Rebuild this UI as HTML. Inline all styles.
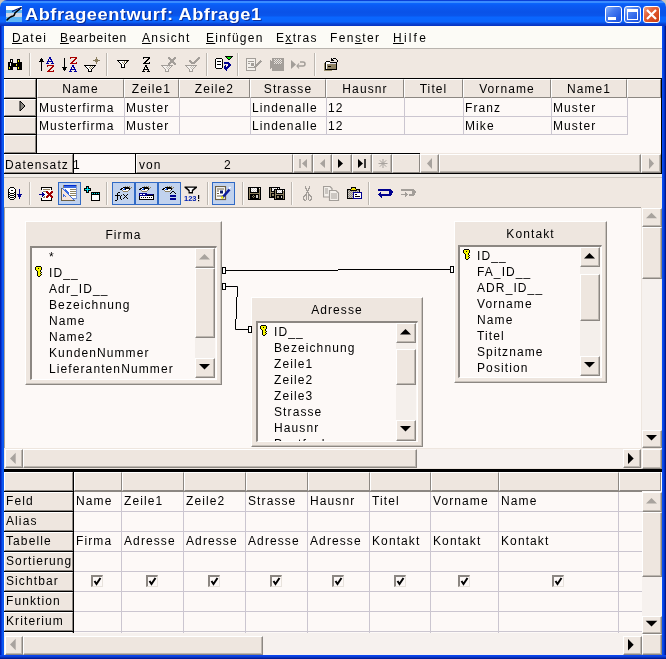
<!DOCTYPE html>
<html><head><meta charset="utf-8">
<style>
*{box-sizing:border-box}
html,body{margin:0;padding:0;width:666px;height:659px;overflow:hidden;background:#c8c4bc;font-family:"Liberation Sans",sans-serif;font-size:12px;color:#000}
.a{position:absolute}
.t{position:absolute;white-space:nowrap;line-height:14px;font-size:12px;letter-spacing:1.1px;margin-top:1px;will-change:transform}
.btn{position:absolute;background:#eee6df;border-top:1px solid #fff;border-left:1px solid #fff;border-right:1px solid #8c8782;border-bottom:1px solid #8c8782;box-shadow:inset -1px -1px 0 #bdb7b0}
.hd{position:absolute;background:#eee6df;border-top:1px solid #fff;border-left:1px solid #fff;border-right:1px solid #8c8782;border-bottom:1px solid #8c8782}
.sep{position:absolute;width:2px;border-left:1px solid #c5bfb8;border-right:1px solid #fff}
.tri-up{position:absolute;width:0;height:0;border-left:5px solid transparent;border-right:5px solid transparent;border-bottom:5px solid #000}
.tri-dn{position:absolute;width:0;height:0;border-left:5px solid transparent;border-right:5px solid transparent;border-top:5px solid #000}
.tri-r{position:absolute;width:0;height:0;border-top:5px solid transparent;border-bottom:5px solid transparent;border-left:5px solid #000}
.tri-l{position:absolute;width:0;height:0;border-top:5px solid transparent;border-bottom:5px solid transparent;border-right:5px solid #000}
.dis{border-bottom-color:#aaa5a0!important;border-top-color:#aaa5a0!important;border-left-color:#aaa5a0!important;border-right-color:#aaa5a0!important}
.hl{position:absolute;background:#c1d2ee;border:1px solid #316ac5}
</style></head><body>
<!-- window frame -->
<div class="a" style="left:0;top:0;width:666px;height:26px;background:linear-gradient(#0a40d8 0px,#0a40d8 1px,#3a8cff 1px,#3a8cff 3px,#0a68ff 3px,#0a5cf5 5px,#0a52e8 12px,#0a56ec 16px,#0a66ff 17px,#0a64fc 22px,#0a4ee0 23px,#0838c8 25px,#0834c0 26px);border-radius:7px 7px 0 0"></div>
<div class="a" style="left:0;top:26px;width:4px;height:633px;background:linear-gradient(to right,#0020b0 0,#0020b0 1px,#0838d8 1px,#0838d8 2px,#0a58f0 2px)"></div>
<div class="a" style="left:662px;top:26px;width:4px;height:633px;background:linear-gradient(to right,#0a4cf0 0,#0a4cf0 1px,#0840e0 1px,#0840e0 2px,#0030c0 2px,#0030c0 3px,#001890 3px)"></div>
<div class="a" style="left:0;top:655px;width:666px;height:4px;background:linear-gradient(#0a44f0 0,#0a44f0 1px,#0a40d8 1px,#0a40d8 2px,#0830b8 2px,#0830b8 3px,#001c98 3px)"></div>
<!-- app icon -->
<div class="a" style="left:6px;top:6px;width:16px;height:16px;background:linear-gradient(#fff 0,#fff 4px,#5fb6f4 4px,#5fb6f4 7px,#cfd8e6 7px,#cfd8e6 11px,#5fb6f4 11px,#5fb6f4 16px)"></div>
<svg class="a" style="left:6px;top:6px" width="16" height="16"><path d="M0.5 14.5 Q4 10.5 7 10 Q8.5 9.5 9 7 L15.5 1.5" stroke="#000" stroke-width="1.5" fill="none"/><path d="M6 5.5 Q10 3.5 15.5 1.5" stroke="#001a80" stroke-width="1.3" fill="none"/></svg>
<div class="t" style="left:25px;top:5px;font-weight:bold;font-size:16px;line-height:18px;color:#fff;letter-spacing:0.45px;transform:scaleX(1.14);transform-origin:0 0;text-shadow:1px 1px 0 #0a2e9a">Abfrageentwurf: Abfrage1</div>
<!-- title buttons -->
<div class="a" style="left:605px;top:6px;width:17px;height:17px;border:1px solid #fff;border-radius:3px;background:linear-gradient(135deg,#8cb4fa 0%,#4a7ef0 35%,#2a62e8 70%,#1c50d8 100%)"><div class="a" style="left:2px;top:10px;width:8px;height:3px;background:#fff"></div></div>
<div class="a" style="left:624px;top:6px;width:17px;height:17px;border:1px solid #fff;border-radius:3px;background:linear-gradient(135deg,#8cb4fa 0%,#4a7ef0 35%,#2a62e8 70%,#1c50d8 100%)"><div class="a" style="left:2px;top:2px;width:11px;height:11px;border:1px solid #fff;border-top-width:3px"></div></div>
<div class="a" style="left:643px;top:6px;width:17px;height:17px;border:1px solid #fff;border-radius:3px;background:linear-gradient(135deg,#f0a080 0%,#e4643c 35%,#d84c20 70%,#c83c14 100%)"><svg class="a" style="left:0;top:0" width="15" height="15"><path d="M3 3 L12 12 M12 3 L3 12" stroke="#fff" stroke-width="2.2"/></svg></div>
<!-- menu bar -->
<div class="a" style="left:4px;top:26px;width:658px;height:23px;background:#fcfbf6;border-bottom:1px solid #b9b4ae"></div>
<div class="t" style="left:12px;top:30px;letter-spacing:1.5px"><u>D</u>atei</div>
<div class="t" style="left:60px;top:30px;letter-spacing:0.9px"><u>B</u>earbeiten</div>
<div class="t" style="left:142px;top:30px;letter-spacing:1.35px"><u>A</u>nsicht</div>
<div class="t" style="left:206px;top:30px;letter-spacing:1.3px"><u>E</u>infügen</div>
<div class="t" style="left:276px;top:30px;letter-spacing:1.3px">E<u>x</u>tras</div>
<div class="t" style="left:330px;top:30px;letter-spacing:1.4px">Fen<u>s</u>ter</div>
<div class="t" style="left:393px;top:30px;letter-spacing:2.2px"><u>H</u>ilfe</div>
<!-- toolbar 1 -->
<div class="a" style="left:4px;top:49px;width:658px;height:29px;background:#f0e8e1"></div>

<!-- top grid -->
<div class="a" style="left:4px;top:78px;width:658px;height:96px;background:#000"></div>
<div class="a" style="left:37px;top:98px;width:624px;height:55px;background:#fdf9f7"></div>
<!-- header row -->
<div class="hd" style="left:4px;top:79px;width:32px;height:19px"></div>
<div class="hd" style="left:37px;top:79px;width:87px;height:19px"></div>
<div class="hd" style="left:124px;top:79px;width:55px;height:19px"></div>
<div class="hd" style="left:179px;top:79px;width:71px;height:19px"></div>
<div class="hd" style="left:250px;top:79px;width:76px;height:19px"></div>
<div class="hd" style="left:326px;top:79px;width:78px;height:19px"></div>
<div class="hd" style="left:404px;top:79px;width:59px;height:19px"></div>
<div class="hd" style="left:463px;top:79px;width:88px;height:19px"></div>
<div class="hd" style="left:551px;top:79px;width:76px;height:19px"></div>
<div class="hd" style="left:627px;top:79px;width:34px;height:19px"></div>
<div class="t" style="left:37px;width:87px;top:81px;text-align:center">Name</div>
<div class="t" style="left:124px;width:55px;top:81px;text-align:center">Zeile1</div>
<div class="t" style="left:179px;width:71px;top:81px;text-align:center">Zeile2</div>
<div class="t" style="left:250px;width:76px;top:81px;text-align:center">Strasse</div>
<div class="t" style="left:326px;width:78px;top:81px;text-align:center">Hausnr</div>
<div class="t" style="left:404px;width:59px;top:81px;text-align:center">Titel</div>
<div class="t" style="left:463px;width:88px;top:81px;text-align:center">Vorname</div>
<div class="t" style="left:551px;width:76px;top:81px;text-align:center">Name1</div>
<!-- row headers -->
<div class="hd" style="left:4px;top:99px;width:32px;height:17px"></div>
<div class="hd" style="left:4px;top:117px;width:32px;height:17px"></div>
<div class="hd" style="left:4px;top:135px;width:32px;height:18px"></div>
<svg class="a" style="left:19px;top:99px" width="8" height="14"><path d="M1 2 L6 7 L1 12 Z" fill="#8c8882" stroke="#000" stroke-width="1"/></svg>
<!-- data grid lines -->
<div class="a" style="left:37px;top:116px;width:590px;height:1px;background:#cbc6d0"></div>
<div class="a" style="left:37px;top:134px;width:590px;height:1px;background:#cbc6d0"></div>
<div class="a" style="left:124px;top:98px;width:1px;height:37px;background:#cbc6d0"></div>
<div class="a" style="left:179px;top:98px;width:1px;height:37px;background:#cbc6d0"></div>
<div class="a" style="left:250px;top:98px;width:1px;height:37px;background:#cbc6d0"></div>
<div class="a" style="left:326px;top:98px;width:1px;height:37px;background:#cbc6d0"></div>
<div class="a" style="left:404px;top:98px;width:1px;height:37px;background:#cbc6d0"></div>
<div class="a" style="left:463px;top:98px;width:1px;height:37px;background:#cbc6d0"></div>
<div class="a" style="left:551px;top:98px;width:1px;height:37px;background:#cbc6d0"></div>
<div class="a" style="left:627px;top:98px;width:1px;height:37px;background:#cbc6d0"></div>
<div class="t" style="left:39px;top:100px">Musterfirma</div>
<div class="t" style="left:126px;top:100px">Muster</div>
<div class="t" style="left:252px;top:100px">Lindenalle</div>
<div class="t" style="left:328px;top:100px">12</div>
<div class="t" style="left:465px;top:100px">Franz</div>
<div class="t" style="left:553px;top:100px">Muster</div>
<div class="t" style="left:39px;top:118px">Musterfirma</div>
<div class="t" style="left:126px;top:118px">Muster</div>
<div class="t" style="left:252px;top:118px">Lindenalle</div>
<div class="t" style="left:328px;top:118px">12</div>
<div class="t" style="left:465px;top:118px">Mike</div>
<div class="t" style="left:553px;top:118px">Muster</div>
<!-- record bar -->
<div class="hd" style="left:4px;top:154px;width:69px;height:19px"></div>
<div class="a" style="left:74px;top:154px;width:61px;height:19px;background:#fdf9f7"></div>
<div class="hd" style="left:136px;top:154px;width:157px;height:19px"></div>
<div class="t" style="left:5px;top:157px">Datensatz</div>
<div class="t" style="left:73px;top:157px">1</div>
<div class="t" style="left:139px;top:157px">von</div>
<div class="t" style="left:224px;top:157px">2</div>
<div class="btn" style="left:293px;top:154px;width:20px;height:19px"></div>
<div class="btn" style="left:313px;top:154px;width:19px;height:19px"></div>
<div class="btn" style="left:332px;top:154px;width:20px;height:19px"></div>
<div class="btn" style="left:352px;top:154px;width:20px;height:19px"></div>
<div class="btn" style="left:372px;top:154px;width:20px;height:19px"></div>
<div class="hd" style="left:392px;top:154px;width:28px;height:19px"></div>
<svg class="a" style="left:293px;top:154px" width="100" height="19">
 <path d="M7 5 V14" stroke="#a8a39e" stroke-width="1.5"/><path d="M14 5 L9 9.5 L14 14Z" fill="#a8a39e"/>
 <path d="M32 5 L27 9.5 L32 14Z" fill="#a8a39e"/>
 <path d="M45 5 L50 9.5 L45 14Z" fill="#000"/>
 <path d="M65 5 L70 9.5 L65 14Z" fill="#000"/><path d="M72 5 V14" stroke="#000" stroke-width="1.5"/>
 <path d="M90 5 V14 M85.5 9.5 H94.5 M86.8 6.3 L93.2 12.7 M93.2 6.3 L86.8 12.7" stroke="#a8a39e" stroke-width="1"/>
</svg>
<!-- h scrollbar -->
<div class="a" style="left:420px;top:153px;width:241px;height:20px;background:#eee6df"></div>
<div class="btn" style="left:420px;top:154px;width:19px;height:19px"></div>
<div class="btn" style="left:439px;top:154px;width:202px;height:19px"></div>
<div class="btn" style="left:641px;top:154px;width:20px;height:19px"></div>
<svg class="a" style="left:420px;top:154px" width="241" height="19"><path d="M12 4 L7 9.5 L12 15Z" fill="#a8a39e"/><path d="M229 4 L234 9.5 L229 15Z" fill="#a8a39e"/></svg>
<div class="a" style="left:4px;top:174px;width:658px;height:4px;background:#f1ede8;border-bottom:1px solid #c9c3bc"></div>



<div class="a" style="left:4px;top:178px;width:658px;height:30px;background:#f0e8e1"></div>
<div class="a" style="left:4px;top:207px;width:658px;height:262px;background:#fdf9f7"></div>
<div class="a" style="left:4px;top:207px;width:637px;height:1px;background:#a8a39d"></div>
<div class="a" style="left:4px;top:207px;width:1px;height:241px;background:#a8a39d"></div>
<div class="a" style="left:641px;top:207px;width:21px;height:262px;background:#eee6df"></div>
<div class="a" style="left:642px;top:227px;width:19px;height:221px;background:#f6f1ee"></div>
<div class="btn" style="left:642px;top:208px;width:20px;height:19px"></div>
<div class="btn" style="left:642px;top:227px;width:20px;height:52px"></div>
<div class="btn" style="left:642px;top:430px;width:20px;height:18px"></div>
<svg class="a" style="left:642px;top:208px" width="19" height="240"><path d="M4 10.2 L9.5 4.7 L15.0 10.2Z" fill="#a8a39e"/><path d="M4 227 L9.5 232.5 L15.0 227Z" fill="#000"/></svg>
<div class="a" style="left:4px;top:448px;width:638px;height:21px;background:#eee6df"></div>
<div class="a" style="left:23px;top:449px;width:600px;height:19px;background:#f6f1ee"></div>
<div class="btn" style="left:5px;top:449px;width:18px;height:19px"></div>
<div class="btn" style="left:23px;top:449px;width:394px;height:19px"></div>
<div class="btn" style="left:623px;top:449px;width:18px;height:19px"></div>
<div class="btn" style="left:642px;top:449px;width:20px;height:20px"></div>
<svg class="a" style="left:5px;top:449px" width="636" height="19"><path d="M10.7 3.7 L5 9.4 L10.7 15.100000000000001Z" fill="#a8a39e"/><path d="M623 3.7 L628.7 9.4 L623 15.100000000000001Z" fill="#000"/></svg>
<div class="a" style="left:25px;top:221px;width:197px;height:164px;background:#eee6df;border-top:1px solid #fff;border-left:1px solid #fff;border-right:1px solid #8c8782;border-bottom:1px solid #8c8782;box-shadow:inset -1px -1px 0 #c8c2bb"></div>
<div class="t" style="left:25px;width:197px;top:227px;text-align:center">Firma</div>
<div class="a" style="left:30px;top:246px;width:187px;height:134px;background:#fdf9f7;border-top:2px solid #8c8782;border-left:2px solid #8c8782;border-right:1px solid #fff;border-bottom:1px solid #fff;overflow:hidden"></div>
<div class="a" style="left:32px;top:248px;width:184px;height:131px;overflow:hidden">
<div class="t" style="left:17px;top:1px">*</div>
<div class="t" style="left:17px;top:17px">ID__</div>
<div class="t" style="left:17px;top:33px">Adr_ID__</div>
<div class="t" style="left:17px;top:49px">Bezeichnung</div>
<div class="t" style="left:17px;top:65px">Name</div>
<div class="t" style="left:17px;top:81px">Name2</div>
<div class="t" style="left:17px;top:97px">KundenNummer</div>
<div class="t" style="left:17px;top:113px">LieferantenNummer</div>
<svg class="a" style="left:3px;top:18px" width="8" height="11" shape-rendering="crispEdges"><rect x="1" y="0" width="1" height="1" fill="#000"/><rect x="2" y="0" width="1" height="1" fill="#000"/><rect x="3" y="0" width="1" height="1" fill="#000"/><rect x="4" y="0" width="1" height="1" fill="#000"/><rect x="5" y="0" width="1" height="1" fill="#000"/><rect x="0" y="1" width="1" height="1" fill="#000"/><rect x="1" y="1" width="1" height="1" fill="#f8f800"/><rect x="2" y="1" width="1" height="1" fill="#f8f800"/><rect x="3" y="1" width="1" height="1" fill="#f8f800"/><rect x="4" y="1" width="1" height="1" fill="#f8f800"/><rect x="5" y="1" width="1" height="1" fill="#f8f800"/><rect x="6" y="1" width="1" height="1" fill="#000"/><rect x="0" y="2" width="1" height="1" fill="#000"/><rect x="1" y="2" width="1" height="1" fill="#f8f800"/><rect x="2" y="2" width="1" height="1" fill="#f8f800"/><rect x="3" y="2" width="1" height="1" fill="#000"/><rect x="4" y="2" width="1" height="1" fill="#f8f800"/><rect x="5" y="2" width="1" height="1" fill="#f8f800"/><rect x="6" y="2" width="1" height="1" fill="#000"/><rect x="0" y="3" width="1" height="1" fill="#000"/><rect x="1" y="3" width="1" height="1" fill="#f8f800"/><rect x="2" y="3" width="1" height="1" fill="#f8f800"/><rect x="3" y="3" width="1" height="1" fill="#f8f800"/><rect x="4" y="3" width="1" height="1" fill="#f8f800"/><rect x="5" y="3" width="1" height="1" fill="#f8f800"/><rect x="6" y="3" width="1" height="1" fill="#000"/><rect x="1" y="4" width="1" height="1" fill="#000"/><rect x="2" y="4" width="1" height="1" fill="#f8f800"/><rect x="3" y="4" width="1" height="1" fill="#f8f800"/><rect x="4" y="4" width="1" height="1" fill="#f8f800"/><rect x="5" y="4" width="1" height="1" fill="#000"/><rect x="2" y="5" width="1" height="1" fill="#000"/><rect x="3" y="5" width="1" height="1" fill="#f8f800"/><rect x="4" y="5" width="1" height="1" fill="#f8f800"/><rect x="5" y="5" width="1" height="1" fill="#000"/><rect x="2" y="6" width="1" height="1" fill="#000"/><rect x="3" y="6" width="1" height="1" fill="#f8f800"/><rect x="4" y="6" width="1" height="1" fill="#f8f800"/><rect x="5" y="6" width="1" height="1" fill="#f8f800"/><rect x="6" y="6" width="1" height="1" fill="#000"/><rect x="2" y="7" width="1" height="1" fill="#000"/><rect x="3" y="7" width="1" height="1" fill="#f8f800"/><rect x="4" y="7" width="1" height="1" fill="#f8f800"/><rect x="5" y="7" width="1" height="1" fill="#000"/><rect x="2" y="8" width="1" height="1" fill="#000"/><rect x="3" y="8" width="1" height="1" fill="#f8f800"/><rect x="4" y="8" width="1" height="1" fill="#f8f800"/><rect x="5" y="8" width="1" height="1" fill="#f8f800"/><rect x="6" y="8" width="1" height="1" fill="#000"/><rect x="2" y="9" width="1" height="1" fill="#000"/><rect x="3" y="9" width="1" height="1" fill="#f8f800"/><rect x="4" y="9" width="1" height="1" fill="#f8f800"/><rect x="5" y="9" width="1" height="1" fill="#000"/><rect x="3" y="10" width="1" height="1" fill="#000"/><rect x="4" y="10" width="1" height="1" fill="#000"/></svg>
</div>
<div class="a" style="left:195px;top:248px;width:20px;height:130px;background:#f4efeb"></div>
<div class="btn" style="left:195px;top:248px;width:20px;height:20px"></div>
<div class="btn" style="left:195px;top:268px;width:20px;height:70px"></div>
<div class="btn" style="left:195px;top:358px;width:20px;height:20px"></div>
<svg class="a" style="left:195px;top:248px" width="19" height="130"><path d="M4 11.5 L9.5 6 L15.0 11.5Z" fill="#a8a39e"/><path d="M4 116 L9.5 121.5 L15.0 116Z" fill="#000"/></svg>
<div class="a" style="left:251px;top:297px;width:172px;height:150px;background:#eee6df;border-top:1px solid #fff;border-left:1px solid #fff;border-right:1px solid #8c8782;border-bottom:1px solid #8c8782;box-shadow:inset -1px -1px 0 #c8c2bb"></div>
<div class="t" style="left:251px;width:172px;top:302px;text-align:center">Adresse</div>
<div class="a" style="left:256px;top:321px;width:162px;height:121px;background:#fdf9f7;border-top:2px solid #8c8782;border-left:2px solid #8c8782;border-right:1px solid #fff;border-bottom:1px solid #fff;overflow:hidden"></div>
<div class="a" style="left:258px;top:323px;width:159px;height:118px;overflow:hidden">
<div class="t" style="left:16px;top:1px">ID__</div>
<div class="t" style="left:16px;top:17px">Bezeichnung</div>
<div class="t" style="left:16px;top:33px">Zeile1</div>
<div class="t" style="left:16px;top:49px">Zeile2</div>
<div class="t" style="left:16px;top:65px">Zeile3</div>
<div class="t" style="left:16px;top:81px">Strasse</div>
<div class="t" style="left:16px;top:97px">Hausnr</div>
<div class="t" style="left:16px;top:113px">Postfach</div>
<svg class="a" style="left:2px;top:2px" width="8" height="11" shape-rendering="crispEdges"><rect x="1" y="0" width="1" height="1" fill="#000"/><rect x="2" y="0" width="1" height="1" fill="#000"/><rect x="3" y="0" width="1" height="1" fill="#000"/><rect x="4" y="0" width="1" height="1" fill="#000"/><rect x="5" y="0" width="1" height="1" fill="#000"/><rect x="0" y="1" width="1" height="1" fill="#000"/><rect x="1" y="1" width="1" height="1" fill="#f8f800"/><rect x="2" y="1" width="1" height="1" fill="#f8f800"/><rect x="3" y="1" width="1" height="1" fill="#f8f800"/><rect x="4" y="1" width="1" height="1" fill="#f8f800"/><rect x="5" y="1" width="1" height="1" fill="#f8f800"/><rect x="6" y="1" width="1" height="1" fill="#000"/><rect x="0" y="2" width="1" height="1" fill="#000"/><rect x="1" y="2" width="1" height="1" fill="#f8f800"/><rect x="2" y="2" width="1" height="1" fill="#f8f800"/><rect x="3" y="2" width="1" height="1" fill="#000"/><rect x="4" y="2" width="1" height="1" fill="#f8f800"/><rect x="5" y="2" width="1" height="1" fill="#f8f800"/><rect x="6" y="2" width="1" height="1" fill="#000"/><rect x="0" y="3" width="1" height="1" fill="#000"/><rect x="1" y="3" width="1" height="1" fill="#f8f800"/><rect x="2" y="3" width="1" height="1" fill="#f8f800"/><rect x="3" y="3" width="1" height="1" fill="#f8f800"/><rect x="4" y="3" width="1" height="1" fill="#f8f800"/><rect x="5" y="3" width="1" height="1" fill="#f8f800"/><rect x="6" y="3" width="1" height="1" fill="#000"/><rect x="1" y="4" width="1" height="1" fill="#000"/><rect x="2" y="4" width="1" height="1" fill="#f8f800"/><rect x="3" y="4" width="1" height="1" fill="#f8f800"/><rect x="4" y="4" width="1" height="1" fill="#f8f800"/><rect x="5" y="4" width="1" height="1" fill="#000"/><rect x="2" y="5" width="1" height="1" fill="#000"/><rect x="3" y="5" width="1" height="1" fill="#f8f800"/><rect x="4" y="5" width="1" height="1" fill="#f8f800"/><rect x="5" y="5" width="1" height="1" fill="#000"/><rect x="2" y="6" width="1" height="1" fill="#000"/><rect x="3" y="6" width="1" height="1" fill="#f8f800"/><rect x="4" y="6" width="1" height="1" fill="#f8f800"/><rect x="5" y="6" width="1" height="1" fill="#f8f800"/><rect x="6" y="6" width="1" height="1" fill="#000"/><rect x="2" y="7" width="1" height="1" fill="#000"/><rect x="3" y="7" width="1" height="1" fill="#f8f800"/><rect x="4" y="7" width="1" height="1" fill="#f8f800"/><rect x="5" y="7" width="1" height="1" fill="#000"/><rect x="2" y="8" width="1" height="1" fill="#000"/><rect x="3" y="8" width="1" height="1" fill="#f8f800"/><rect x="4" y="8" width="1" height="1" fill="#f8f800"/><rect x="5" y="8" width="1" height="1" fill="#f8f800"/><rect x="6" y="8" width="1" height="1" fill="#000"/><rect x="2" y="9" width="1" height="1" fill="#000"/><rect x="3" y="9" width="1" height="1" fill="#f8f800"/><rect x="4" y="9" width="1" height="1" fill="#f8f800"/><rect x="5" y="9" width="1" height="1" fill="#000"/><rect x="3" y="10" width="1" height="1" fill="#000"/><rect x="4" y="10" width="1" height="1" fill="#000"/></svg>
</div>
<div class="a" style="left:396px;top:323px;width:20px;height:118px;background:#f4efeb"></div>
<div class="btn" style="left:396px;top:323px;width:20px;height:20px"></div>
<div class="btn" style="left:396px;top:349px;width:20px;height:36px"></div>
<div class="btn" style="left:396px;top:420px;width:20px;height:21px"></div>
<svg class="a" style="left:396px;top:323px" width="19" height="118"><path d="M4 11.5 L9.5 6 L15.0 11.5Z" fill="#000"/><path d="M4 103 L9.5 108.5 L15.0 103Z" fill="#000"/></svg>
<div class="a" style="left:454px;top:221px;width:153px;height:162px;background:#eee6df;border-top:1px solid #fff;border-left:1px solid #fff;border-right:1px solid #8c8782;border-bottom:1px solid #8c8782;box-shadow:inset -1px -1px 0 #c8c2bb"></div>
<div class="t" style="left:454px;width:153px;top:226px;text-align:center">Kontakt</div>
<div class="a" style="left:458px;top:245px;width:144px;height:133px;background:#fdf9f7;border-top:2px solid #8c8782;border-left:2px solid #8c8782;border-right:1px solid #fff;border-bottom:1px solid #fff;overflow:hidden"></div>
<div class="a" style="left:460px;top:247px;width:141px;height:130px;overflow:hidden">
<div class="t" style="left:17px;top:1px">ID__</div>
<div class="t" style="left:17px;top:17px">FA_ID__</div>
<div class="t" style="left:17px;top:33px">ADR_ID__</div>
<div class="t" style="left:17px;top:49px">Vorname</div>
<div class="t" style="left:17px;top:65px">Name</div>
<div class="t" style="left:17px;top:81px">Titel</div>
<div class="t" style="left:17px;top:97px">Spitzname</div>
<div class="t" style="left:17px;top:113px">Position</div>
<svg class="a" style="left:3px;top:2px" width="8" height="11" shape-rendering="crispEdges"><rect x="1" y="0" width="1" height="1" fill="#000"/><rect x="2" y="0" width="1" height="1" fill="#000"/><rect x="3" y="0" width="1" height="1" fill="#000"/><rect x="4" y="0" width="1" height="1" fill="#000"/><rect x="5" y="0" width="1" height="1" fill="#000"/><rect x="0" y="1" width="1" height="1" fill="#000"/><rect x="1" y="1" width="1" height="1" fill="#f8f800"/><rect x="2" y="1" width="1" height="1" fill="#f8f800"/><rect x="3" y="1" width="1" height="1" fill="#f8f800"/><rect x="4" y="1" width="1" height="1" fill="#f8f800"/><rect x="5" y="1" width="1" height="1" fill="#f8f800"/><rect x="6" y="1" width="1" height="1" fill="#000"/><rect x="0" y="2" width="1" height="1" fill="#000"/><rect x="1" y="2" width="1" height="1" fill="#f8f800"/><rect x="2" y="2" width="1" height="1" fill="#f8f800"/><rect x="3" y="2" width="1" height="1" fill="#000"/><rect x="4" y="2" width="1" height="1" fill="#f8f800"/><rect x="5" y="2" width="1" height="1" fill="#f8f800"/><rect x="6" y="2" width="1" height="1" fill="#000"/><rect x="0" y="3" width="1" height="1" fill="#000"/><rect x="1" y="3" width="1" height="1" fill="#f8f800"/><rect x="2" y="3" width="1" height="1" fill="#f8f800"/><rect x="3" y="3" width="1" height="1" fill="#f8f800"/><rect x="4" y="3" width="1" height="1" fill="#f8f800"/><rect x="5" y="3" width="1" height="1" fill="#f8f800"/><rect x="6" y="3" width="1" height="1" fill="#000"/><rect x="1" y="4" width="1" height="1" fill="#000"/><rect x="2" y="4" width="1" height="1" fill="#f8f800"/><rect x="3" y="4" width="1" height="1" fill="#f8f800"/><rect x="4" y="4" width="1" height="1" fill="#f8f800"/><rect x="5" y="4" width="1" height="1" fill="#000"/><rect x="2" y="5" width="1" height="1" fill="#000"/><rect x="3" y="5" width="1" height="1" fill="#f8f800"/><rect x="4" y="5" width="1" height="1" fill="#f8f800"/><rect x="5" y="5" width="1" height="1" fill="#000"/><rect x="2" y="6" width="1" height="1" fill="#000"/><rect x="3" y="6" width="1" height="1" fill="#f8f800"/><rect x="4" y="6" width="1" height="1" fill="#f8f800"/><rect x="5" y="6" width="1" height="1" fill="#f8f800"/><rect x="6" y="6" width="1" height="1" fill="#000"/><rect x="2" y="7" width="1" height="1" fill="#000"/><rect x="3" y="7" width="1" height="1" fill="#f8f800"/><rect x="4" y="7" width="1" height="1" fill="#f8f800"/><rect x="5" y="7" width="1" height="1" fill="#000"/><rect x="2" y="8" width="1" height="1" fill="#000"/><rect x="3" y="8" width="1" height="1" fill="#f8f800"/><rect x="4" y="8" width="1" height="1" fill="#f8f800"/><rect x="5" y="8" width="1" height="1" fill="#f8f800"/><rect x="6" y="8" width="1" height="1" fill="#000"/><rect x="2" y="9" width="1" height="1" fill="#000"/><rect x="3" y="9" width="1" height="1" fill="#f8f800"/><rect x="4" y="9" width="1" height="1" fill="#f8f800"/><rect x="5" y="9" width="1" height="1" fill="#000"/><rect x="3" y="10" width="1" height="1" fill="#000"/><rect x="4" y="10" width="1" height="1" fill="#000"/></svg>
</div>
<div class="a" style="left:580px;top:247px;width:20px;height:129px;background:#f4efeb"></div>
<div class="btn" style="left:580px;top:247px;width:20px;height:20px"></div>
<div class="btn" style="left:580px;top:274px;width:20px;height:47px"></div>
<div class="btn" style="left:580px;top:356px;width:20px;height:20px"></div>
<svg class="a" style="left:580px;top:247px" width="19" height="129"><path d="M4 11.5 L9.5 6 L15.0 11.5Z" fill="#000"/><path d="M4 115 L9.5 120.5 L15.0 115Z" fill="#000"/></svg>
<svg class="a" style="left:0;top:0" width="666" height="470"><path d="M226 270.5 H338 M338 269.5 H450" stroke="#000" stroke-width="1"/><rect x="222.5" y="267.5" width="3" height="6" fill="#fff" stroke="#000"/><rect x="450.5" y="266.5" width="3" height="6" fill="#fff" stroke="#000"/><path d="M226 286.5 H237.5 V297 M236.5 297 V319 M235.5 319 V329.5 H248" stroke="#000" stroke-width="1" fill="none"/><rect x="222.5" y="283.5" width="3" height="6" fill="#fff" stroke="#000"/><rect x="248.5" y="326.5" width="3" height="6" fill="#fff" stroke="#000"/></svg>
<div class="a" style="left:4px;top:469px;width:658px;height:3px;background:#000"></div>

<div class="a" style="left:4px;top:472px;width:658px;height:183px;background:#fdf9f7"></div>
<div class="a" style="left:4px;top:472px;width:70px;height:163px;background:#000"></div>
<div class="hd" style="left:4px;top:472px;width:69px;height:19px"></div>
<div class="hd" style="left:74px;top:472px;width:48px;height:19px"></div>
<div class="hd" style="left:122px;top:472px;width:62px;height:19px"></div>
<div class="hd" style="left:184px;top:472px;width:62px;height:19px"></div>
<div class="hd" style="left:246px;top:472px;width:62px;height:19px"></div>
<div class="hd" style="left:308px;top:472px;width:62px;height:19px"></div>
<div class="hd" style="left:370px;top:472px;width:61px;height:19px"></div>
<div class="hd" style="left:431px;top:472px;width:68px;height:19px"></div>
<div class="hd" style="left:499px;top:472px;width:120px;height:19px"></div>
<div class="hd" style="left:619px;top:472px;width:42px;height:19px"></div>
<div class="a" style="left:74px;top:491px;width:568px;height:1px;background:#8c8782"></div>
<div class="hd" style="left:4px;top:492px;width:69px;height:19px"></div>
<div class="t" style="left:6px;top:493px;">Feld</div>
<div class="a" style="left:74px;top:511px;width:568px;height:1px;background:#cbc6d0"></div>
<div class="hd" style="left:4px;top:512px;width:69px;height:19px"></div>
<div class="t" style="left:6px;top:513px;">Alias</div>
<div class="a" style="left:74px;top:531px;width:568px;height:1px;background:#cbc6d0"></div>
<div class="hd" style="left:4px;top:532px;width:69px;height:19px"></div>
<div class="t" style="left:6px;top:533px;">Tabelle</div>
<div class="a" style="left:74px;top:551px;width:568px;height:1px;background:#cbc6d0"></div>
<div class="hd" style="left:4px;top:552px;width:69px;height:19px"></div>
<div class="t" style="left:6px;top:553px;">Sortierung</div>
<div class="a" style="left:74px;top:571px;width:568px;height:1px;background:#cbc6d0"></div>
<div class="hd" style="left:4px;top:572px;width:69px;height:19px"></div>
<div class="t" style="left:6px;top:573px;">Sichtbar</div>
<div class="a" style="left:74px;top:591px;width:568px;height:1px;background:#cbc6d0"></div>
<div class="hd" style="left:4px;top:592px;width:69px;height:19px"></div>
<div class="t" style="left:6px;top:593px;">Funktion</div>
<div class="a" style="left:74px;top:611px;width:568px;height:1px;background:#cbc6d0"></div>
<div class="hd" style="left:4px;top:612px;width:69px;height:19px"></div>
<div class="t" style="left:6px;top:613px;">Kriterium</div>
<div class="a" style="left:74px;top:631px;width:568px;height:1px;background:#cbc6d0"></div>
<div class="hd" style="left:4px;top:632px;width:69px;height:3px"></div>
<div class="a" style="left:121px;top:492px;width:1px;height:143px;background:#cbc6d0"></div>
<div class="a" style="left:183px;top:492px;width:1px;height:143px;background:#cbc6d0"></div>
<div class="a" style="left:245px;top:492px;width:1px;height:143px;background:#cbc6d0"></div>
<div class="a" style="left:307px;top:492px;width:1px;height:143px;background:#cbc6d0"></div>
<div class="a" style="left:369px;top:492px;width:1px;height:143px;background:#cbc6d0"></div>
<div class="a" style="left:430px;top:492px;width:1px;height:143px;background:#cbc6d0"></div>
<div class="a" style="left:498px;top:492px;width:1px;height:143px;background:#cbc6d0"></div>
<div class="a" style="left:618px;top:492px;width:1px;height:143px;background:#cbc6d0"></div>
<div class="t" style="left:76px;top:493px;">Name</div>
<div class="t" style="left:76px;top:533px;">Firma</div>
<div class="a" style="left:91px;top:575px;width:12px;height:12px;background:#fdf9f7;border-top:2px solid #8c8782;border-left:2px solid #8c8782;border-right:1px solid #e8e3dd;border-bottom:1px solid #e8e3dd"></div>
<svg class="a" style="left:91px;top:575px" width="12" height="12"><path d="M3.5 6 L5.5 9 L9.5 3" stroke="#000" stroke-width="2" fill="none"/></svg>
<div class="t" style="left:124px;top:493px;">Zeile1</div>
<div class="t" style="left:124px;top:533px;">Adresse</div>
<div class="a" style="left:146px;top:575px;width:12px;height:12px;background:#fdf9f7;border-top:2px solid #8c8782;border-left:2px solid #8c8782;border-right:1px solid #e8e3dd;border-bottom:1px solid #e8e3dd"></div>
<svg class="a" style="left:146px;top:575px" width="12" height="12"><path d="M3.5 6 L5.5 9 L9.5 3" stroke="#000" stroke-width="2" fill="none"/></svg>
<div class="t" style="left:186px;top:493px;">Zeile2</div>
<div class="t" style="left:186px;top:533px;">Adresse</div>
<div class="a" style="left:208px;top:575px;width:12px;height:12px;background:#fdf9f7;border-top:2px solid #8c8782;border-left:2px solid #8c8782;border-right:1px solid #e8e3dd;border-bottom:1px solid #e8e3dd"></div>
<svg class="a" style="left:208px;top:575px" width="12" height="12"><path d="M3.5 6 L5.5 9 L9.5 3" stroke="#000" stroke-width="2" fill="none"/></svg>
<div class="t" style="left:248px;top:493px;">Strasse</div>
<div class="t" style="left:248px;top:533px;">Adresse</div>
<div class="a" style="left:270px;top:575px;width:12px;height:12px;background:#fdf9f7;border-top:2px solid #8c8782;border-left:2px solid #8c8782;border-right:1px solid #e8e3dd;border-bottom:1px solid #e8e3dd"></div>
<svg class="a" style="left:270px;top:575px" width="12" height="12"><path d="M3.5 6 L5.5 9 L9.5 3" stroke="#000" stroke-width="2" fill="none"/></svg>
<div class="t" style="left:310px;top:493px;">Hausnr</div>
<div class="t" style="left:310px;top:533px;">Adresse</div>
<div class="a" style="left:332px;top:575px;width:12px;height:12px;background:#fdf9f7;border-top:2px solid #8c8782;border-left:2px solid #8c8782;border-right:1px solid #e8e3dd;border-bottom:1px solid #e8e3dd"></div>
<svg class="a" style="left:332px;top:575px" width="12" height="12"><path d="M3.5 6 L5.5 9 L9.5 3" stroke="#000" stroke-width="2" fill="none"/></svg>
<div class="t" style="left:372px;top:493px;">Titel</div>
<div class="t" style="left:372px;top:533px;">Kontakt</div>
<div class="a" style="left:394px;top:575px;width:12px;height:12px;background:#fdf9f7;border-top:2px solid #8c8782;border-left:2px solid #8c8782;border-right:1px solid #e8e3dd;border-bottom:1px solid #e8e3dd"></div>
<svg class="a" style="left:394px;top:575px" width="12" height="12"><path d="M3.5 6 L5.5 9 L9.5 3" stroke="#000" stroke-width="2" fill="none"/></svg>
<div class="t" style="left:433px;top:493px;">Vorname</div>
<div class="t" style="left:433px;top:533px;">Kontakt</div>
<div class="a" style="left:458px;top:575px;width:12px;height:12px;background:#fdf9f7;border-top:2px solid #8c8782;border-left:2px solid #8c8782;border-right:1px solid #e8e3dd;border-bottom:1px solid #e8e3dd"></div>
<svg class="a" style="left:458px;top:575px" width="12" height="12"><path d="M3.5 6 L5.5 9 L9.5 3" stroke="#000" stroke-width="2" fill="none"/></svg>
<div class="t" style="left:501px;top:493px;">Name</div>
<div class="t" style="left:501px;top:533px;">Kontakt</div>
<div class="a" style="left:552px;top:575px;width:12px;height:12px;background:#fdf9f7;border-top:2px solid #8c8782;border-left:2px solid #8c8782;border-right:1px solid #e8e3dd;border-bottom:1px solid #e8e3dd"></div>
<svg class="a" style="left:552px;top:575px" width="12" height="12"><path d="M3.5 6 L5.5 9 L9.5 3" stroke="#000" stroke-width="2" fill="none"/></svg>
<div class="a" style="left:642px;top:492px;width:20px;height:143px;background:#f6f1ee"></div>
<div class="btn" style="left:642px;top:492px;width:20px;height:20px"></div>
<div class="btn" style="left:642px;top:512px;width:20px;height:65px"></div>
<div class="btn" style="left:642px;top:616px;width:20px;height:18px"></div>
<svg class="a" style="left:642px;top:492px" width="19" height="142"><path d="M4 11.5 L9.5 6 L15.0 11.5Z" fill="#a8a39e"/><path d="M3.7 128.8 L9.5 134.60000000000002 L15.3 128.8Z" fill="#000"/></svg>
<div class="a" style="left:4px;top:633px;width:638px;height:22px;background:#f6f1ee"></div>
<div class="btn" style="left:5px;top:636px;width:18px;height:19px"></div>
<div class="btn" style="left:23px;top:636px;width:240px;height:19px"></div>
<div class="btn" style="left:623px;top:636px;width:19px;height:19px"></div>
<div class="btn" style="left:642px;top:634px;width:20px;height:21px"></div>
<svg class="a" style="left:5px;top:636px" width="637" height="19"><path d="M10.7 2.8 L5 8.5 L10.7 14.2Z" fill="#a8a39e"/><path d="M623 3 L628.7 8.7 L623 14.4Z" fill="#000"/></svg>
<svg class="a" style="left:8px;top:59px" width="14" height="11" shape-rendering="crispEdges"><rect x="2" y="0" width="1" height="1" fill="#000"/><rect x="3" y="0" width="1" height="1" fill="#000"/><rect x="4" y="0" width="1" height="1" fill="#000"/><rect x="9" y="0" width="1" height="1" fill="#000"/><rect x="10" y="0" width="1" height="1" fill="#000"/><rect x="11" y="0" width="1" height="1" fill="#000"/><rect x="2" y="1" width="1" height="1" fill="#000"/><rect x="3" y="1" width="1" height="1" fill="#fff"/><rect x="4" y="1" width="1" height="1" fill="#000"/><rect x="9" y="1" width="1" height="1" fill="#000"/><rect x="10" y="1" width="1" height="1" fill="#e8e800"/><rect x="11" y="1" width="1" height="1" fill="#000"/><rect x="2" y="2" width="1" height="1" fill="#000"/><rect x="3" y="2" width="1" height="1" fill="#fff"/><rect x="4" y="2" width="1" height="1" fill="#000"/><rect x="9" y="2" width="1" height="1" fill="#000"/><rect x="10" y="2" width="1" height="1" fill="#e8e800"/><rect x="11" y="2" width="1" height="1" fill="#000"/><rect x="0" y="3" width="1" height="1" fill="#000"/><rect x="1" y="3" width="1" height="1" fill="#000"/><rect x="2" y="3" width="1" height="1" fill="#000"/><rect x="3" y="3" width="1" height="1" fill="#000"/><rect x="4" y="3" width="1" height="1" fill="#000"/><rect x="9" y="3" width="1" height="1" fill="#000"/><rect x="10" y="3" width="1" height="1" fill="#000"/><rect x="11" y="3" width="1" height="1" fill="#000"/><rect x="12" y="3" width="1" height="1" fill="#000"/><rect x="13" y="3" width="1" height="1" fill="#000"/><rect x="0" y="4" width="1" height="1" fill="#000"/><rect x="1" y="4" width="1" height="1" fill="#000"/><rect x="2" y="4" width="1" height="1" fill="#fff"/><rect x="3" y="4" width="1" height="1" fill="#000"/><rect x="4" y="4" width="1" height="1" fill="#000"/><rect x="5" y="4" width="1" height="1" fill="#000"/><rect x="6" y="4" width="1" height="1" fill="#000"/><rect x="7" y="4" width="1" height="1" fill="#000"/><rect x="8" y="4" width="1" height="1" fill="#000"/><rect x="9" y="4" width="1" height="1" fill="#000"/><rect x="10" y="4" width="1" height="1" fill="#000"/><rect x="11" y="4" width="1" height="1" fill="#000"/><rect x="12" y="4" width="1" height="1" fill="#000"/><rect x="13" y="4" width="1" height="1" fill="#000"/><rect x="0" y="5" width="1" height="1" fill="#000"/><rect x="1" y="5" width="1" height="1" fill="#000"/><rect x="2" y="5" width="1" height="1" fill="#fff"/><rect x="3" y="5" width="1" height="1" fill="#000"/><rect x="4" y="5" width="1" height="1" fill="#000"/><rect x="5" y="5" width="1" height="1" fill="#000"/><rect x="6" y="5" width="1" height="1" fill="#000"/><rect x="7" y="5" width="1" height="1" fill="#000"/><rect x="8" y="5" width="1" height="1" fill="#e8e800"/><rect x="9" y="5" width="1" height="1" fill="#000"/><rect x="10" y="5" width="1" height="1" fill="#000"/><rect x="11" y="5" width="1" height="1" fill="#000"/><rect x="12" y="5" width="1" height="1" fill="#000"/><rect x="13" y="5" width="1" height="1" fill="#000"/><rect x="0" y="6" width="1" height="1" fill="#000"/><rect x="1" y="6" width="1" height="1" fill="#000"/><rect x="2" y="6" width="1" height="1" fill="#fff"/><rect x="3" y="6" width="1" height="1" fill="#000"/><rect x="4" y="6" width="1" height="1" fill="#000"/><rect x="5" y="6" width="1" height="1" fill="#000"/><rect x="6" y="6" width="1" height="1" fill="#000"/><rect x="7" y="6" width="1" height="1" fill="#000"/><rect x="8" y="6" width="1" height="1" fill="#e8e800"/><rect x="9" y="6" width="1" height="1" fill="#000"/><rect x="10" y="6" width="1" height="1" fill="#000"/><rect x="11" y="6" width="1" height="1" fill="#000"/><rect x="12" y="6" width="1" height="1" fill="#000"/><rect x="13" y="6" width="1" height="1" fill="#000"/><rect x="0" y="7" width="1" height="1" fill="#000"/><rect x="1" y="7" width="1" height="1" fill="#000"/><rect x="2" y="7" width="1" height="1" fill="#000"/><rect x="3" y="7" width="1" height="1" fill="#000"/><rect x="4" y="7" width="1" height="1" fill="#000"/><rect x="5" y="7" width="1" height="1" fill="#000"/><rect x="6" y="7" width="1" height="1" fill="#000"/><rect x="7" y="7" width="1" height="1" fill="#000"/><rect x="8" y="7" width="1" height="1" fill="#000"/><rect x="9" y="7" width="1" height="1" fill="#000"/><rect x="10" y="7" width="1" height="1" fill="#000"/><rect x="11" y="7" width="1" height="1" fill="#000"/><rect x="12" y="7" width="1" height="1" fill="#000"/><rect x="13" y="7" width="1" height="1" fill="#000"/><rect x="0" y="8" width="1" height="1" fill="#000"/><rect x="1" y="8" width="1" height="1" fill="#e8e800"/><rect x="2" y="8" width="1" height="1" fill="#000"/><rect x="3" y="8" width="1" height="1" fill="#000"/><rect x="4" y="8" width="1" height="1" fill="#000"/><rect x="9" y="8" width="1" height="1" fill="#000"/><rect x="10" y="8" width="1" height="1" fill="#e8e800"/><rect x="11" y="8" width="1" height="1" fill="#000"/><rect x="12" y="8" width="1" height="1" fill="#000"/><rect x="13" y="8" width="1" height="1" fill="#000"/><rect x="0" y="9" width="1" height="1" fill="#000"/><rect x="1" y="9" width="1" height="1" fill="#e8e800"/><rect x="2" y="9" width="1" height="1" fill="#000"/><rect x="3" y="9" width="1" height="1" fill="#000"/><rect x="4" y="9" width="1" height="1" fill="#000"/><rect x="9" y="9" width="1" height="1" fill="#000"/><rect x="10" y="9" width="1" height="1" fill="#e8e800"/><rect x="11" y="9" width="1" height="1" fill="#000"/><rect x="12" y="9" width="1" height="1" fill="#000"/><rect x="13" y="9" width="1" height="1" fill="#000"/><rect x="0" y="10" width="1" height="1" fill="#000"/><rect x="1" y="10" width="1" height="1" fill="#000"/><rect x="2" y="10" width="1" height="1" fill="#000"/><rect x="3" y="10" width="1" height="1" fill="#000"/><rect x="4" y="10" width="1" height="1" fill="#000"/><rect x="9" y="10" width="1" height="1" fill="#000"/><rect x="10" y="10" width="1" height="1" fill="#000"/><rect x="11" y="10" width="1" height="1" fill="#000"/><rect x="12" y="10" width="1" height="1" fill="#000"/><rect x="13" y="10" width="1" height="1" fill="#000"/></svg>
<div class="a" style="left:29px;top:53px;width:1px;height:23px;background:#bdb7b0"></div>
<div class="a" style="left:30px;top:53px;width:1px;height:23px;background:#fbf9f6"></div>
<svg class="a" style="left:39px;top:58px" width="5" height="13" shape-rendering="crispEdges"><rect x="2" y="0" width="1" height="1" fill="#000"/><rect x="1" y="1" width="1" height="1" fill="#000"/><rect x="2" y="1" width="1" height="1" fill="#000"/><rect x="3" y="1" width="1" height="1" fill="#000"/><rect x="1" y="2" width="1" height="1" fill="#000"/><rect x="2" y="2" width="1" height="1" fill="#000"/><rect x="3" y="2" width="1" height="1" fill="#000"/><rect x="0" y="3" width="1" height="1" fill="#000"/><rect x="1" y="3" width="1" height="1" fill="#000"/><rect x="2" y="3" width="1" height="1" fill="#000"/><rect x="3" y="3" width="1" height="1" fill="#000"/><rect x="4" y="3" width="1" height="1" fill="#000"/><rect x="2" y="4" width="1" height="1" fill="#000"/><rect x="2" y="5" width="1" height="1" fill="#000"/><rect x="2" y="6" width="1" height="1" fill="#000"/><rect x="2" y="7" width="1" height="1" fill="#000"/><rect x="2" y="8" width="1" height="1" fill="#000"/><rect x="2" y="9" width="1" height="1" fill="#000"/><rect x="2" y="10" width="1" height="1" fill="#000"/><rect x="2" y="11" width="1" height="1" fill="#000"/><rect x="2" y="12" width="1" height="1" fill="#000"/></svg>
<svg class="a" style="left:46px;top:57px" width="8" height="7" shape-rendering="crispEdges"><rect x="3" y="0" width="1" height="1" fill="#0000a0"/><rect x="4" y="0" width="1" height="1" fill="#0000a0"/><rect x="3" y="1" width="1" height="1" fill="#0000a0"/><rect x="4" y="1" width="1" height="1" fill="#0000a0"/><rect x="2" y="2" width="1" height="1" fill="#0000a0"/><rect x="4" y="2" width="1" height="1" fill="#0000a0"/><rect x="5" y="2" width="1" height="1" fill="#0000a0"/><rect x="2" y="3" width="1" height="1" fill="#0000a0"/><rect x="5" y="3" width="1" height="1" fill="#0000a0"/><rect x="1" y="4" width="1" height="1" fill="#0000a0"/><rect x="2" y="4" width="1" height="1" fill="#0000a0"/><rect x="3" y="4" width="1" height="1" fill="#0000a0"/><rect x="4" y="4" width="1" height="1" fill="#0000a0"/><rect x="5" y="4" width="1" height="1" fill="#0000a0"/><rect x="6" y="4" width="1" height="1" fill="#0000a0"/><rect x="1" y="5" width="1" height="1" fill="#0000a0"/><rect x="6" y="5" width="1" height="1" fill="#0000a0"/><rect x="0" y="6" width="1" height="1" fill="#0000a0"/><rect x="1" y="6" width="1" height="1" fill="#0000a0"/><rect x="2" y="6" width="1" height="1" fill="#0000a0"/><rect x="5" y="6" width="1" height="1" fill="#0000a0"/><rect x="6" y="6" width="1" height="1" fill="#0000a0"/><rect x="7" y="6" width="1" height="1" fill="#0000a0"/></svg>
<svg class="a" style="left:47px;top:65px" width="7" height="7" shape-rendering="crispEdges"><rect x="0" y="0" width="1" height="1" fill="#a80000"/><rect x="1" y="0" width="1" height="1" fill="#a80000"/><rect x="2" y="0" width="1" height="1" fill="#a80000"/><rect x="3" y="0" width="1" height="1" fill="#a80000"/><rect x="4" y="0" width="1" height="1" fill="#a80000"/><rect x="5" y="0" width="1" height="1" fill="#a80000"/><rect x="6" y="0" width="1" height="1" fill="#a80000"/><rect x="0" y="1" width="1" height="1" fill="#a80000"/><rect x="5" y="1" width="1" height="1" fill="#a80000"/><rect x="6" y="1" width="1" height="1" fill="#a80000"/><rect x="4" y="2" width="1" height="1" fill="#a80000"/><rect x="5" y="2" width="1" height="1" fill="#a80000"/><rect x="3" y="3" width="1" height="1" fill="#a80000"/><rect x="4" y="3" width="1" height="1" fill="#a80000"/><rect x="2" y="4" width="1" height="1" fill="#a80000"/><rect x="3" y="4" width="1" height="1" fill="#a80000"/><rect x="1" y="5" width="1" height="1" fill="#a80000"/><rect x="2" y="5" width="1" height="1" fill="#a80000"/><rect x="6" y="5" width="1" height="1" fill="#a80000"/><rect x="0" y="6" width="1" height="1" fill="#a80000"/><rect x="1" y="6" width="1" height="1" fill="#a80000"/><rect x="2" y="6" width="1" height="1" fill="#a80000"/><rect x="3" y="6" width="1" height="1" fill="#a80000"/><rect x="4" y="6" width="1" height="1" fill="#a80000"/><rect x="5" y="6" width="1" height="1" fill="#a80000"/><rect x="6" y="6" width="1" height="1" fill="#a80000"/></svg>
<svg class="a" style="left:62px;top:58px" width="5" height="13" shape-rendering="crispEdges"><rect x="2" y="0" width="1" height="1" fill="#000"/><rect x="2" y="1" width="1" height="1" fill="#000"/><rect x="2" y="2" width="1" height="1" fill="#000"/><rect x="2" y="3" width="1" height="1" fill="#000"/><rect x="2" y="4" width="1" height="1" fill="#000"/><rect x="2" y="5" width="1" height="1" fill="#000"/><rect x="2" y="6" width="1" height="1" fill="#000"/><rect x="2" y="7" width="1" height="1" fill="#000"/><rect x="2" y="8" width="1" height="1" fill="#000"/><rect x="0" y="9" width="1" height="1" fill="#000"/><rect x="1" y="9" width="1" height="1" fill="#000"/><rect x="2" y="9" width="1" height="1" fill="#000"/><rect x="3" y="9" width="1" height="1" fill="#000"/><rect x="4" y="9" width="1" height="1" fill="#000"/><rect x="1" y="10" width="1" height="1" fill="#000"/><rect x="2" y="10" width="1" height="1" fill="#000"/><rect x="3" y="10" width="1" height="1" fill="#000"/><rect x="1" y="11" width="1" height="1" fill="#000"/><rect x="2" y="11" width="1" height="1" fill="#000"/><rect x="3" y="11" width="1" height="1" fill="#000"/><rect x="2" y="12" width="1" height="1" fill="#000"/></svg>
<svg class="a" style="left:70px;top:57px" width="7" height="7" shape-rendering="crispEdges"><rect x="0" y="0" width="1" height="1" fill="#a80000"/><rect x="1" y="0" width="1" height="1" fill="#a80000"/><rect x="2" y="0" width="1" height="1" fill="#a80000"/><rect x="3" y="0" width="1" height="1" fill="#a80000"/><rect x="4" y="0" width="1" height="1" fill="#a80000"/><rect x="5" y="0" width="1" height="1" fill="#a80000"/><rect x="6" y="0" width="1" height="1" fill="#a80000"/><rect x="0" y="1" width="1" height="1" fill="#a80000"/><rect x="5" y="1" width="1" height="1" fill="#a80000"/><rect x="6" y="1" width="1" height="1" fill="#a80000"/><rect x="4" y="2" width="1" height="1" fill="#a80000"/><rect x="5" y="2" width="1" height="1" fill="#a80000"/><rect x="3" y="3" width="1" height="1" fill="#a80000"/><rect x="4" y="3" width="1" height="1" fill="#a80000"/><rect x="2" y="4" width="1" height="1" fill="#a80000"/><rect x="3" y="4" width="1" height="1" fill="#a80000"/><rect x="1" y="5" width="1" height="1" fill="#a80000"/><rect x="2" y="5" width="1" height="1" fill="#a80000"/><rect x="6" y="5" width="1" height="1" fill="#a80000"/><rect x="0" y="6" width="1" height="1" fill="#a80000"/><rect x="1" y="6" width="1" height="1" fill="#a80000"/><rect x="2" y="6" width="1" height="1" fill="#a80000"/><rect x="3" y="6" width="1" height="1" fill="#a80000"/><rect x="4" y="6" width="1" height="1" fill="#a80000"/><rect x="5" y="6" width="1" height="1" fill="#a80000"/><rect x="6" y="6" width="1" height="1" fill="#a80000"/></svg>
<svg class="a" style="left:69px;top:65px" width="8" height="7" shape-rendering="crispEdges"><rect x="3" y="0" width="1" height="1" fill="#0000a0"/><rect x="4" y="0" width="1" height="1" fill="#0000a0"/><rect x="3" y="1" width="1" height="1" fill="#0000a0"/><rect x="4" y="1" width="1" height="1" fill="#0000a0"/><rect x="2" y="2" width="1" height="1" fill="#0000a0"/><rect x="4" y="2" width="1" height="1" fill="#0000a0"/><rect x="5" y="2" width="1" height="1" fill="#0000a0"/><rect x="2" y="3" width="1" height="1" fill="#0000a0"/><rect x="5" y="3" width="1" height="1" fill="#0000a0"/><rect x="1" y="4" width="1" height="1" fill="#0000a0"/><rect x="2" y="4" width="1" height="1" fill="#0000a0"/><rect x="3" y="4" width="1" height="1" fill="#0000a0"/><rect x="4" y="4" width="1" height="1" fill="#0000a0"/><rect x="5" y="4" width="1" height="1" fill="#0000a0"/><rect x="6" y="4" width="1" height="1" fill="#0000a0"/><rect x="1" y="5" width="1" height="1" fill="#0000a0"/><rect x="6" y="5" width="1" height="1" fill="#0000a0"/><rect x="0" y="6" width="1" height="1" fill="#0000a0"/><rect x="1" y="6" width="1" height="1" fill="#0000a0"/><rect x="2" y="6" width="1" height="1" fill="#0000a0"/><rect x="5" y="6" width="1" height="1" fill="#0000a0"/><rect x="6" y="6" width="1" height="1" fill="#0000a0"/><rect x="7" y="6" width="1" height="1" fill="#0000a0"/></svg>
<svg class="a" style="left:84px;top:65px" width="12" height="7" shape-rendering="crispEdges"><rect x="0" y="0" width="1" height="1" fill="#000"/><rect x="1" y="0" width="1" height="1" fill="#000"/><rect x="2" y="0" width="1" height="1" fill="#000"/><rect x="3" y="0" width="1" height="1" fill="#000"/><rect x="4" y="0" width="1" height="1" fill="#000"/><rect x="5" y="0" width="1" height="1" fill="#000"/><rect x="6" y="0" width="1" height="1" fill="#000"/><rect x="7" y="0" width="1" height="1" fill="#000"/><rect x="8" y="0" width="1" height="1" fill="#000"/><rect x="9" y="0" width="1" height="1" fill="#000"/><rect x="10" y="0" width="1" height="1" fill="#000"/><rect x="11" y="0" width="1" height="1" fill="#000"/><rect x="1" y="1" width="1" height="1" fill="#000"/><rect x="2" y="1" width="1" height="1" fill="#fff"/><rect x="3" y="1" width="1" height="1" fill="#fff"/><rect x="4" y="1" width="1" height="1" fill="#fff"/><rect x="5" y="1" width="1" height="1" fill="#fff"/><rect x="6" y="1" width="1" height="1" fill="#9a8c68"/><rect x="7" y="1" width="1" height="1" fill="#fff"/><rect x="8" y="1" width="1" height="1" fill="#9a8c68"/><rect x="9" y="1" width="1" height="1" fill="#fff"/><rect x="10" y="1" width="1" height="1" fill="#000"/><rect x="2" y="2" width="1" height="1" fill="#000"/><rect x="3" y="2" width="1" height="1" fill="#fff"/><rect x="4" y="2" width="1" height="1" fill="#fff"/><rect x="5" y="2" width="1" height="1" fill="#9a8c68"/><rect x="6" y="2" width="1" height="1" fill="#fff"/><rect x="7" y="2" width="1" height="1" fill="#9a8c68"/><rect x="8" y="2" width="1" height="1" fill="#fff"/><rect x="9" y="2" width="1" height="1" fill="#000"/><rect x="3" y="3" width="1" height="1" fill="#000"/><rect x="4" y="3" width="1" height="1" fill="#fff"/><rect x="5" y="3" width="1" height="1" fill="#fff"/><rect x="6" y="3" width="1" height="1" fill="#9a8c68"/><rect x="7" y="3" width="1" height="1" fill="#fff"/><rect x="8" y="3" width="1" height="1" fill="#000"/><rect x="4" y="4" width="1" height="1" fill="#000"/><rect x="5" y="4" width="1" height="1" fill="#fff"/><rect x="6" y="4" width="1" height="1" fill="#fff"/><rect x="7" y="4" width="1" height="1" fill="#000"/><rect x="4" y="5" width="1" height="1" fill="#000"/><rect x="5" y="5" width="1" height="1" fill="#fff"/><rect x="6" y="5" width="1" height="1" fill="#fff"/><rect x="7" y="5" width="1" height="1" fill="#000"/><rect x="4" y="6" width="1" height="1" fill="#000"/><rect x="5" y="6" width="1" height="1" fill="#000"/><rect x="6" y="6" width="1" height="1" fill="#000"/><rect x="7" y="6" width="1" height="1" fill="#000"/></svg>
<svg class="a" style="left:93px;top:57px" width="7" height="7" shape-rendering="crispEdges"><rect x="3" y="0" width="1" height="1" fill="#8a7e60"/><rect x="3" y="1" width="1" height="1" fill="#8a7e60"/><rect x="2" y="2" width="1" height="1" fill="#8a7e60"/><rect x="3" y="2" width="1" height="1" fill="#8a7e60"/><rect x="4" y="2" width="1" height="1" fill="#8a7e60"/><rect x="0" y="3" width="1" height="1" fill="#8a7e60"/><rect x="1" y="3" width="1" height="1" fill="#8a7e60"/><rect x="2" y="3" width="1" height="1" fill="#8a7e60"/><rect x="3" y="3" width="1" height="1" fill="#8a7e60"/><rect x="4" y="3" width="1" height="1" fill="#8a7e60"/><rect x="5" y="3" width="1" height="1" fill="#8a7e60"/><rect x="6" y="3" width="1" height="1" fill="#8a7e60"/><rect x="2" y="4" width="1" height="1" fill="#8a7e60"/><rect x="3" y="4" width="1" height="1" fill="#8a7e60"/><rect x="4" y="4" width="1" height="1" fill="#8a7e60"/><rect x="3" y="5" width="1" height="1" fill="#8a7e60"/><rect x="3" y="6" width="1" height="1" fill="#8a7e60"/></svg>
<div class="a" style="left:106px;top:53px;width:1px;height:23px;background:#bdb7b0"></div>
<div class="a" style="left:107px;top:53px;width:1px;height:23px;background:#fbf9f6"></div>
<svg class="a" style="left:117px;top:60px" width="12" height="8" shape-rendering="crispEdges"><rect x="0" y="0" width="1" height="1" fill="#000"/><rect x="1" y="0" width="1" height="1" fill="#000"/><rect x="2" y="0" width="1" height="1" fill="#000"/><rect x="3" y="0" width="1" height="1" fill="#000"/><rect x="4" y="0" width="1" height="1" fill="#000"/><rect x="5" y="0" width="1" height="1" fill="#000"/><rect x="6" y="0" width="1" height="1" fill="#000"/><rect x="7" y="0" width="1" height="1" fill="#000"/><rect x="8" y="0" width="1" height="1" fill="#000"/><rect x="9" y="0" width="1" height="1" fill="#000"/><rect x="10" y="0" width="1" height="1" fill="#000"/><rect x="11" y="0" width="1" height="1" fill="#000"/><rect x="1" y="1" width="1" height="1" fill="#000"/><rect x="2" y="1" width="1" height="1" fill="#fff"/><rect x="3" y="1" width="1" height="1" fill="#fff"/><rect x="4" y="1" width="1" height="1" fill="#fff"/><rect x="5" y="1" width="1" height="1" fill="#fff"/><rect x="6" y="1" width="1" height="1" fill="#fff"/><rect x="7" y="1" width="1" height="1" fill="#9a8c68"/><rect x="8" y="1" width="1" height="1" fill="#fff"/><rect x="9" y="1" width="1" height="1" fill="#9a8c68"/><rect x="10" y="1" width="1" height="1" fill="#000"/><rect x="2" y="2" width="1" height="1" fill="#000"/><rect x="3" y="2" width="1" height="1" fill="#fff"/><rect x="4" y="2" width="1" height="1" fill="#fff"/><rect x="5" y="2" width="1" height="1" fill="#9a8c68"/><rect x="6" y="2" width="1" height="1" fill="#fff"/><rect x="7" y="2" width="1" height="1" fill="#9a8c68"/><rect x="8" y="2" width="1" height="1" fill="#fff"/><rect x="9" y="2" width="1" height="1" fill="#000"/><rect x="3" y="3" width="1" height="1" fill="#000"/><rect x="4" y="3" width="1" height="1" fill="#fff"/><rect x="5" y="3" width="1" height="1" fill="#fff"/><rect x="6" y="3" width="1" height="1" fill="#9a8c68"/><rect x="7" y="3" width="1" height="1" fill="#fff"/><rect x="8" y="3" width="1" height="1" fill="#000"/><rect x="4" y="4" width="1" height="1" fill="#000"/><rect x="5" y="4" width="1" height="1" fill="#fff"/><rect x="6" y="4" width="1" height="1" fill="#fff"/><rect x="7" y="4" width="1" height="1" fill="#000"/><rect x="4" y="5" width="1" height="1" fill="#000"/><rect x="5" y="5" width="1" height="1" fill="#fff"/><rect x="6" y="5" width="1" height="1" fill="#fff"/><rect x="7" y="5" width="1" height="1" fill="#000"/><rect x="4" y="6" width="1" height="1" fill="#000"/><rect x="5" y="6" width="1" height="1" fill="#fff"/><rect x="6" y="6" width="1" height="1" fill="#fff"/><rect x="7" y="6" width="1" height="1" fill="#000"/><rect x="4" y="7" width="1" height="1" fill="#000"/><rect x="5" y="7" width="1" height="1" fill="#000"/><rect x="6" y="7" width="1" height="1" fill="#000"/><rect x="7" y="7" width="1" height="1" fill="#000"/></svg>
<svg class="a" style="left:143px;top:57px" width="7" height="7" shape-rendering="crispEdges"><rect x="0" y="0" width="1" height="1" fill="#000"/><rect x="1" y="0" width="1" height="1" fill="#000"/><rect x="2" y="0" width="1" height="1" fill="#000"/><rect x="3" y="0" width="1" height="1" fill="#000"/><rect x="4" y="0" width="1" height="1" fill="#000"/><rect x="5" y="0" width="1" height="1" fill="#000"/><rect x="6" y="0" width="1" height="1" fill="#000"/><rect x="0" y="1" width="1" height="1" fill="#000"/><rect x="5" y="1" width="1" height="1" fill="#000"/><rect x="6" y="1" width="1" height="1" fill="#000"/><rect x="4" y="2" width="1" height="1" fill="#000"/><rect x="5" y="2" width="1" height="1" fill="#000"/><rect x="3" y="3" width="1" height="1" fill="#000"/><rect x="4" y="3" width="1" height="1" fill="#000"/><rect x="2" y="4" width="1" height="1" fill="#000"/><rect x="3" y="4" width="1" height="1" fill="#000"/><rect x="1" y="5" width="1" height="1" fill="#000"/><rect x="2" y="5" width="1" height="1" fill="#000"/><rect x="6" y="5" width="1" height="1" fill="#000"/><rect x="0" y="6" width="1" height="1" fill="#000"/><rect x="1" y="6" width="1" height="1" fill="#000"/><rect x="2" y="6" width="1" height="1" fill="#000"/><rect x="3" y="6" width="1" height="1" fill="#000"/><rect x="4" y="6" width="1" height="1" fill="#000"/><rect x="5" y="6" width="1" height="1" fill="#000"/><rect x="6" y="6" width="1" height="1" fill="#000"/></svg>
<svg class="a" style="left:142px;top:65px" width="8" height="7" shape-rendering="crispEdges"><rect x="3" y="0" width="1" height="1" fill="#000"/><rect x="4" y="0" width="1" height="1" fill="#000"/><rect x="3" y="1" width="1" height="1" fill="#000"/><rect x="4" y="1" width="1" height="1" fill="#000"/><rect x="2" y="2" width="1" height="1" fill="#000"/><rect x="4" y="2" width="1" height="1" fill="#000"/><rect x="5" y="2" width="1" height="1" fill="#000"/><rect x="2" y="3" width="1" height="1" fill="#000"/><rect x="5" y="3" width="1" height="1" fill="#000"/><rect x="1" y="4" width="1" height="1" fill="#000"/><rect x="2" y="4" width="1" height="1" fill="#000"/><rect x="3" y="4" width="1" height="1" fill="#000"/><rect x="4" y="4" width="1" height="1" fill="#000"/><rect x="5" y="4" width="1" height="1" fill="#000"/><rect x="6" y="4" width="1" height="1" fill="#000"/><rect x="1" y="5" width="1" height="1" fill="#000"/><rect x="6" y="5" width="1" height="1" fill="#000"/><rect x="0" y="6" width="1" height="1" fill="#000"/><rect x="1" y="6" width="1" height="1" fill="#000"/><rect x="2" y="6" width="1" height="1" fill="#000"/><rect x="5" y="6" width="1" height="1" fill="#000"/><rect x="6" y="6" width="1" height="1" fill="#000"/><rect x="7" y="6" width="1" height="1" fill="#000"/></svg>
<svg class="a" style="left:161px;top:65px" width="12" height="7" shape-rendering="crispEdges"><rect x="0" y="0" width="1" height="1" fill="#a39e99"/><rect x="1" y="0" width="1" height="1" fill="#a39e99"/><rect x="2" y="0" width="1" height="1" fill="#a39e99"/><rect x="3" y="0" width="1" height="1" fill="#a39e99"/><rect x="4" y="0" width="1" height="1" fill="#a39e99"/><rect x="5" y="0" width="1" height="1" fill="#a39e99"/><rect x="6" y="0" width="1" height="1" fill="#a39e99"/><rect x="7" y="0" width="1" height="1" fill="#a39e99"/><rect x="8" y="0" width="1" height="1" fill="#a39e99"/><rect x="9" y="0" width="1" height="1" fill="#a39e99"/><rect x="10" y="0" width="1" height="1" fill="#a39e99"/><rect x="11" y="0" width="1" height="1" fill="#a39e99"/><rect x="1" y="1" width="1" height="1" fill="#a39e99"/><rect x="2" y="1" width="1" height="1" fill="#f6f2ee"/><rect x="3" y="1" width="1" height="1" fill="#f6f2ee"/><rect x="4" y="1" width="1" height="1" fill="#f6f2ee"/><rect x="5" y="1" width="1" height="1" fill="#f6f2ee"/><rect x="6" y="1" width="1" height="1" fill="#c8c2bc"/><rect x="7" y="1" width="1" height="1" fill="#f6f2ee"/><rect x="8" y="1" width="1" height="1" fill="#c8c2bc"/><rect x="9" y="1" width="1" height="1" fill="#f6f2ee"/><rect x="10" y="1" width="1" height="1" fill="#a39e99"/><rect x="2" y="2" width="1" height="1" fill="#a39e99"/><rect x="3" y="2" width="1" height="1" fill="#f6f2ee"/><rect x="4" y="2" width="1" height="1" fill="#f6f2ee"/><rect x="5" y="2" width="1" height="1" fill="#c8c2bc"/><rect x="6" y="2" width="1" height="1" fill="#f6f2ee"/><rect x="7" y="2" width="1" height="1" fill="#c8c2bc"/><rect x="8" y="2" width="1" height="1" fill="#f6f2ee"/><rect x="9" y="2" width="1" height="1" fill="#a39e99"/><rect x="3" y="3" width="1" height="1" fill="#a39e99"/><rect x="4" y="3" width="1" height="1" fill="#f6f2ee"/><rect x="5" y="3" width="1" height="1" fill="#f6f2ee"/><rect x="6" y="3" width="1" height="1" fill="#c8c2bc"/><rect x="7" y="3" width="1" height="1" fill="#f6f2ee"/><rect x="8" y="3" width="1" height="1" fill="#a39e99"/><rect x="4" y="4" width="1" height="1" fill="#a39e99"/><rect x="5" y="4" width="1" height="1" fill="#f6f2ee"/><rect x="6" y="4" width="1" height="1" fill="#f6f2ee"/><rect x="7" y="4" width="1" height="1" fill="#a39e99"/><rect x="4" y="5" width="1" height="1" fill="#a39e99"/><rect x="5" y="5" width="1" height="1" fill="#f6f2ee"/><rect x="6" y="5" width="1" height="1" fill="#f6f2ee"/><rect x="7" y="5" width="1" height="1" fill="#a39e99"/><rect x="4" y="6" width="1" height="1" fill="#a39e99"/><rect x="5" y="6" width="1" height="1" fill="#a39e99"/><rect x="6" y="6" width="1" height="1" fill="#a39e99"/><rect x="7" y="6" width="1" height="1" fill="#a39e99"/></svg>
<svg class="a" style="left:168px;top:57px" width="8" height="8" shape-rendering="crispEdges"><rect x="0" y="0" width="1" height="1" fill="#a39e99"/><rect x="1" y="0" width="1" height="1" fill="#a39e99"/><rect x="6" y="0" width="1" height="1" fill="#a39e99"/><rect x="7" y="0" width="1" height="1" fill="#a39e99"/><rect x="0" y="1" width="1" height="1" fill="#a39e99"/><rect x="1" y="1" width="1" height="1" fill="#a39e99"/><rect x="2" y="1" width="1" height="1" fill="#a39e99"/><rect x="5" y="1" width="1" height="1" fill="#a39e99"/><rect x="6" y="1" width="1" height="1" fill="#a39e99"/><rect x="7" y="1" width="1" height="1" fill="#a39e99"/><rect x="1" y="2" width="1" height="1" fill="#a39e99"/><rect x="2" y="2" width="1" height="1" fill="#a39e99"/><rect x="3" y="2" width="1" height="1" fill="#a39e99"/><rect x="4" y="2" width="1" height="1" fill="#a39e99"/><rect x="5" y="2" width="1" height="1" fill="#a39e99"/><rect x="6" y="2" width="1" height="1" fill="#a39e99"/><rect x="2" y="3" width="1" height="1" fill="#a39e99"/><rect x="3" y="3" width="1" height="1" fill="#a39e99"/><rect x="4" y="3" width="1" height="1" fill="#a39e99"/><rect x="5" y="3" width="1" height="1" fill="#a39e99"/><rect x="2" y="4" width="1" height="1" fill="#a39e99"/><rect x="3" y="4" width="1" height="1" fill="#a39e99"/><rect x="4" y="4" width="1" height="1" fill="#a39e99"/><rect x="5" y="4" width="1" height="1" fill="#a39e99"/><rect x="1" y="5" width="1" height="1" fill="#a39e99"/><rect x="2" y="5" width="1" height="1" fill="#a39e99"/><rect x="3" y="5" width="1" height="1" fill="#a39e99"/><rect x="4" y="5" width="1" height="1" fill="#a39e99"/><rect x="5" y="5" width="1" height="1" fill="#a39e99"/><rect x="6" y="5" width="1" height="1" fill="#a39e99"/><rect x="0" y="6" width="1" height="1" fill="#a39e99"/><rect x="1" y="6" width="1" height="1" fill="#a39e99"/><rect x="2" y="6" width="1" height="1" fill="#a39e99"/><rect x="5" y="6" width="1" height="1" fill="#a39e99"/><rect x="6" y="6" width="1" height="1" fill="#a39e99"/><rect x="7" y="6" width="1" height="1" fill="#a39e99"/><rect x="0" y="7" width="1" height="1" fill="#a39e99"/><rect x="1" y="7" width="1" height="1" fill="#a39e99"/><rect x="6" y="7" width="1" height="1" fill="#a39e99"/><rect x="7" y="7" width="1" height="1" fill="#a39e99"/></svg>
<svg class="a" style="left:185px;top:65px" width="12" height="7" shape-rendering="crispEdges"><rect x="0" y="0" width="1" height="1" fill="#a39e99"/><rect x="1" y="0" width="1" height="1" fill="#a39e99"/><rect x="2" y="0" width="1" height="1" fill="#a39e99"/><rect x="3" y="0" width="1" height="1" fill="#a39e99"/><rect x="4" y="0" width="1" height="1" fill="#a39e99"/><rect x="5" y="0" width="1" height="1" fill="#a39e99"/><rect x="6" y="0" width="1" height="1" fill="#a39e99"/><rect x="7" y="0" width="1" height="1" fill="#a39e99"/><rect x="8" y="0" width="1" height="1" fill="#a39e99"/><rect x="9" y="0" width="1" height="1" fill="#a39e99"/><rect x="10" y="0" width="1" height="1" fill="#a39e99"/><rect x="11" y="0" width="1" height="1" fill="#a39e99"/><rect x="1" y="1" width="1" height="1" fill="#a39e99"/><rect x="2" y="1" width="1" height="1" fill="#f6f2ee"/><rect x="3" y="1" width="1" height="1" fill="#f6f2ee"/><rect x="4" y="1" width="1" height="1" fill="#f6f2ee"/><rect x="5" y="1" width="1" height="1" fill="#f6f2ee"/><rect x="6" y="1" width="1" height="1" fill="#c8c2bc"/><rect x="7" y="1" width="1" height="1" fill="#f6f2ee"/><rect x="8" y="1" width="1" height="1" fill="#c8c2bc"/><rect x="9" y="1" width="1" height="1" fill="#f6f2ee"/><rect x="10" y="1" width="1" height="1" fill="#a39e99"/><rect x="2" y="2" width="1" height="1" fill="#a39e99"/><rect x="3" y="2" width="1" height="1" fill="#f6f2ee"/><rect x="4" y="2" width="1" height="1" fill="#f6f2ee"/><rect x="5" y="2" width="1" height="1" fill="#c8c2bc"/><rect x="6" y="2" width="1" height="1" fill="#f6f2ee"/><rect x="7" y="2" width="1" height="1" fill="#c8c2bc"/><rect x="8" y="2" width="1" height="1" fill="#f6f2ee"/><rect x="9" y="2" width="1" height="1" fill="#a39e99"/><rect x="3" y="3" width="1" height="1" fill="#a39e99"/><rect x="4" y="3" width="1" height="1" fill="#f6f2ee"/><rect x="5" y="3" width="1" height="1" fill="#f6f2ee"/><rect x="6" y="3" width="1" height="1" fill="#c8c2bc"/><rect x="7" y="3" width="1" height="1" fill="#f6f2ee"/><rect x="8" y="3" width="1" height="1" fill="#a39e99"/><rect x="4" y="4" width="1" height="1" fill="#a39e99"/><rect x="5" y="4" width="1" height="1" fill="#f6f2ee"/><rect x="6" y="4" width="1" height="1" fill="#f6f2ee"/><rect x="7" y="4" width="1" height="1" fill="#a39e99"/><rect x="4" y="5" width="1" height="1" fill="#a39e99"/><rect x="5" y="5" width="1" height="1" fill="#f6f2ee"/><rect x="6" y="5" width="1" height="1" fill="#f6f2ee"/><rect x="7" y="5" width="1" height="1" fill="#a39e99"/><rect x="4" y="6" width="1" height="1" fill="#a39e99"/><rect x="5" y="6" width="1" height="1" fill="#a39e99"/><rect x="6" y="6" width="1" height="1" fill="#a39e99"/><rect x="7" y="6" width="1" height="1" fill="#a39e99"/></svg>
<svg class="a" style="left:189px;top:57px" width="11" height="7" shape-rendering="crispEdges"><rect x="9" y="0" width="1" height="1" fill="#a39e99"/><rect x="10" y="0" width="1" height="1" fill="#a39e99"/><rect x="8" y="1" width="1" height="1" fill="#a39e99"/><rect x="9" y="1" width="1" height="1" fill="#a39e99"/><rect x="10" y="1" width="1" height="1" fill="#a39e99"/><rect x="7" y="2" width="1" height="1" fill="#a39e99"/><rect x="8" y="2" width="1" height="1" fill="#a39e99"/><rect x="9" y="2" width="1" height="1" fill="#a39e99"/><rect x="0" y="3" width="1" height="1" fill="#a39e99"/><rect x="1" y="3" width="1" height="1" fill="#a39e99"/><rect x="6" y="3" width="1" height="1" fill="#a39e99"/><rect x="7" y="3" width="1" height="1" fill="#a39e99"/><rect x="8" y="3" width="1" height="1" fill="#a39e99"/><rect x="0" y="4" width="1" height="1" fill="#a39e99"/><rect x="1" y="4" width="1" height="1" fill="#a39e99"/><rect x="2" y="4" width="1" height="1" fill="#a39e99"/><rect x="5" y="4" width="1" height="1" fill="#a39e99"/><rect x="6" y="4" width="1" height="1" fill="#a39e99"/><rect x="7" y="4" width="1" height="1" fill="#a39e99"/><rect x="1" y="5" width="1" height="1" fill="#a39e99"/><rect x="2" y="5" width="1" height="1" fill="#a39e99"/><rect x="3" y="5" width="1" height="1" fill="#a39e99"/><rect x="4" y="5" width="1" height="1" fill="#a39e99"/><rect x="5" y="5" width="1" height="1" fill="#a39e99"/><rect x="6" y="5" width="1" height="1" fill="#a39e99"/><rect x="2" y="6" width="1" height="1" fill="#a39e99"/><rect x="3" y="6" width="1" height="1" fill="#a39e99"/><rect x="4" y="6" width="1" height="1" fill="#a39e99"/><rect x="5" y="6" width="1" height="1" fill="#a39e99"/></svg>
<div class="a" style="left:206px;top:53px;width:1px;height:23px;background:#bdb7b0"></div>
<div class="a" style="left:207px;top:53px;width:1px;height:23px;background:#fbf9f6"></div>
<svg class="a" style="left:215px;top:58px" width="8" height="11" shape-rendering="crispEdges"><rect x="1" y="0" width="1" height="1" fill="#000"/><rect x="2" y="0" width="1" height="1" fill="#000"/><rect x="3" y="0" width="1" height="1" fill="#000"/><rect x="4" y="0" width="1" height="1" fill="#000"/><rect x="5" y="0" width="1" height="1" fill="#000"/><rect x="6" y="0" width="1" height="1" fill="#000"/><rect x="0" y="1" width="1" height="1" fill="#000"/><rect x="1" y="1" width="1" height="1" fill="#fff"/><rect x="2" y="1" width="1" height="1" fill="#fff"/><rect x="3" y="1" width="1" height="1" fill="#fff"/><rect x="4" y="1" width="1" height="1" fill="#fff"/><rect x="5" y="1" width="1" height="1" fill="#fff"/><rect x="6" y="1" width="1" height="1" fill="#fff"/><rect x="7" y="1" width="1" height="1" fill="#000"/><rect x="0" y="2" width="1" height="1" fill="#000"/><rect x="1" y="2" width="1" height="1" fill="#fff"/><rect x="2" y="2" width="1" height="1" fill="#fff"/><rect x="3" y="2" width="1" height="1" fill="#fff"/><rect x="4" y="2" width="1" height="1" fill="#fff"/><rect x="5" y="2" width="1" height="1" fill="#fff"/><rect x="6" y="2" width="1" height="1" fill="#fff"/><rect x="7" y="2" width="1" height="1" fill="#000"/><rect x="0" y="3" width="1" height="1" fill="#000"/><rect x="1" y="3" width="1" height="1" fill="#fff"/><rect x="2" y="3" width="1" height="1" fill="#000"/><rect x="3" y="3" width="1" height="1" fill="#000"/><rect x="4" y="3" width="1" height="1" fill="#000"/><rect x="5" y="3" width="1" height="1" fill="#000"/><rect x="6" y="3" width="1" height="1" fill="#fff"/><rect x="7" y="3" width="1" height="1" fill="#000"/><rect x="0" y="4" width="1" height="1" fill="#000"/><rect x="1" y="4" width="1" height="1" fill="#fff"/><rect x="2" y="4" width="1" height="1" fill="#fff"/><rect x="3" y="4" width="1" height="1" fill="#fff"/><rect x="4" y="4" width="1" height="1" fill="#fff"/><rect x="5" y="4" width="1" height="1" fill="#fff"/><rect x="6" y="4" width="1" height="1" fill="#fff"/><rect x="7" y="4" width="1" height="1" fill="#000"/><rect x="0" y="5" width="1" height="1" fill="#000"/><rect x="1" y="5" width="1" height="1" fill="#fff"/><rect x="2" y="5" width="1" height="1" fill="#fff"/><rect x="3" y="5" width="1" height="1" fill="#fff"/><rect x="4" y="5" width="1" height="1" fill="#fff"/><rect x="5" y="5" width="1" height="1" fill="#fff"/><rect x="6" y="5" width="1" height="1" fill="#fff"/><rect x="7" y="5" width="1" height="1" fill="#000"/><rect x="0" y="6" width="1" height="1" fill="#000"/><rect x="1" y="6" width="1" height="1" fill="#fff"/><rect x="2" y="6" width="1" height="1" fill="#000"/><rect x="3" y="6" width="1" height="1" fill="#000"/><rect x="4" y="6" width="1" height="1" fill="#000"/><rect x="5" y="6" width="1" height="1" fill="#000"/><rect x="6" y="6" width="1" height="1" fill="#fff"/><rect x="7" y="6" width="1" height="1" fill="#000"/><rect x="0" y="7" width="1" height="1" fill="#000"/><rect x="1" y="7" width="1" height="1" fill="#fff"/><rect x="2" y="7" width="1" height="1" fill="#fff"/><rect x="3" y="7" width="1" height="1" fill="#fff"/><rect x="4" y="7" width="1" height="1" fill="#fff"/><rect x="5" y="7" width="1" height="1" fill="#fff"/><rect x="6" y="7" width="1" height="1" fill="#fff"/><rect x="7" y="7" width="1" height="1" fill="#000"/><rect x="0" y="8" width="1" height="1" fill="#000"/><rect x="1" y="8" width="1" height="1" fill="#fff"/><rect x="2" y="8" width="1" height="1" fill="#fff"/><rect x="3" y="8" width="1" height="1" fill="#fff"/><rect x="4" y="8" width="1" height="1" fill="#fff"/><rect x="5" y="8" width="1" height="1" fill="#fff"/><rect x="6" y="8" width="1" height="1" fill="#fff"/><rect x="7" y="8" width="1" height="1" fill="#000"/><rect x="0" y="9" width="1" height="1" fill="#000"/><rect x="1" y="9" width="1" height="1" fill="#fff"/><rect x="2" y="9" width="1" height="1" fill="#fff"/><rect x="3" y="9" width="1" height="1" fill="#fff"/><rect x="4" y="9" width="1" height="1" fill="#fff"/><rect x="5" y="9" width="1" height="1" fill="#fff"/><rect x="6" y="9" width="1" height="1" fill="#fff"/><rect x="7" y="9" width="1" height="1" fill="#000"/><rect x="1" y="10" width="1" height="1" fill="#000"/><rect x="2" y="10" width="1" height="1" fill="#000"/><rect x="3" y="10" width="1" height="1" fill="#000"/><rect x="4" y="10" width="1" height="1" fill="#000"/><rect x="5" y="10" width="1" height="1" fill="#000"/><rect x="6" y="10" width="1" height="1" fill="#000"/></svg>
<svg class="a" style="left:224px;top:62px" width="7" height="9" shape-rendering="crispEdges"><rect x="0" y="0" width="1" height="1" fill="#000090"/><rect x="1" y="0" width="1" height="1" fill="#000090"/><rect x="2" y="0" width="1" height="1" fill="#000090"/><rect x="3" y="0" width="1" height="1" fill="#000090"/><rect x="4" y="0" width="1" height="1" fill="#000090"/><rect x="0" y="1" width="1" height="1" fill="#000090"/><rect x="1" y="1" width="1" height="1" fill="#000090"/><rect x="2" y="1" width="1" height="1" fill="#000090"/><rect x="3" y="1" width="1" height="1" fill="#000090"/><rect x="4" y="1" width="1" height="1" fill="#000090"/><rect x="5" y="1" width="1" height="1" fill="#000090"/><rect x="4" y="2" width="1" height="1" fill="#000090"/><rect x="5" y="2" width="1" height="1" fill="#000090"/><rect x="6" y="2" width="1" height="1" fill="#000090"/><rect x="1" y="3" width="1" height="1" fill="#000090"/><rect x="4" y="3" width="1" height="1" fill="#000090"/><rect x="5" y="3" width="1" height="1" fill="#000090"/><rect x="6" y="3" width="1" height="1" fill="#000090"/><rect x="0" y="4" width="1" height="1" fill="#000090"/><rect x="1" y="4" width="1" height="1" fill="#000090"/><rect x="3" y="4" width="1" height="1" fill="#000090"/><rect x="4" y="4" width="1" height="1" fill="#000090"/><rect x="5" y="4" width="1" height="1" fill="#000090"/><rect x="0" y="5" width="1" height="1" fill="#000090"/><rect x="1" y="5" width="1" height="1" fill="#000090"/><rect x="2" y="5" width="1" height="1" fill="#000090"/><rect x="3" y="5" width="1" height="1" fill="#000090"/><rect x="4" y="5" width="1" height="1" fill="#000090"/><rect x="0" y="6" width="1" height="1" fill="#000090"/><rect x="1" y="6" width="1" height="1" fill="#000090"/><rect x="2" y="6" width="1" height="1" fill="#000090"/><rect x="3" y="6" width="1" height="1" fill="#000090"/><rect x="1" y="7" width="1" height="1" fill="#000090"/><rect x="2" y="7" width="1" height="1" fill="#000090"/><rect x="2" y="8" width="1" height="1" fill="#000090"/></svg>
<svg class="a" style="left:225px;top:56px" width="8" height="4" shape-rendering="crispEdges"><rect x="0" y="0" width="1" height="1" fill="#000"/><rect x="1" y="0" width="1" height="1" fill="#000"/><rect x="2" y="0" width="1" height="1" fill="#000"/><rect x="3" y="0" width="1" height="1" fill="#000"/><rect x="4" y="0" width="1" height="1" fill="#000"/><rect x="5" y="0" width="1" height="1" fill="#000"/><rect x="6" y="0" width="1" height="1" fill="#000"/><rect x="7" y="0" width="1" height="1" fill="#000"/><rect x="1" y="1" width="1" height="1" fill="#000"/><rect x="2" y="1" width="1" height="1" fill="#00e000"/><rect x="3" y="1" width="1" height="1" fill="#00e000"/><rect x="4" y="1" width="1" height="1" fill="#00e000"/><rect x="5" y="1" width="1" height="1" fill="#00e000"/><rect x="6" y="1" width="1" height="1" fill="#000"/><rect x="2" y="2" width="1" height="1" fill="#000"/><rect x="3" y="2" width="1" height="1" fill="#00e000"/><rect x="4" y="2" width="1" height="1" fill="#00e000"/><rect x="5" y="2" width="1" height="1" fill="#000"/><rect x="3" y="3" width="1" height="1" fill="#000"/><rect x="4" y="3" width="1" height="1" fill="#000"/></svg>
<div class="a" style="left:237px;top:53px;width:1px;height:23px;background:#bdb7b0"></div>
<div class="a" style="left:238px;top:53px;width:1px;height:23px;background:#fbf9f6"></div>
<svg class="a" style="left:246px;top:58px" width="17" height="13" shape-rendering="crispEdges"><rect x="0" y="0" width="10" height="13" fill="#a39e99"/><rect x="1" y="1" width="8" height="11" fill="#f4f0eb"/><rect x="2" y="3" width="6" height="1" fill="#a39e99"/><rect x="2" y="5" width="2" height="1" fill="#a39e99"/><rect x="5" y="5" width="3" height="3" fill="#a39e99"/><rect x="2" y="9" width="6" height="1" fill="#a39e99"/><path d="M8 10 L15 3" stroke="#a39e99" stroke-width="2.5"/></svg>
<svg class="a" style="left:269px;top:58px" width="16" height="13" shape-rendering="crispEdges"><path d="M2 0 H15 V13 H3 V10 L1 11 V2 L3 3 V0Z" fill="#a39e99"/><rect x="5" y="1" width="8" height="5" fill="url(#chk)"/><defs><pattern id="chk" width="2" height="2" patternUnits="userSpaceOnUse"><rect width="1" height="1" fill="#e8e3de"/><rect x="1" y="1" width="1" height="1" fill="#e8e3de"/></pattern></defs></svg>
<svg class="a" style="left:291px;top:60px" width="16" height="10"><path d="M0 0 L5 4.5 L0 9Z" fill="#a39e99"/><path d="M6 6 H12 Q14 6 14 4 Q14 2 12 2 H9" stroke="#a39e99" stroke-width="1.5" fill="none"/><path d="M8 3.5 L6 6 L8 8.5" stroke="#a39e99" stroke-width="1.2" fill="none"/></svg>
<div class="a" style="left:314px;top:53px;width:1px;height:23px;background:#bdb7b0"></div>
<div class="a" style="left:315px;top:53px;width:1px;height:23px;background:#fbf9f6"></div>
<svg class="a" style="left:324px;top:58px" width="15" height="13" shape-rendering="crispEdges"><rect x="7" y="0" width="1" height="1" fill="#000"/><rect x="9" y="0" width="1" height="1" fill="#000"/><rect x="10" y="0" width="1" height="1" fill="#000"/><rect x="11" y="0" width="1" height="1" fill="#000"/><rect x="7" y="1" width="1" height="1" fill="#000"/><rect x="8" y="1" width="1" height="1" fill="#000"/><rect x="12" y="1" width="1" height="1" fill="#000"/><rect x="7" y="2" width="1" height="1" fill="#000"/><rect x="8" y="2" width="1" height="1" fill="#000"/><rect x="9" y="2" width="1" height="1" fill="#000"/><rect x="13" y="2" width="1" height="1" fill="#000"/><rect x="2" y="3" width="1" height="1" fill="#000"/><rect x="3" y="3" width="1" height="1" fill="#000"/><rect x="4" y="3" width="1" height="1" fill="#000"/><rect x="5" y="3" width="1" height="1" fill="#000"/><rect x="13" y="3" width="1" height="1" fill="#000"/><rect x="1" y="4" width="1" height="1" fill="#000"/><rect x="2" y="4" width="1" height="1" fill="#fff"/><rect x="3" y="4" width="1" height="1" fill="#fff"/><rect x="4" y="4" width="1" height="1" fill="#fff"/><rect x="5" y="4" width="1" height="1" fill="#fff"/><rect x="6" y="4" width="1" height="1" fill="#000"/><rect x="7" y="4" width="1" height="1" fill="#000"/><rect x="8" y="4" width="1" height="1" fill="#000"/><rect x="9" y="4" width="1" height="1" fill="#000"/><rect x="10" y="4" width="1" height="1" fill="#000"/><rect x="11" y="4" width="1" height="1" fill="#000"/><rect x="12" y="4" width="1" height="1" fill="#000"/><rect x="0" y="5" width="1" height="1" fill="#9c916f"/><rect x="1" y="5" width="1" height="1" fill="#000"/><rect x="2" y="5" width="1" height="1" fill="#fff"/><rect x="3" y="5" width="1" height="1" fill="#fff"/><rect x="4" y="5" width="1" height="1" fill="#fff"/><rect x="5" y="5" width="1" height="1" fill="#fff"/><rect x="6" y="5" width="1" height="1" fill="#dcd8e4"/><rect x="7" y="5" width="1" height="1" fill="#dcd8e4"/><rect x="8" y="5" width="1" height="1" fill="#dcd8e4"/><rect x="9" y="5" width="1" height="1" fill="#dcd8e4"/><rect x="10" y="5" width="1" height="1" fill="#dcd8e4"/><rect x="11" y="5" width="1" height="1" fill="#dcd8e4"/><rect x="12" y="5" width="1" height="1" fill="#000"/><rect x="0" y="6" width="1" height="1" fill="#9c916f"/><rect x="1" y="6" width="1" height="1" fill="#000"/><rect x="2" y="6" width="1" height="1" fill="#fff"/><rect x="3" y="6" width="1" height="1" fill="#8f8262"/><rect x="4" y="6" width="1" height="1" fill="#8f8262"/><rect x="5" y="6" width="1" height="1" fill="#8f8262"/><rect x="6" y="6" width="1" height="1" fill="#8f8262"/><rect x="7" y="6" width="1" height="1" fill="#8f8262"/><rect x="8" y="6" width="1" height="1" fill="#8f8262"/><rect x="9" y="6" width="1" height="1" fill="#8f8262"/><rect x="10" y="6" width="1" height="1" fill="#8f8262"/><rect x="11" y="6" width="1" height="1" fill="#8f8262"/><rect x="12" y="6" width="1" height="1" fill="#000"/><rect x="0" y="7" width="1" height="1" fill="#9c916f"/><rect x="1" y="7" width="1" height="1" fill="#000"/><rect x="2" y="7" width="1" height="1" fill="#fff"/><rect x="3" y="7" width="1" height="1" fill="#8f8262"/><rect x="4" y="7" width="1" height="1" fill="#8f8262"/><rect x="5" y="7" width="1" height="1" fill="#8f8262"/><rect x="6" y="7" width="1" height="1" fill="#8f8262"/><rect x="7" y="7" width="1" height="1" fill="#8f8262"/><rect x="8" y="7" width="1" height="1" fill="#8f8262"/><rect x="9" y="7" width="1" height="1" fill="#8f8262"/><rect x="10" y="7" width="1" height="1" fill="#8f8262"/><rect x="11" y="7" width="1" height="1" fill="#8f8262"/><rect x="12" y="7" width="1" height="1" fill="#000"/><rect x="0" y="8" width="1" height="1" fill="#9c916f"/><rect x="1" y="8" width="1" height="1" fill="#000"/><rect x="2" y="8" width="1" height="1" fill="#fff"/><rect x="3" y="8" width="1" height="1" fill="#8f8262"/><rect x="4" y="8" width="1" height="1" fill="#000"/><rect x="5" y="8" width="1" height="1" fill="#000"/><rect x="6" y="8" width="1" height="1" fill="#000"/><rect x="7" y="8" width="1" height="1" fill="#8f8262"/><rect x="8" y="8" width="1" height="1" fill="#8f8262"/><rect x="9" y="8" width="1" height="1" fill="#8f8262"/><rect x="10" y="8" width="1" height="1" fill="#8f8262"/><rect x="11" y="8" width="1" height="1" fill="#8f8262"/><rect x="12" y="8" width="1" height="1" fill="#000"/><rect x="0" y="9" width="1" height="1" fill="#9c916f"/><rect x="1" y="9" width="1" height="1" fill="#000"/><rect x="2" y="9" width="1" height="1" fill="#fff"/><rect x="3" y="9" width="1" height="1" fill="#8f8262"/><rect x="4" y="9" width="1" height="1" fill="#8f8262"/><rect x="5" y="9" width="1" height="1" fill="#8f8262"/><rect x="6" y="9" width="1" height="1" fill="#8f8262"/><rect x="7" y="9" width="1" height="1" fill="#8f8262"/><rect x="8" y="9" width="1" height="1" fill="#8f8262"/><rect x="9" y="9" width="1" height="1" fill="#8f8262"/><rect x="10" y="9" width="1" height="1" fill="#8f8262"/><rect x="11" y="9" width="1" height="1" fill="#8f8262"/><rect x="12" y="9" width="1" height="1" fill="#000"/><rect x="0" y="10" width="1" height="1" fill="#9c916f"/><rect x="1" y="10" width="1" height="1" fill="#000"/><rect x="2" y="10" width="1" height="1" fill="#fff"/><rect x="3" y="10" width="1" height="1" fill="#8f8262"/><rect x="4" y="10" width="1" height="1" fill="#8f8262"/><rect x="5" y="10" width="1" height="1" fill="#8f8262"/><rect x="6" y="10" width="1" height="1" fill="#8f8262"/><rect x="7" y="10" width="1" height="1" fill="#8f8262"/><rect x="8" y="10" width="1" height="1" fill="#8f8262"/><rect x="9" y="10" width="1" height="1" fill="#8f8262"/><rect x="10" y="10" width="1" height="1" fill="#8f8262"/><rect x="11" y="10" width="1" height="1" fill="#8f8262"/><rect x="12" y="10" width="1" height="1" fill="#000"/><rect x="0" y="11" width="1" height="1" fill="#9c916f"/><rect x="1" y="11" width="1" height="1" fill="#000"/><rect x="2" y="11" width="1" height="1" fill="#000"/><rect x="3" y="11" width="1" height="1" fill="#000"/><rect x="4" y="11" width="1" height="1" fill="#000"/><rect x="5" y="11" width="1" height="1" fill="#000"/><rect x="6" y="11" width="1" height="1" fill="#000"/><rect x="7" y="11" width="1" height="1" fill="#000"/><rect x="8" y="11" width="1" height="1" fill="#000"/><rect x="9" y="11" width="1" height="1" fill="#000"/><rect x="10" y="11" width="1" height="1" fill="#000"/><rect x="11" y="11" width="1" height="1" fill="#000"/><rect x="12" y="11" width="1" height="1" fill="#000"/><rect x="0" y="12" width="1" height="1" fill="#9c916f"/><rect x="1" y="12" width="1" height="1" fill="#9c916f"/><rect x="2" y="12" width="1" height="1" fill="#9c916f"/><rect x="3" y="12" width="1" height="1" fill="#9c916f"/><rect x="4" y="12" width="1" height="1" fill="#9c916f"/><rect x="5" y="12" width="1" height="1" fill="#9c916f"/><rect x="6" y="12" width="1" height="1" fill="#9c916f"/><rect x="7" y="12" width="1" height="1" fill="#9c916f"/></svg>
<svg class="a" style="left:8px;top:187px" width="8" height="13" shape-rendering="crispEdges"><rect x="2" y="0" width="1" height="1" fill="#000"/><rect x="3" y="0" width="1" height="1" fill="#000"/><rect x="4" y="0" width="1" height="1" fill="#000"/><rect x="5" y="0" width="1" height="1" fill="#000"/><rect x="1" y="1" width="1" height="1" fill="#000"/><rect x="2" y="1" width="1" height="1" fill="#fff"/><rect x="3" y="1" width="1" height="1" fill="#fff"/><rect x="4" y="1" width="1" height="1" fill="#fff"/><rect x="5" y="1" width="1" height="1" fill="#fff"/><rect x="6" y="1" width="1" height="1" fill="#000"/><rect x="0" y="2" width="1" height="1" fill="#000"/><rect x="1" y="2" width="1" height="1" fill="#fff"/><rect x="2" y="2" width="1" height="1" fill="#fff"/><rect x="3" y="2" width="1" height="1" fill="#fff"/><rect x="4" y="2" width="1" height="1" fill="#fff"/><rect x="5" y="2" width="1" height="1" fill="#fff"/><rect x="6" y="2" width="1" height="1" fill="#fff"/><rect x="7" y="2" width="1" height="1" fill="#000"/><rect x="0" y="3" width="1" height="1" fill="#000"/><rect x="1" y="3" width="1" height="1" fill="#fff"/><rect x="2" y="3" width="1" height="1" fill="#fff"/><rect x="3" y="3" width="1" height="1" fill="#000"/><rect x="4" y="3" width="1" height="1" fill="#000"/><rect x="5" y="3" width="1" height="1" fill="#fff"/><rect x="6" y="3" width="1" height="1" fill="#fff"/><rect x="7" y="3" width="1" height="1" fill="#000"/><rect x="0" y="4" width="1" height="1" fill="#000"/><rect x="1" y="4" width="1" height="1" fill="#fff"/><rect x="2" y="4" width="1" height="1" fill="#fff"/><rect x="3" y="4" width="1" height="1" fill="#fff"/><rect x="4" y="4" width="1" height="1" fill="#fff"/><rect x="5" y="4" width="1" height="1" fill="#fff"/><rect x="6" y="4" width="1" height="1" fill="#fff"/><rect x="7" y="4" width="1" height="1" fill="#000"/><rect x="0" y="5" width="1" height="1" fill="#000"/><rect x="1" y="5" width="1" height="1" fill="#000"/><rect x="2" y="5" width="1" height="1" fill="#fff"/><rect x="3" y="5" width="1" height="1" fill="#fff"/><rect x="4" y="5" width="1" height="1" fill="#fff"/><rect x="5" y="5" width="1" height="1" fill="#fff"/><rect x="6" y="5" width="1" height="1" fill="#000"/><rect x="7" y="5" width="1" height="1" fill="#000"/><rect x="0" y="6" width="1" height="1" fill="#000"/><rect x="1" y="6" width="1" height="1" fill="#fff"/><rect x="2" y="6" width="1" height="1" fill="#000"/><rect x="3" y="6" width="1" height="1" fill="#000"/><rect x="4" y="6" width="1" height="1" fill="#000"/><rect x="5" y="6" width="1" height="1" fill="#000"/><rect x="6" y="6" width="1" height="1" fill="#fff"/><rect x="7" y="6" width="1" height="1" fill="#000"/><rect x="0" y="7" width="1" height="1" fill="#000"/><rect x="1" y="7" width="1" height="1" fill="#000"/><rect x="2" y="7" width="1" height="1" fill="#fff"/><rect x="3" y="7" width="1" height="1" fill="#fff"/><rect x="4" y="7" width="1" height="1" fill="#fff"/><rect x="5" y="7" width="1" height="1" fill="#fff"/><rect x="6" y="7" width="1" height="1" fill="#000"/><rect x="7" y="7" width="1" height="1" fill="#000"/><rect x="0" y="8" width="1" height="1" fill="#000"/><rect x="1" y="8" width="1" height="1" fill="#fff"/><rect x="2" y="8" width="1" height="1" fill="#000"/><rect x="3" y="8" width="1" height="1" fill="#000"/><rect x="4" y="8" width="1" height="1" fill="#000"/><rect x="5" y="8" width="1" height="1" fill="#000"/><rect x="6" y="8" width="1" height="1" fill="#fff"/><rect x="7" y="8" width="1" height="1" fill="#000"/><rect x="0" y="9" width="1" height="1" fill="#000"/><rect x="1" y="9" width="1" height="1" fill="#000"/><rect x="2" y="9" width="1" height="1" fill="#fff"/><rect x="3" y="9" width="1" height="1" fill="#fff"/><rect x="4" y="9" width="1" height="1" fill="#fff"/><rect x="5" y="9" width="1" height="1" fill="#fff"/><rect x="6" y="9" width="1" height="1" fill="#000"/><rect x="7" y="9" width="1" height="1" fill="#000"/><rect x="0" y="10" width="1" height="1" fill="#000"/><rect x="1" y="10" width="1" height="1" fill="#fff"/><rect x="2" y="10" width="1" height="1" fill="#000"/><rect x="3" y="10" width="1" height="1" fill="#000"/><rect x="4" y="10" width="1" height="1" fill="#000"/><rect x="5" y="10" width="1" height="1" fill="#000"/><rect x="6" y="10" width="1" height="1" fill="#fff"/><rect x="7" y="10" width="1" height="1" fill="#000"/><rect x="1" y="11" width="1" height="1" fill="#000"/><rect x="2" y="11" width="1" height="1" fill="#fff"/><rect x="3" y="11" width="1" height="1" fill="#fff"/><rect x="4" y="11" width="1" height="1" fill="#fff"/><rect x="5" y="11" width="1" height="1" fill="#fff"/><rect x="6" y="11" width="1" height="1" fill="#000"/><rect x="2" y="12" width="1" height="1" fill="#000"/><rect x="3" y="12" width="1" height="1" fill="#000"/><rect x="4" y="12" width="1" height="1" fill="#000"/><rect x="5" y="12" width="1" height="1" fill="#000"/></svg>
<svg class="a" style="left:17px;top:189px" width="5" height="10" shape-rendering="crispEdges"><rect x="2" y="0" width="1" height="1" fill="#000090"/><rect x="2" y="1" width="1" height="1" fill="#000090"/><rect x="2" y="2" width="1" height="1" fill="#000090"/><rect x="2" y="3" width="1" height="1" fill="#000090"/><rect x="2" y="4" width="1" height="1" fill="#000090"/><rect x="0" y="5" width="1" height="1" fill="#000090"/><rect x="1" y="5" width="1" height="1" fill="#000090"/><rect x="2" y="5" width="1" height="1" fill="#000090"/><rect x="3" y="5" width="1" height="1" fill="#000090"/><rect x="4" y="5" width="1" height="1" fill="#000090"/><rect x="1" y="6" width="1" height="1" fill="#000090"/><rect x="2" y="6" width="1" height="1" fill="#000090"/><rect x="3" y="6" width="1" height="1" fill="#000090"/><rect x="1" y="7" width="1" height="1" fill="#000090"/><rect x="2" y="7" width="1" height="1" fill="#000090"/><rect x="3" y="7" width="1" height="1" fill="#000090"/><rect x="2" y="8" width="1" height="1" fill="#000090"/><rect x="2" y="9" width="1" height="1" fill="#000090"/></svg>
<div class="a" style="left:29px;top:182px;width:1px;height:23px;background:#bdb7b0"></div>
<div class="a" style="left:30px;top:182px;width:1px;height:23px;background:#fbf9f6"></div>
<svg class="a" style="left:39px;top:187px" width="15" height="14" shape-rendering="crispEdges"><rect x="2" y="0" width="1" height="1" fill="#000"/><rect x="3" y="0" width="1" height="1" fill="#000"/><rect x="4" y="0" width="1" height="1" fill="#000"/><rect x="5" y="0" width="1" height="1" fill="#000"/><rect x="6" y="0" width="1" height="1" fill="#000"/><rect x="7" y="0" width="1" height="1" fill="#000"/><rect x="8" y="0" width="1" height="1" fill="#000"/><rect x="9" y="0" width="1" height="1" fill="#000"/><rect x="10" y="0" width="1" height="1" fill="#000"/><rect x="11" y="0" width="1" height="1" fill="#000"/><rect x="12" y="0" width="1" height="1" fill="#000"/><rect x="2" y="1" width="1" height="1" fill="#000"/><rect x="3" y="1" width="1" height="1" fill="#fff"/><rect x="4" y="1" width="1" height="1" fill="#fff"/><rect x="5" y="1" width="1" height="1" fill="#fff"/><rect x="6" y="1" width="1" height="1" fill="#fff"/><rect x="7" y="1" width="1" height="1" fill="#fff"/><rect x="8" y="1" width="1" height="1" fill="#fff"/><rect x="9" y="1" width="1" height="1" fill="#fff"/><rect x="10" y="1" width="1" height="1" fill="#fff"/><rect x="11" y="1" width="1" height="1" fill="#fff"/><rect x="12" y="1" width="1" height="1" fill="#000"/><rect x="2" y="2" width="1" height="1" fill="#000"/><rect x="3" y="2" width="1" height="1" fill="#fff"/><rect x="4" y="2" width="1" height="1" fill="#8f8262"/><rect x="5" y="2" width="1" height="1" fill="#8f8262"/><rect x="6" y="2" width="1" height="1" fill="#8f8262"/><rect x="7" y="2" width="1" height="1" fill="#8f8262"/><rect x="8" y="2" width="1" height="1" fill="#8f8262"/><rect x="9" y="2" width="1" height="1" fill="#8f8262"/><rect x="10" y="2" width="1" height="1" fill="#8f8262"/><rect x="11" y="2" width="1" height="1" fill="#fff"/><rect x="12" y="2" width="1" height="1" fill="#000"/><rect x="3" y="3" width="1" height="1" fill="#fff"/><rect x="4" y="3" width="1" height="1" fill="#fff"/><rect x="5" y="3" width="1" height="1" fill="#fff"/><rect x="6" y="3" width="1" height="1" fill="#fff"/><rect x="7" y="3" width="1" height="1" fill="#fff"/><rect x="8" y="3" width="1" height="1" fill="#fff"/><rect x="9" y="3" width="1" height="1" fill="#fff"/><rect x="10" y="3" width="1" height="1" fill="#fff"/><rect x="11" y="3" width="1" height="1" fill="#fff"/><rect x="3" y="4" width="1" height="1" fill="#fff"/><rect x="4" y="4" width="1" height="1" fill="#8f8262"/><rect x="5" y="4" width="1" height="1" fill="#8f8262"/><rect x="6" y="4" width="1" height="1" fill="#8f8262"/><rect x="7" y="4" width="1" height="1" fill="#fff"/><rect x="8" y="4" width="1" height="1" fill="#fff"/><rect x="9" y="4" width="1" height="1" fill="#fff"/><rect x="10" y="4" width="1" height="1" fill="#fff"/><rect x="11" y="4" width="1" height="1" fill="#fff"/><rect x="3" y="5" width="1" height="1" fill="#000090"/><rect x="4" y="5" width="1" height="1" fill="#fff"/><rect x="5" y="5" width="1" height="1" fill="#fff"/><rect x="6" y="5" width="1" height="1" fill="#fff"/><rect x="7" y="5" width="1" height="1" fill="#fff"/><rect x="8" y="5" width="1" height="1" fill="#fff"/><rect x="9" y="5" width="1" height="1" fill="#fff"/><rect x="10" y="5" width="1" height="1" fill="#fff"/><rect x="11" y="5" width="1" height="1" fill="#fff"/><rect x="3" y="6" width="1" height="1" fill="#000090"/><rect x="4" y="6" width="1" height="1" fill="#000090"/><rect x="5" y="6" width="1" height="1" fill="#fff"/><rect x="6" y="6" width="1" height="1" fill="#fff"/><rect x="7" y="6" width="1" height="1" fill="#fff"/><rect x="8" y="6" width="1" height="1" fill="#fff"/><rect x="9" y="6" width="1" height="1" fill="#fff"/><rect x="10" y="6" width="1" height="1" fill="#fff"/><rect x="0" y="7" width="1" height="1" fill="#000090"/><rect x="1" y="7" width="1" height="1" fill="#000090"/><rect x="2" y="7" width="1" height="1" fill="#000090"/><rect x="3" y="7" width="1" height="1" fill="#000090"/><rect x="4" y="7" width="1" height="1" fill="#000090"/><rect x="5" y="7" width="1" height="1" fill="#000090"/><rect x="6" y="7" width="1" height="1" fill="#fff"/><rect x="7" y="7" width="1" height="1" fill="#fff"/><rect x="8" y="7" width="1" height="1" fill="#fff"/><rect x="9" y="7" width="1" height="1" fill="#fff"/><rect x="10" y="7" width="1" height="1" fill="#fff"/><rect x="11" y="7" width="1" height="1" fill="#fff"/><rect x="3" y="8" width="1" height="1" fill="#000090"/><rect x="4" y="8" width="1" height="1" fill="#000090"/><rect x="5" y="8" width="1" height="1" fill="#fff"/><rect x="6" y="8" width="1" height="1" fill="#fff"/><rect x="7" y="8" width="1" height="1" fill="#fff"/><rect x="8" y="8" width="1" height="1" fill="#fff"/><rect x="9" y="8" width="1" height="1" fill="#fff"/><rect x="10" y="8" width="1" height="1" fill="#fff"/><rect x="3" y="9" width="1" height="1" fill="#000090"/><rect x="4" y="9" width="1" height="1" fill="#fff"/><rect x="5" y="9" width="1" height="1" fill="#8f8262"/><rect x="6" y="9" width="1" height="1" fill="#fff"/><rect x="7" y="9" width="1" height="1" fill="#fff"/><rect x="8" y="9" width="1" height="1" fill="#fff"/><rect x="9" y="9" width="1" height="1" fill="#fff"/><rect x="10" y="9" width="1" height="1" fill="#fff"/><rect x="11" y="9" width="1" height="1" fill="#fff"/><rect x="3" y="10" width="1" height="1" fill="#fff"/><rect x="4" y="10" width="1" height="1" fill="#8f8262"/><rect x="5" y="10" width="1" height="1" fill="#8f8262"/><rect x="6" y="10" width="1" height="1" fill="#fff"/><rect x="7" y="10" width="1" height="1" fill="#fff"/><rect x="8" y="10" width="1" height="1" fill="#fff"/><rect x="9" y="10" width="1" height="1" fill="#fff"/><rect x="10" y="10" width="1" height="1" fill="#fff"/><rect x="11" y="10" width="1" height="1" fill="#fff"/><rect x="2" y="11" width="1" height="1" fill="#000"/><rect x="3" y="11" width="1" height="1" fill="#fff"/><rect x="4" y="11" width="1" height="1" fill="#fff"/><rect x="5" y="11" width="1" height="1" fill="#fff"/><rect x="6" y="11" width="1" height="1" fill="#fff"/><rect x="7" y="11" width="1" height="1" fill="#fff"/><rect x="8" y="11" width="1" height="1" fill="#fff"/><rect x="9" y="11" width="1" height="1" fill="#fff"/><rect x="10" y="11" width="1" height="1" fill="#fff"/><rect x="11" y="11" width="1" height="1" fill="#fff"/><rect x="12" y="11" width="1" height="1" fill="#000"/><rect x="2" y="12" width="1" height="1" fill="#000"/><rect x="3" y="12" width="1" height="1" fill="#fff"/><rect x="4" y="12" width="1" height="1" fill="#fff"/><rect x="5" y="12" width="1" height="1" fill="#fff"/><rect x="6" y="12" width="1" height="1" fill="#fff"/><rect x="7" y="12" width="1" height="1" fill="#fff"/><rect x="8" y="12" width="1" height="1" fill="#fff"/><rect x="9" y="12" width="1" height="1" fill="#fff"/><rect x="10" y="12" width="1" height="1" fill="#fff"/><rect x="11" y="12" width="1" height="1" fill="#fff"/><rect x="12" y="12" width="1" height="1" fill="#000"/><rect x="2" y="13" width="1" height="1" fill="#000"/><rect x="3" y="13" width="1" height="1" fill="#000"/><rect x="4" y="13" width="1" height="1" fill="#000"/><rect x="5" y="13" width="1" height="1" fill="#000"/><rect x="6" y="13" width="1" height="1" fill="#000"/><rect x="7" y="13" width="1" height="1" fill="#000"/><rect x="8" y="13" width="1" height="1" fill="#000"/><rect x="9" y="13" width="1" height="1" fill="#000"/><rect x="10" y="13" width="1" height="1" fill="#000"/><rect x="11" y="13" width="1" height="1" fill="#000"/><rect x="12" y="13" width="1" height="1" fill="#000"/></svg>
<svg class="a" style="left:46px;top:191px" width="7" height="7" shape-rendering="crispEdges"><rect x="0" y="0" width="1" height="1" fill="#a00000"/><rect x="1" y="0" width="1" height="1" fill="#a00000"/><rect x="5" y="0" width="1" height="1" fill="#a00000"/><rect x="6" y="0" width="1" height="1" fill="#a00000"/><rect x="0" y="1" width="1" height="1" fill="#a00000"/><rect x="1" y="1" width="1" height="1" fill="#a00000"/><rect x="2" y="1" width="1" height="1" fill="#a00000"/><rect x="4" y="1" width="1" height="1" fill="#a00000"/><rect x="5" y="1" width="1" height="1" fill="#a00000"/><rect x="6" y="1" width="1" height="1" fill="#a00000"/><rect x="1" y="2" width="1" height="1" fill="#a00000"/><rect x="2" y="2" width="1" height="1" fill="#a00000"/><rect x="3" y="2" width="1" height="1" fill="#a00000"/><rect x="4" y="2" width="1" height="1" fill="#a00000"/><rect x="5" y="2" width="1" height="1" fill="#a00000"/><rect x="2" y="3" width="1" height="1" fill="#a00000"/><rect x="3" y="3" width="1" height="1" fill="#a00000"/><rect x="4" y="3" width="1" height="1" fill="#a00000"/><rect x="1" y="4" width="1" height="1" fill="#a00000"/><rect x="2" y="4" width="1" height="1" fill="#a00000"/><rect x="3" y="4" width="1" height="1" fill="#a00000"/><rect x="4" y="4" width="1" height="1" fill="#a00000"/><rect x="5" y="4" width="1" height="1" fill="#a00000"/><rect x="0" y="5" width="1" height="1" fill="#a00000"/><rect x="1" y="5" width="1" height="1" fill="#a00000"/><rect x="2" y="5" width="1" height="1" fill="#a00000"/><rect x="4" y="5" width="1" height="1" fill="#a00000"/><rect x="5" y="5" width="1" height="1" fill="#a00000"/><rect x="6" y="5" width="1" height="1" fill="#a00000"/><rect x="0" y="6" width="1" height="1" fill="#a00000"/><rect x="1" y="6" width="1" height="1" fill="#a00000"/><rect x="5" y="6" width="1" height="1" fill="#a00000"/><rect x="6" y="6" width="1" height="1" fill="#a00000"/></svg>
<div class="hl" style="left:58px;top:182px;width:23px;height:23px"></div>
<svg class="a" style="left:61px;top:185px" width="16" height="16" shape-rendering="crispEdges"><rect x="2" y="0" width="1" height="1" fill="#8f8262"/><rect x="3" y="0" width="1" height="1" fill="#0028d0"/><rect x="4" y="0" width="1" height="1" fill="#0028d0"/><rect x="5" y="0" width="1" height="1" fill="#0028d0"/><rect x="6" y="0" width="1" height="1" fill="#0028d0"/><rect x="7" y="0" width="1" height="1" fill="#0028d0"/><rect x="8" y="0" width="1" height="1" fill="#0028d0"/><rect x="9" y="0" width="1" height="1" fill="#0028d0"/><rect x="10" y="0" width="1" height="1" fill="#0028d0"/><rect x="11" y="0" width="1" height="1" fill="#0028d0"/><rect x="12" y="0" width="1" height="1" fill="#0028d0"/><rect x="13" y="0" width="1" height="1" fill="#0028d0"/><rect x="14" y="0" width="1" height="1" fill="#0028d0"/><rect x="15" y="0" width="1" height="1" fill="#8f8262"/><rect x="2" y="1" width="1" height="1" fill="#8f8262"/><rect x="3" y="1" width="1" height="1" fill="#3a6ae0"/><rect x="4" y="1" width="1" height="1" fill="#3a6ae0"/><rect x="5" y="1" width="1" height="1" fill="#3a6ae0"/><rect x="6" y="1" width="1" height="1" fill="#3a6ae0"/><rect x="7" y="1" width="1" height="1" fill="#3a6ae0"/><rect x="8" y="1" width="1" height="1" fill="#3a6ae0"/><rect x="9" y="1" width="1" height="1" fill="#3a6ae0"/><rect x="10" y="1" width="1" height="1" fill="#3a6ae0"/><rect x="11" y="1" width="1" height="1" fill="#3a6ae0"/><rect x="12" y="1" width="1" height="1" fill="#3a6ae0"/><rect x="13" y="1" width="1" height="1" fill="#3a6ae0"/><rect x="14" y="1" width="1" height="1" fill="#3a6ae0"/><rect x="15" y="1" width="1" height="1" fill="#7a94d8"/><rect x="2" y="2" width="1" height="1" fill="#8f8262"/><rect x="3" y="2" width="1" height="1" fill="#3a6ae0"/><rect x="4" y="2" width="1" height="1" fill="#3a6ae0"/><rect x="5" y="2" width="1" height="1" fill="#3a6ae0"/><rect x="6" y="2" width="1" height="1" fill="#3a6ae0"/><rect x="7" y="2" width="1" height="1" fill="#3a6ae0"/><rect x="8" y="2" width="1" height="1" fill="#3a6ae0"/><rect x="9" y="2" width="1" height="1" fill="#3a6ae0"/><rect x="10" y="2" width="1" height="1" fill="#3a6ae0"/><rect x="11" y="2" width="1" height="1" fill="#3a6ae0"/><rect x="12" y="2" width="1" height="1" fill="#3a6ae0"/><rect x="13" y="2" width="1" height="1" fill="#3a6ae0"/><rect x="14" y="2" width="1" height="1" fill="#3a6ae0"/><rect x="15" y="2" width="1" height="1" fill="#7a94d8"/><rect x="0" y="3" width="1" height="1" fill="#6b5f45"/><rect x="1" y="3" width="1" height="1" fill="#3a6ae0"/><rect x="3" y="3" width="1" height="1" fill="#fff"/><rect x="4" y="3" width="1" height="1" fill="#fff"/><rect x="5" y="3" width="1" height="1" fill="#fff"/><rect x="6" y="3" width="1" height="1" fill="#fff"/><rect x="7" y="3" width="1" height="1" fill="#fff"/><rect x="8" y="3" width="1" height="1" fill="#fff"/><rect x="9" y="3" width="1" height="1" fill="#fff"/><rect x="10" y="3" width="1" height="1" fill="#fff"/><rect x="11" y="3" width="1" height="1" fill="#fff"/><rect x="12" y="3" width="1" height="1" fill="#fff"/><rect x="13" y="3" width="1" height="1" fill="#fff"/><rect x="14" y="3" width="1" height="1" fill="#fff"/><rect x="15" y="3" width="1" height="1" fill="#7a94d8"/><rect x="0" y="4" width="1" height="1" fill="#6b5f45"/><rect x="1" y="4" width="1" height="1" fill="#f6e6de"/><rect x="2" y="4" width="1" height="1" fill="#3a6ae0"/><rect x="4" y="4" width="1" height="1" fill="#3a6ae0"/><rect x="5" y="4" width="1" height="1" fill="#fff"/><rect x="6" y="4" width="1" height="1" fill="#fff"/><rect x="7" y="4" width="1" height="1" fill="#fff"/><rect x="8" y="4" width="1" height="1" fill="#fff"/><rect x="9" y="4" width="1" height="1" fill="#8f8262"/><rect x="10" y="4" width="1" height="1" fill="#8f8262"/><rect x="11" y="4" width="1" height="1" fill="#8f8262"/><rect x="12" y="4" width="1" height="1" fill="#8f8262"/><rect x="13" y="4" width="1" height="1" fill="#8f8262"/><rect x="14" y="4" width="1" height="1" fill="#8f8262"/><rect x="15" y="4" width="1" height="1" fill="#7a94d8"/><rect x="0" y="5" width="1" height="1" fill="#6b5f45"/><rect x="1" y="5" width="1" height="1" fill="#f6e6de"/><rect x="2" y="5" width="1" height="1" fill="#f6e6de"/><rect x="3" y="5" width="1" height="1" fill="#3a6ae0"/><rect x="4" y="5" width="1" height="1" fill="#3a6ae0"/><rect x="5" y="5" width="1" height="1" fill="#3a6ae0"/><rect x="6" y="5" width="1" height="1" fill="#fff"/><rect x="7" y="5" width="1" height="1" fill="#fff"/><rect x="8" y="5" width="1" height="1" fill="#fff"/><rect x="9" y="5" width="1" height="1" fill="#fff"/><rect x="10" y="5" width="1" height="1" fill="#fff"/><rect x="11" y="5" width="1" height="1" fill="#fff"/><rect x="12" y="5" width="1" height="1" fill="#fff"/><rect x="13" y="5" width="1" height="1" fill="#fff"/><rect x="14" y="5" width="1" height="1" fill="#fff"/><rect x="15" y="5" width="1" height="1" fill="#7a94d8"/><rect x="0" y="6" width="1" height="1" fill="#6b5f45"/><rect x="1" y="6" width="1" height="1" fill="#f6e6de"/><rect x="2" y="6" width="1" height="1" fill="#f6e6de"/><rect x="3" y="6" width="1" height="1" fill="#f6e6de"/><rect x="4" y="6" width="1" height="1" fill="#3a6ae0"/><rect x="5" y="6" width="1" height="1" fill="#3a6ae0"/><rect x="6" y="6" width="1" height="1" fill="#3a6ae0"/><rect x="7" y="6" width="1" height="1" fill="#fff"/><rect x="8" y="6" width="1" height="1" fill="#fff"/><rect x="9" y="6" width="1" height="1" fill="#8f8262"/><rect x="10" y="6" width="1" height="1" fill="#8f8262"/><rect x="11" y="6" width="1" height="1" fill="#8f8262"/><rect x="12" y="6" width="1" height="1" fill="#8f8262"/><rect x="13" y="6" width="1" height="1" fill="#8f8262"/><rect x="14" y="6" width="1" height="1" fill="#8f8262"/><rect x="15" y="6" width="1" height="1" fill="#7a94d8"/><rect x="0" y="7" width="1" height="1" fill="#6b5f45"/><rect x="1" y="7" width="1" height="1" fill="#f6e6de"/><rect x="2" y="7" width="1" height="1" fill="#f6e6de"/><rect x="3" y="7" width="1" height="1" fill="#f6e6de"/><rect x="4" y="7" width="1" height="1" fill="#f6e6de"/><rect x="5" y="7" width="1" height="1" fill="#3a6ae0"/><rect x="6" y="7" width="1" height="1" fill="#3a6ae0"/><rect x="7" y="7" width="1" height="1" fill="#3a6ae0"/><rect x="8" y="7" width="1" height="1" fill="#fff"/><rect x="9" y="7" width="1" height="1" fill="#fff"/><rect x="10" y="7" width="1" height="1" fill="#fff"/><rect x="11" y="7" width="1" height="1" fill="#fff"/><rect x="12" y="7" width="1" height="1" fill="#fff"/><rect x="13" y="7" width="1" height="1" fill="#fff"/><rect x="14" y="7" width="1" height="1" fill="#fff"/><rect x="15" y="7" width="1" height="1" fill="#7a94d8"/><rect x="0" y="8" width="1" height="1" fill="#6b5f45"/><rect x="1" y="8" width="1" height="1" fill="#f6e6de"/><rect x="2" y="8" width="1" height="1" fill="#f6e6de"/><rect x="3" y="8" width="1" height="1" fill="#f6e6de"/><rect x="4" y="8" width="1" height="1" fill="#f6e6de"/><rect x="5" y="8" width="1" height="1" fill="#f6e6de"/><rect x="6" y="8" width="1" height="1" fill="#3a6ae0"/><rect x="7" y="8" width="1" height="1" fill="#3a6ae0"/><rect x="8" y="8" width="1" height="1" fill="#fff"/><rect x="9" y="8" width="1" height="1" fill="#8f8262"/><rect x="10" y="8" width="1" height="1" fill="#8f8262"/><rect x="11" y="8" width="1" height="1" fill="#8f8262"/><rect x="12" y="8" width="1" height="1" fill="#8f8262"/><rect x="13" y="8" width="1" height="1" fill="#8f8262"/><rect x="14" y="8" width="1" height="1" fill="#8f8262"/><rect x="15" y="8" width="1" height="1" fill="#7a94d8"/><rect x="0" y="9" width="1" height="1" fill="#6b5f45"/><rect x="1" y="9" width="1" height="1" fill="#f6e6de"/><rect x="2" y="9" width="1" height="1" fill="#3a6ae0"/><rect x="3" y="9" width="1" height="1" fill="#f6e6de"/><rect x="4" y="9" width="1" height="1" fill="#f6e6de"/><rect x="5" y="9" width="1" height="1" fill="#f6e6de"/><rect x="6" y="9" width="1" height="1" fill="#f6e6de"/><rect x="7" y="9" width="1" height="1" fill="#3a6ae0"/><rect x="8" y="9" width="1" height="1" fill="#fff"/><rect x="9" y="9" width="1" height="1" fill="#fff"/><rect x="10" y="9" width="1" height="1" fill="#fff"/><rect x="11" y="9" width="1" height="1" fill="#fff"/><rect x="12" y="9" width="1" height="1" fill="#fff"/><rect x="13" y="9" width="1" height="1" fill="#fff"/><rect x="14" y="9" width="1" height="1" fill="#fff"/><rect x="15" y="9" width="1" height="1" fill="#7a94d8"/><rect x="0" y="10" width="1" height="1" fill="#6b5f45"/><rect x="1" y="10" width="1" height="1" fill="#f6e6de"/><rect x="2" y="10" width="1" height="1" fill="#3a6ae0"/><rect x="3" y="10" width="1" height="1" fill="#3a6ae0"/><rect x="4" y="10" width="1" height="1" fill="#f6e6de"/><rect x="5" y="10" width="1" height="1" fill="#f6e6de"/><rect x="6" y="10" width="1" height="1" fill="#f6e6de"/><rect x="7" y="10" width="1" height="1" fill="#f6e6de"/><rect x="8" y="10" width="1" height="1" fill="#3a6ae0"/><rect x="9" y="10" width="1" height="1" fill="#8f8262"/><rect x="10" y="10" width="1" height="1" fill="#8f8262"/><rect x="11" y="10" width="1" height="1" fill="#8f8262"/><rect x="12" y="10" width="1" height="1" fill="#8f8262"/><rect x="13" y="10" width="1" height="1" fill="#8f8262"/><rect x="14" y="10" width="1" height="1" fill="#8f8262"/><rect x="15" y="10" width="1" height="1" fill="#7a94d8"/><rect x="0" y="11" width="1" height="1" fill="#6b5f45"/><rect x="1" y="11" width="1" height="1" fill="#f6e6de"/><rect x="2" y="11" width="1" height="1" fill="#3a6ae0"/><rect x="3" y="11" width="1" height="1" fill="#f6e6de"/><rect x="4" y="11" width="1" height="1" fill="#3a6ae0"/><rect x="5" y="11" width="1" height="1" fill="#f6e6de"/><rect x="6" y="11" width="1" height="1" fill="#f6e6de"/><rect x="7" y="11" width="1" height="1" fill="#f6e6de"/><rect x="8" y="11" width="1" height="1" fill="#f6e6de"/><rect x="9" y="11" width="1" height="1" fill="#3a6ae0"/><rect x="10" y="11" width="1" height="1" fill="#fff"/><rect x="11" y="11" width="1" height="1" fill="#fff"/><rect x="12" y="11" width="1" height="1" fill="#fff"/><rect x="13" y="11" width="1" height="1" fill="#fff"/><rect x="14" y="11" width="1" height="1" fill="#fff"/><rect x="15" y="11" width="1" height="1" fill="#7a94d8"/><rect x="0" y="12" width="1" height="1" fill="#6b5f45"/><rect x="1" y="12" width="1" height="1" fill="#f6e6de"/><rect x="2" y="12" width="1" height="1" fill="#f6e6de"/><rect x="3" y="12" width="1" height="1" fill="#f6e6de"/><rect x="4" y="12" width="1" height="1" fill="#f6e6de"/><rect x="5" y="12" width="1" height="1" fill="#f6e6de"/><rect x="6" y="12" width="1" height="1" fill="#f6e6de"/><rect x="7" y="12" width="1" height="1" fill="#f6e6de"/><rect x="8" y="12" width="1" height="1" fill="#f6e6de"/><rect x="9" y="12" width="1" height="1" fill="#f6e6de"/><rect x="10" y="12" width="1" height="1" fill="#3a6ae0"/><rect x="11" y="12" width="1" height="1" fill="#fff"/><rect x="12" y="12" width="1" height="1" fill="#fff"/><rect x="13" y="12" width="1" height="1" fill="#fff"/><rect x="14" y="12" width="1" height="1" fill="#fff"/><rect x="15" y="12" width="1" height="1" fill="#7a94d8"/><rect x="0" y="13" width="1" height="1" fill="#6b5f45"/><rect x="1" y="13" width="1" height="1" fill="#f6e6de"/><rect x="2" y="13" width="1" height="1" fill="#f6e6de"/><rect x="3" y="13" width="1" height="1" fill="#f6e6de"/><rect x="4" y="13" width="1" height="1" fill="#f6e6de"/><rect x="5" y="13" width="1" height="1" fill="#f6e6de"/><rect x="6" y="13" width="1" height="1" fill="#f6e6de"/><rect x="7" y="13" width="1" height="1" fill="#f6e6de"/><rect x="8" y="13" width="1" height="1" fill="#f6e6de"/><rect x="9" y="13" width="1" height="1" fill="#f6e6de"/><rect x="10" y="13" width="1" height="1" fill="#f6e6de"/><rect x="11" y="13" width="1" height="1" fill="#3a6ae0"/><rect x="12" y="13" width="1" height="1" fill="#7a94d8"/><rect x="13" y="13" width="1" height="1" fill="#7a94d8"/><rect x="14" y="13" width="1" height="1" fill="#7a94d8"/><rect x="15" y="13" width="1" height="1" fill="#7a94d8"/><rect x="0" y="14" width="1" height="1" fill="#6b5f45"/><rect x="1" y="14" width="1" height="1" fill="#f6e6de"/><rect x="2" y="14" width="1" height="1" fill="#f6e6de"/><rect x="3" y="14" width="1" height="1" fill="#f6e6de"/><rect x="4" y="14" width="1" height="1" fill="#f6e6de"/><rect x="5" y="14" width="1" height="1" fill="#f6e6de"/><rect x="6" y="14" width="1" height="1" fill="#f6e6de"/><rect x="7" y="14" width="1" height="1" fill="#f6e6de"/><rect x="8" y="14" width="1" height="1" fill="#f6e6de"/><rect x="9" y="14" width="1" height="1" fill="#f6e6de"/><rect x="10" y="14" width="1" height="1" fill="#f6e6de"/><rect x="11" y="14" width="1" height="1" fill="#f6e6de"/><rect x="12" y="14" width="1" height="1" fill="#3a6ae0"/><rect x="0" y="15" width="1" height="1" fill="#6b5f45"/><rect x="1" y="15" width="1" height="1" fill="#6b5f45"/><rect x="2" y="15" width="1" height="1" fill="#6b5f45"/><rect x="3" y="15" width="1" height="1" fill="#6b5f45"/><rect x="4" y="15" width="1" height="1" fill="#6b5f45"/><rect x="5" y="15" width="1" height="1" fill="#6b5f45"/><rect x="6" y="15" width="1" height="1" fill="#6b5f45"/><rect x="7" y="15" width="1" height="1" fill="#6b5f45"/><rect x="8" y="15" width="1" height="1" fill="#6b5f45"/><rect x="9" y="15" width="1" height="1" fill="#6b5f45"/><rect x="10" y="15" width="1" height="1" fill="#6b5f45"/><rect x="11" y="15" width="1" height="1" fill="#6b5f45"/><rect x="12" y="15" width="1" height="1" fill="#6b5f45"/><rect x="13" y="15" width="1" height="1" fill="#6b5f45"/></svg>
<svg class="a" style="left:84px;top:186px" width="7" height="7" shape-rendering="crispEdges"><rect x="2" y="0" width="1" height="1" fill="#000"/><rect x="3" y="0" width="1" height="1" fill="#000"/><rect x="4" y="0" width="1" height="1" fill="#000"/><rect x="2" y="1" width="1" height="1" fill="#000"/><rect x="3" y="1" width="1" height="1" fill="#00e8f0"/><rect x="4" y="1" width="1" height="1" fill="#000"/><rect x="0" y="2" width="1" height="1" fill="#000"/><rect x="1" y="2" width="1" height="1" fill="#000"/><rect x="2" y="2" width="1" height="1" fill="#000"/><rect x="3" y="2" width="1" height="1" fill="#00e8f0"/><rect x="4" y="2" width="1" height="1" fill="#000"/><rect x="5" y="2" width="1" height="1" fill="#000"/><rect x="6" y="2" width="1" height="1" fill="#000"/><rect x="0" y="3" width="1" height="1" fill="#000"/><rect x="1" y="3" width="1" height="1" fill="#00e8f0"/><rect x="2" y="3" width="1" height="1" fill="#00e8f0"/><rect x="3" y="3" width="1" height="1" fill="#00e8f0"/><rect x="4" y="3" width="1" height="1" fill="#00e8f0"/><rect x="5" y="3" width="1" height="1" fill="#00e8f0"/><rect x="6" y="3" width="1" height="1" fill="#000"/><rect x="0" y="4" width="1" height="1" fill="#000"/><rect x="1" y="4" width="1" height="1" fill="#000"/><rect x="2" y="4" width="1" height="1" fill="#000"/><rect x="3" y="4" width="1" height="1" fill="#00e8f0"/><rect x="4" y="4" width="1" height="1" fill="#000"/><rect x="5" y="4" width="1" height="1" fill="#000"/><rect x="6" y="4" width="1" height="1" fill="#000"/><rect x="2" y="5" width="1" height="1" fill="#000"/><rect x="3" y="5" width="1" height="1" fill="#00e8f0"/><rect x="4" y="5" width="1" height="1" fill="#000"/><rect x="2" y="6" width="1" height="1" fill="#000"/><rect x="3" y="6" width="1" height="1" fill="#000"/><rect x="4" y="6" width="1" height="1" fill="#000"/></svg>
<svg class="a" style="left:91px;top:192px" width="9" height="9" shape-rendering="crispEdges"><rect x="0" y="0" width="1" height="1" fill="#000"/><rect x="1" y="0" width="1" height="1" fill="#000"/><rect x="2" y="0" width="1" height="1" fill="#000"/><rect x="3" y="0" width="1" height="1" fill="#000"/><rect x="4" y="0" width="1" height="1" fill="#000"/><rect x="5" y="0" width="1" height="1" fill="#000"/><rect x="6" y="0" width="1" height="1" fill="#000"/><rect x="7" y="0" width="1" height="1" fill="#000"/><rect x="8" y="0" width="1" height="1" fill="#000"/><rect x="0" y="1" width="1" height="1" fill="#000"/><rect x="1" y="1" width="1" height="1" fill="#00e8f0"/><rect x="2" y="1" width="1" height="1" fill="#000"/><rect x="3" y="1" width="1" height="1" fill="#00e8f0"/><rect x="4" y="1" width="1" height="1" fill="#000"/><rect x="5" y="1" width="1" height="1" fill="#00e8f0"/><rect x="6" y="1" width="1" height="1" fill="#000"/><rect x="7" y="1" width="1" height="1" fill="#00e8f0"/><rect x="8" y="1" width="1" height="1" fill="#000"/><rect x="0" y="2" width="1" height="1" fill="#000"/><rect x="1" y="2" width="1" height="1" fill="#000"/><rect x="2" y="2" width="1" height="1" fill="#000"/><rect x="3" y="2" width="1" height="1" fill="#000"/><rect x="4" y="2" width="1" height="1" fill="#000"/><rect x="5" y="2" width="1" height="1" fill="#000"/><rect x="6" y="2" width="1" height="1" fill="#000"/><rect x="7" y="2" width="1" height="1" fill="#000"/><rect x="8" y="2" width="1" height="1" fill="#000"/><rect x="0" y="3" width="1" height="1" fill="#000"/><rect x="1" y="3" width="1" height="1" fill="#fff"/><rect x="2" y="3" width="1" height="1" fill="#fff"/><rect x="3" y="3" width="1" height="1" fill="#fff"/><rect x="4" y="3" width="1" height="1" fill="#fff"/><rect x="5" y="3" width="1" height="1" fill="#fff"/><rect x="6" y="3" width="1" height="1" fill="#fff"/><rect x="7" y="3" width="1" height="1" fill="#fff"/><rect x="8" y="3" width="1" height="1" fill="#000"/><rect x="0" y="4" width="1" height="1" fill="#000"/><rect x="1" y="4" width="1" height="1" fill="#fff"/><rect x="2" y="4" width="1" height="1" fill="#fff"/><rect x="3" y="4" width="1" height="1" fill="#fff"/><rect x="4" y="4" width="1" height="1" fill="#fff"/><rect x="5" y="4" width="1" height="1" fill="#fff"/><rect x="6" y="4" width="1" height="1" fill="#fff"/><rect x="7" y="4" width="1" height="1" fill="#fff"/><rect x="8" y="4" width="1" height="1" fill="#000"/><rect x="0" y="5" width="1" height="1" fill="#000"/><rect x="1" y="5" width="1" height="1" fill="#fff"/><rect x="2" y="5" width="1" height="1" fill="#fff"/><rect x="3" y="5" width="1" height="1" fill="#fff"/><rect x="4" y="5" width="1" height="1" fill="#fff"/><rect x="5" y="5" width="1" height="1" fill="#fff"/><rect x="6" y="5" width="1" height="1" fill="#fff"/><rect x="7" y="5" width="1" height="1" fill="#fff"/><rect x="8" y="5" width="1" height="1" fill="#000"/><rect x="0" y="6" width="1" height="1" fill="#000"/><rect x="1" y="6" width="1" height="1" fill="#fff"/><rect x="2" y="6" width="1" height="1" fill="#fff"/><rect x="3" y="6" width="1" height="1" fill="#fff"/><rect x="4" y="6" width="1" height="1" fill="#fff"/><rect x="5" y="6" width="1" height="1" fill="#fff"/><rect x="6" y="6" width="1" height="1" fill="#fff"/><rect x="7" y="6" width="1" height="1" fill="#fff"/><rect x="8" y="6" width="1" height="1" fill="#000"/><rect x="0" y="7" width="1" height="1" fill="#000"/><rect x="1" y="7" width="1" height="1" fill="#fff"/><rect x="2" y="7" width="1" height="1" fill="#fff"/><rect x="3" y="7" width="1" height="1" fill="#fff"/><rect x="4" y="7" width="1" height="1" fill="#fff"/><rect x="5" y="7" width="1" height="1" fill="#fff"/><rect x="6" y="7" width="1" height="1" fill="#fff"/><rect x="7" y="7" width="1" height="1" fill="#fff"/><rect x="8" y="7" width="1" height="1" fill="#000"/><rect x="0" y="8" width="1" height="1" fill="#000"/><rect x="1" y="8" width="1" height="1" fill="#000"/><rect x="2" y="8" width="1" height="1" fill="#000"/><rect x="3" y="8" width="1" height="1" fill="#000"/><rect x="4" y="8" width="1" height="1" fill="#000"/><rect x="5" y="8" width="1" height="1" fill="#000"/><rect x="6" y="8" width="1" height="1" fill="#000"/><rect x="7" y="8" width="1" height="1" fill="#000"/><rect x="8" y="8" width="1" height="1" fill="#000"/></svg>
<div class="a" style="left:106px;top:182px;width:1px;height:23px;background:#bdb7b0"></div>
<div class="a" style="left:107px;top:182px;width:1px;height:23px;background:#fbf9f6"></div>
<div class="hl" style="left:112px;top:182px;width:69px;height:23px"></div>
<div class="a" style="left:134px;top:183px;width:2px;height:21px;background:#316ac5"></div>
<div class="a" style="left:157px;top:183px;width:2px;height:21px;background:#316ac5"></div>
<svg class="a" style="left:120px;top:186px" width="12" height="6" shape-rendering="crispEdges"><rect x="5" y="0" width="1" height="1" fill="#8f8262"/><rect x="7" y="0" width="1" height="1" fill="#8f8262"/><rect x="9" y="0" width="1" height="1" fill="#8f8262"/><rect x="3" y="1" width="1" height="1" fill="#000"/><rect x="4" y="1" width="1" height="1" fill="#000"/><rect x="5" y="1" width="1" height="1" fill="#000"/><rect x="6" y="1" width="1" height="1" fill="#000"/><rect x="7" y="1" width="1" height="1" fill="#000"/><rect x="8" y="1" width="1" height="1" fill="#000"/><rect x="9" y="1" width="1" height="1" fill="#8f8262"/><rect x="11" y="1" width="1" height="1" fill="#8f8262"/><rect x="1" y="2" width="1" height="1" fill="#000"/><rect x="2" y="2" width="1" height="1" fill="#000"/><rect x="3" y="2" width="1" height="1" fill="#fff"/><rect x="4" y="2" width="1" height="1" fill="#1a5ae0"/><rect x="5" y="2" width="1" height="1" fill="#000"/><rect x="6" y="2" width="1" height="1" fill="#000"/><rect x="7" y="2" width="1" height="1" fill="#000"/><rect x="8" y="2" width="1" height="1" fill="#000"/><rect x="9" y="2" width="1" height="1" fill="#000"/><rect x="10" y="2" width="1" height="1" fill="#8f8262"/><rect x="0" y="3" width="1" height="1" fill="#000"/><rect x="1" y="3" width="1" height="1" fill="#000"/><rect x="2" y="3" width="1" height="1" fill="#fff"/><rect x="3" y="3" width="1" height="1" fill="#1a5ae0"/><rect x="4" y="3" width="1" height="1" fill="#1a5ae0"/><rect x="5" y="3" width="1" height="1" fill="#000"/><rect x="6" y="3" width="1" height="1" fill="#fff"/><rect x="7" y="3" width="1" height="1" fill="#fff"/><rect x="8" y="3" width="1" height="1" fill="#fff"/><rect x="9" y="3" width="1" height="1" fill="#000"/><rect x="2" y="4" width="1" height="1" fill="#8f8262"/><rect x="3" y="4" width="1" height="1" fill="#fff"/><rect x="4" y="4" width="1" height="1" fill="#fff"/><rect x="5" y="4" width="1" height="1" fill="#fff"/><rect x="6" y="4" width="1" height="1" fill="#fff"/><rect x="7" y="4" width="1" height="1" fill="#fff"/><rect x="8" y="4" width="1" height="1" fill="#8f8262"/><rect x="3" y="5" width="1" height="1" fill="#8f8262"/><rect x="4" y="5" width="1" height="1" fill="#8f8262"/><rect x="5" y="5" width="1" height="1" fill="#8f8262"/><rect x="6" y="5" width="1" height="1" fill="#8f8262"/><rect x="7" y="5" width="1" height="1" fill="#8f8262"/></svg>
<svg class="a" style="left:115px;top:192px" width="13" height="9" shape-rendering="crispEdges"><rect x="3" y="0" width="1" height="1" fill="#000"/><rect x="4" y="0" width="1" height="1" fill="#000"/><rect x="2" y="1" width="1" height="1" fill="#000"/><rect x="2" y="2" width="1" height="1" fill="#000"/><rect x="8" y="2" width="1" height="1" fill="#000"/><rect x="12" y="2" width="1" height="1" fill="#000"/><rect x="0" y="3" width="1" height="1" fill="#000"/><rect x="1" y="3" width="1" height="1" fill="#000"/><rect x="2" y="3" width="1" height="1" fill="#000"/><rect x="3" y="3" width="1" height="1" fill="#000"/><rect x="4" y="3" width="1" height="1" fill="#000"/><rect x="6" y="3" width="1" height="1" fill="#000"/><rect x="9" y="3" width="1" height="1" fill="#000"/><rect x="11" y="3" width="1" height="1" fill="#000"/><rect x="2" y="4" width="1" height="1" fill="#000"/><rect x="5" y="4" width="1" height="1" fill="#000"/><rect x="10" y="4" width="1" height="1" fill="#000"/><rect x="2" y="5" width="1" height="1" fill="#000"/><rect x="5" y="5" width="1" height="1" fill="#000"/><rect x="9" y="5" width="1" height="1" fill="#000"/><rect x="11" y="5" width="1" height="1" fill="#000"/><rect x="2" y="6" width="1" height="1" fill="#000"/><rect x="5" y="6" width="1" height="1" fill="#000"/><rect x="8" y="6" width="1" height="1" fill="#000"/><rect x="12" y="6" width="1" height="1" fill="#000"/><rect x="2" y="7" width="1" height="1" fill="#000"/><rect x="6" y="7" width="1" height="1" fill="#000"/><rect x="0" y="8" width="1" height="1" fill="#000"/><rect x="1" y="8" width="1" height="1" fill="#000"/></svg>
<svg class="a" style="left:139px;top:186px" width="12" height="6" shape-rendering="crispEdges"><rect x="5" y="0" width="1" height="1" fill="#8f8262"/><rect x="7" y="0" width="1" height="1" fill="#8f8262"/><rect x="9" y="0" width="1" height="1" fill="#8f8262"/><rect x="3" y="1" width="1" height="1" fill="#000"/><rect x="4" y="1" width="1" height="1" fill="#000"/><rect x="5" y="1" width="1" height="1" fill="#000"/><rect x="6" y="1" width="1" height="1" fill="#000"/><rect x="7" y="1" width="1" height="1" fill="#000"/><rect x="8" y="1" width="1" height="1" fill="#000"/><rect x="9" y="1" width="1" height="1" fill="#8f8262"/><rect x="11" y="1" width="1" height="1" fill="#8f8262"/><rect x="1" y="2" width="1" height="1" fill="#000"/><rect x="2" y="2" width="1" height="1" fill="#000"/><rect x="3" y="2" width="1" height="1" fill="#fff"/><rect x="4" y="2" width="1" height="1" fill="#1a5ae0"/><rect x="5" y="2" width="1" height="1" fill="#000"/><rect x="6" y="2" width="1" height="1" fill="#000"/><rect x="7" y="2" width="1" height="1" fill="#000"/><rect x="8" y="2" width="1" height="1" fill="#000"/><rect x="9" y="2" width="1" height="1" fill="#000"/><rect x="10" y="2" width="1" height="1" fill="#8f8262"/><rect x="0" y="3" width="1" height="1" fill="#000"/><rect x="1" y="3" width="1" height="1" fill="#000"/><rect x="2" y="3" width="1" height="1" fill="#fff"/><rect x="3" y="3" width="1" height="1" fill="#1a5ae0"/><rect x="4" y="3" width="1" height="1" fill="#1a5ae0"/><rect x="5" y="3" width="1" height="1" fill="#000"/><rect x="6" y="3" width="1" height="1" fill="#fff"/><rect x="7" y="3" width="1" height="1" fill="#fff"/><rect x="8" y="3" width="1" height="1" fill="#fff"/><rect x="9" y="3" width="1" height="1" fill="#000"/><rect x="2" y="4" width="1" height="1" fill="#8f8262"/><rect x="3" y="4" width="1" height="1" fill="#fff"/><rect x="4" y="4" width="1" height="1" fill="#fff"/><rect x="5" y="4" width="1" height="1" fill="#fff"/><rect x="6" y="4" width="1" height="1" fill="#fff"/><rect x="7" y="4" width="1" height="1" fill="#fff"/><rect x="8" y="4" width="1" height="1" fill="#8f8262"/><rect x="3" y="5" width="1" height="1" fill="#8f8262"/><rect x="4" y="5" width="1" height="1" fill="#8f8262"/><rect x="5" y="5" width="1" height="1" fill="#8f8262"/><rect x="6" y="5" width="1" height="1" fill="#8f8262"/><rect x="7" y="5" width="1" height="1" fill="#8f8262"/></svg>
<svg class="a" style="left:139px;top:193px" width="15" height="7" shape-rendering="crispEdges"><rect x="0" y="0" width="1" height="1" fill="#000090"/><rect x="1" y="0" width="1" height="1" fill="#000090"/><rect x="2" y="0" width="1" height="1" fill="#000090"/><rect x="3" y="0" width="1" height="1" fill="#000090"/><rect x="4" y="0" width="1" height="1" fill="#000090"/><rect x="5" y="0" width="1" height="1" fill="#000090"/><rect x="6" y="0" width="1" height="1" fill="#000090"/><rect x="7" y="0" width="1" height="1" fill="#000090"/><rect x="0" y="1" width="1" height="1" fill="#000090"/><rect x="1" y="1" width="1" height="1" fill="#fff"/><rect x="2" y="1" width="1" height="1" fill="#fff"/><rect x="3" y="1" width="1" height="1" fill="#000090"/><rect x="4" y="1" width="1" height="1" fill="#fff"/><rect x="5" y="1" width="1" height="1" fill="#fff"/><rect x="6" y="1" width="1" height="1" fill="#000090"/><rect x="7" y="1" width="1" height="1" fill="#000090"/><rect x="8" y="1" width="1" height="1" fill="#000090"/><rect x="9" y="1" width="1" height="1" fill="#000090"/><rect x="10" y="1" width="1" height="1" fill="#000090"/><rect x="11" y="1" width="1" height="1" fill="#000090"/><rect x="12" y="1" width="1" height="1" fill="#000090"/><rect x="13" y="1" width="1" height="1" fill="#000090"/><rect x="14" y="1" width="1" height="1" fill="#000"/><rect x="0" y="2" width="1" height="1" fill="#000090"/><rect x="1" y="2" width="1" height="1" fill="#000090"/><rect x="2" y="2" width="1" height="1" fill="#000090"/><rect x="3" y="2" width="1" height="1" fill="#000090"/><rect x="4" y="2" width="1" height="1" fill="#000090"/><rect x="5" y="2" width="1" height="1" fill="#000090"/><rect x="6" y="2" width="1" height="1" fill="#000090"/><rect x="7" y="2" width="1" height="1" fill="#000090"/><rect x="8" y="2" width="1" height="1" fill="#000"/><rect x="9" y="2" width="1" height="1" fill="#000"/><rect x="10" y="2" width="1" height="1" fill="#000"/><rect x="11" y="2" width="1" height="1" fill="#000"/><rect x="12" y="2" width="1" height="1" fill="#000"/><rect x="13" y="2" width="1" height="1" fill="#000"/><rect x="14" y="2" width="1" height="1" fill="#000"/><rect x="0" y="3" width="1" height="1" fill="#000"/><rect x="1" y="3" width="1" height="1" fill="#fff"/><rect x="2" y="3" width="1" height="1" fill="#fff"/><rect x="3" y="3" width="1" height="1" fill="#fff"/><rect x="4" y="3" width="1" height="1" fill="#fff"/><rect x="5" y="3" width="1" height="1" fill="#fff"/><rect x="6" y="3" width="1" height="1" fill="#fff"/><rect x="7" y="3" width="1" height="1" fill="#fff"/><rect x="8" y="3" width="1" height="1" fill="#fff"/><rect x="9" y="3" width="1" height="1" fill="#fff"/><rect x="10" y="3" width="1" height="1" fill="#fff"/><rect x="11" y="3" width="1" height="1" fill="#fff"/><rect x="12" y="3" width="1" height="1" fill="#fff"/><rect x="13" y="3" width="1" height="1" fill="#fff"/><rect x="14" y="3" width="1" height="1" fill="#000"/><rect x="0" y="4" width="1" height="1" fill="#000"/><rect x="1" y="4" width="1" height="1" fill="#fff"/><rect x="2" y="4" width="1" height="1" fill="#000"/><rect x="3" y="4" width="1" height="1" fill="#fff"/><rect x="4" y="4" width="1" height="1" fill="#000"/><rect x="5" y="4" width="1" height="1" fill="#fff"/><rect x="6" y="4" width="1" height="1" fill="#000"/><rect x="7" y="4" width="1" height="1" fill="#fff"/><rect x="8" y="4" width="1" height="1" fill="#000"/><rect x="9" y="4" width="1" height="1" fill="#fff"/><rect x="10" y="4" width="1" height="1" fill="#000"/><rect x="11" y="4" width="1" height="1" fill="#fff"/><rect x="12" y="4" width="1" height="1" fill="#000"/><rect x="13" y="4" width="1" height="1" fill="#fff"/><rect x="14" y="4" width="1" height="1" fill="#000"/><rect x="0" y="5" width="1" height="1" fill="#000"/><rect x="1" y="5" width="1" height="1" fill="#fff"/><rect x="2" y="5" width="1" height="1" fill="#fff"/><rect x="3" y="5" width="1" height="1" fill="#fff"/><rect x="4" y="5" width="1" height="1" fill="#fff"/><rect x="5" y="5" width="1" height="1" fill="#fff"/><rect x="6" y="5" width="1" height="1" fill="#fff"/><rect x="7" y="5" width="1" height="1" fill="#fff"/><rect x="8" y="5" width="1" height="1" fill="#fff"/><rect x="9" y="5" width="1" height="1" fill="#fff"/><rect x="10" y="5" width="1" height="1" fill="#fff"/><rect x="11" y="5" width="1" height="1" fill="#fff"/><rect x="12" y="5" width="1" height="1" fill="#fff"/><rect x="13" y="5" width="1" height="1" fill="#fff"/><rect x="14" y="5" width="1" height="1" fill="#000"/><rect x="0" y="6" width="1" height="1" fill="#000"/><rect x="1" y="6" width="1" height="1" fill="#000"/><rect x="2" y="6" width="1" height="1" fill="#000"/><rect x="3" y="6" width="1" height="1" fill="#000"/><rect x="4" y="6" width="1" height="1" fill="#000"/><rect x="5" y="6" width="1" height="1" fill="#000"/><rect x="6" y="6" width="1" height="1" fill="#000"/><rect x="7" y="6" width="1" height="1" fill="#000"/><rect x="8" y="6" width="1" height="1" fill="#000"/><rect x="9" y="6" width="1" height="1" fill="#000"/><rect x="10" y="6" width="1" height="1" fill="#000"/><rect x="11" y="6" width="1" height="1" fill="#000"/><rect x="12" y="6" width="1" height="1" fill="#000"/><rect x="13" y="6" width="1" height="1" fill="#000"/><rect x="14" y="6" width="1" height="1" fill="#000"/></svg>
<svg class="a" style="left:162px;top:186px" width="12" height="6" shape-rendering="crispEdges"><rect x="5" y="0" width="1" height="1" fill="#8f8262"/><rect x="7" y="0" width="1" height="1" fill="#8f8262"/><rect x="9" y="0" width="1" height="1" fill="#8f8262"/><rect x="3" y="1" width="1" height="1" fill="#000"/><rect x="4" y="1" width="1" height="1" fill="#000"/><rect x="5" y="1" width="1" height="1" fill="#000"/><rect x="6" y="1" width="1" height="1" fill="#000"/><rect x="7" y="1" width="1" height="1" fill="#000"/><rect x="8" y="1" width="1" height="1" fill="#000"/><rect x="9" y="1" width="1" height="1" fill="#8f8262"/><rect x="11" y="1" width="1" height="1" fill="#8f8262"/><rect x="1" y="2" width="1" height="1" fill="#000"/><rect x="2" y="2" width="1" height="1" fill="#000"/><rect x="3" y="2" width="1" height="1" fill="#fff"/><rect x="4" y="2" width="1" height="1" fill="#1a5ae0"/><rect x="5" y="2" width="1" height="1" fill="#000"/><rect x="6" y="2" width="1" height="1" fill="#000"/><rect x="7" y="2" width="1" height="1" fill="#000"/><rect x="8" y="2" width="1" height="1" fill="#000"/><rect x="9" y="2" width="1" height="1" fill="#000"/><rect x="10" y="2" width="1" height="1" fill="#8f8262"/><rect x="0" y="3" width="1" height="1" fill="#000"/><rect x="1" y="3" width="1" height="1" fill="#000"/><rect x="2" y="3" width="1" height="1" fill="#fff"/><rect x="3" y="3" width="1" height="1" fill="#1a5ae0"/><rect x="4" y="3" width="1" height="1" fill="#1a5ae0"/><rect x="5" y="3" width="1" height="1" fill="#000"/><rect x="6" y="3" width="1" height="1" fill="#fff"/><rect x="7" y="3" width="1" height="1" fill="#fff"/><rect x="8" y="3" width="1" height="1" fill="#fff"/><rect x="9" y="3" width="1" height="1" fill="#000"/><rect x="2" y="4" width="1" height="1" fill="#8f8262"/><rect x="3" y="4" width="1" height="1" fill="#fff"/><rect x="4" y="4" width="1" height="1" fill="#fff"/><rect x="5" y="4" width="1" height="1" fill="#fff"/><rect x="6" y="4" width="1" height="1" fill="#fff"/><rect x="7" y="4" width="1" height="1" fill="#fff"/><rect x="8" y="4" width="1" height="1" fill="#8f8262"/><rect x="3" y="5" width="1" height="1" fill="#8f8262"/><rect x="4" y="5" width="1" height="1" fill="#8f8262"/><rect x="5" y="5" width="1" height="1" fill="#8f8262"/><rect x="6" y="5" width="1" height="1" fill="#8f8262"/><rect x="7" y="5" width="1" height="1" fill="#8f8262"/></svg>
<svg class="a" style="left:170px;top:191px" width="6" height="10" shape-rendering="crispEdges"><rect x="2" y="0" width="1" height="1" fill="#000"/><rect x="3" y="0" width="1" height="1" fill="#000"/><rect x="1" y="1" width="1" height="1" fill="#000"/><rect x="4" y="1" width="1" height="1" fill="#000"/><rect x="0" y="2" width="1" height="1" fill="#000"/><rect x="5" y="2" width="1" height="1" fill="#000"/><rect x="0" y="4" width="1" height="1" fill="#000090"/><rect x="1" y="4" width="1" height="1" fill="#000090"/><rect x="2" y="4" width="1" height="1" fill="#000090"/><rect x="3" y="4" width="1" height="1" fill="#000090"/><rect x="4" y="4" width="1" height="1" fill="#000090"/><rect x="5" y="4" width="1" height="1" fill="#000090"/><rect x="0" y="5" width="1" height="1" fill="#000090"/><rect x="1" y="5" width="1" height="1" fill="#000090"/><rect x="2" y="5" width="1" height="1" fill="#000090"/><rect x="3" y="5" width="1" height="1" fill="#000090"/><rect x="4" y="5" width="1" height="1" fill="#000090"/><rect x="5" y="5" width="1" height="1" fill="#000090"/><rect x="0" y="7" width="1" height="1" fill="#000090"/><rect x="1" y="7" width="1" height="1" fill="#000090"/><rect x="2" y="7" width="1" height="1" fill="#000090"/><rect x="3" y="7" width="1" height="1" fill="#000090"/><rect x="4" y="7" width="1" height="1" fill="#000090"/><rect x="5" y="7" width="1" height="1" fill="#000090"/><rect x="0" y="8" width="1" height="1" fill="#000090"/><rect x="1" y="8" width="1" height="1" fill="#000090"/><rect x="2" y="8" width="1" height="1" fill="#000090"/><rect x="3" y="8" width="1" height="1" fill="#000090"/><rect x="4" y="8" width="1" height="1" fill="#000090"/><rect x="5" y="8" width="1" height="1" fill="#000090"/></svg>
<svg class="a" style="left:184px;top:186px" width="17" height="16"><path d="M0.5 0.5 H13 V1.8 L9 5 V7.5 H4.5 V5 L0.5 1.8Z" fill="#000"/><path d="M3 1.8 H10.5 L7.8 4 V6 H5.7 V4Z" fill="#fff"/><text x="0" y="15" font-family="Liberation Sans" font-weight="bold" font-size="7.5" fill="#0020b0">123</text><rect x="14" y="9" width="1.2" height="4" fill="#000"/><rect x="14" y="14" width="1.2" height="1.2" fill="#000"/></svg>
<div class="a" style="left:207px;top:182px;width:1px;height:23px;background:#bdb7b0"></div>
<div class="a" style="left:208px;top:182px;width:1px;height:23px;background:#fbf9f6"></div>
<div class="hl" style="left:212px;top:182px;width:23px;height:23px"></div>
<svg class="a" style="left:215px;top:186px" width="17" height="15"><rect x="0.5" y="0.5" width="10" height="13" fill="#fff" stroke="#6b5f45" stroke-width="1.2"/><path d="M2 3 H9 M2 5 H4 M2 7.5 H4 M2 10 H9" stroke="#6b5f45"/><rect x="5" y="4.5" width="3" height="3" fill="#0a1c6c"/><path d="M7 12 L14.5 3.5" stroke="#0a1c9c" stroke-width="2.6"/><path d="M6.5 12.5 L8 10.5" stroke="#ff0" stroke-width="2"/><path d="M14 2.5 L15.5 1" stroke="#fff" stroke-width="1.5"/></svg>
<div class="a" style="left:242px;top:182px;width:1px;height:23px;background:#bdb7b0"></div>
<div class="a" style="left:243px;top:182px;width:1px;height:23px;background:#fbf9f6"></div>
<svg class="a" style="left:248px;top:187px" width="13" height="13" shape-rendering="crispEdges"><rect x="0" y="0" width="1" height="1" fill="#000"/><rect x="1" y="0" width="1" height="1" fill="#000"/><rect x="2" y="0" width="1" height="1" fill="#000"/><rect x="3" y="0" width="1" height="1" fill="#000"/><rect x="4" y="0" width="1" height="1" fill="#000"/><rect x="5" y="0" width="1" height="1" fill="#000"/><rect x="6" y="0" width="1" height="1" fill="#000"/><rect x="7" y="0" width="1" height="1" fill="#000"/><rect x="8" y="0" width="1" height="1" fill="#000"/><rect x="9" y="0" width="1" height="1" fill="#000"/><rect x="10" y="0" width="1" height="1" fill="#000"/><rect x="11" y="0" width="1" height="1" fill="#000"/><rect x="12" y="0" width="1" height="1" fill="#000"/><rect x="0" y="1" width="1" height="1" fill="#000"/><rect x="1" y="1" width="1" height="1" fill="#8f8262"/><rect x="2" y="1" width="1" height="1" fill="#000"/><rect x="3" y="1" width="1" height="1" fill="#fff"/><rect x="4" y="1" width="1" height="1" fill="#d8d4d0"/><rect x="5" y="1" width="1" height="1" fill="#fff"/><rect x="6" y="1" width="1" height="1" fill="#d8d4d0"/><rect x="7" y="1" width="1" height="1" fill="#fff"/><rect x="8" y="1" width="1" height="1" fill="#d8d4d0"/><rect x="9" y="1" width="1" height="1" fill="#000"/><rect x="10" y="1" width="1" height="1" fill="#000"/><rect x="11" y="1" width="1" height="1" fill="#fff"/><rect x="12" y="1" width="1" height="1" fill="#000"/><rect x="0" y="2" width="1" height="1" fill="#000"/><rect x="1" y="2" width="1" height="1" fill="#8f8262"/><rect x="2" y="2" width="1" height="1" fill="#000"/><rect x="3" y="2" width="1" height="1" fill="#d8d4d0"/><rect x="4" y="2" width="1" height="1" fill="#fff"/><rect x="5" y="2" width="1" height="1" fill="#d8d4d0"/><rect x="6" y="2" width="1" height="1" fill="#fff"/><rect x="7" y="2" width="1" height="1" fill="#d8d4d0"/><rect x="8" y="2" width="1" height="1" fill="#fff"/><rect x="9" y="2" width="1" height="1" fill="#000"/><rect x="10" y="2" width="1" height="1" fill="#000"/><rect x="11" y="2" width="1" height="1" fill="#8f8262"/><rect x="12" y="2" width="1" height="1" fill="#000"/><rect x="0" y="3" width="1" height="1" fill="#000"/><rect x="1" y="3" width="1" height="1" fill="#8f8262"/><rect x="2" y="3" width="1" height="1" fill="#000"/><rect x="3" y="3" width="1" height="1" fill="#fff"/><rect x="4" y="3" width="1" height="1" fill="#d8d4d0"/><rect x="5" y="3" width="1" height="1" fill="#fff"/><rect x="6" y="3" width="1" height="1" fill="#d8d4d0"/><rect x="7" y="3" width="1" height="1" fill="#fff"/><rect x="8" y="3" width="1" height="1" fill="#d8d4d0"/><rect x="9" y="3" width="1" height="1" fill="#000"/><rect x="10" y="3" width="1" height="1" fill="#000"/><rect x="11" y="3" width="1" height="1" fill="#8f8262"/><rect x="12" y="3" width="1" height="1" fill="#000"/><rect x="0" y="4" width="1" height="1" fill="#000"/><rect x="1" y="4" width="1" height="1" fill="#8f8262"/><rect x="2" y="4" width="1" height="1" fill="#000"/><rect x="3" y="4" width="1" height="1" fill="#d8d4d0"/><rect x="4" y="4" width="1" height="1" fill="#fff"/><rect x="5" y="4" width="1" height="1" fill="#d8d4d0"/><rect x="6" y="4" width="1" height="1" fill="#fff"/><rect x="7" y="4" width="1" height="1" fill="#d8d4d0"/><rect x="8" y="4" width="1" height="1" fill="#fff"/><rect x="9" y="4" width="1" height="1" fill="#000"/><rect x="10" y="4" width="1" height="1" fill="#000"/><rect x="11" y="4" width="1" height="1" fill="#8f8262"/><rect x="12" y="4" width="1" height="1" fill="#000"/><rect x="0" y="5" width="1" height="1" fill="#000"/><rect x="1" y="5" width="1" height="1" fill="#8f8262"/><rect x="2" y="5" width="1" height="1" fill="#000"/><rect x="3" y="5" width="1" height="1" fill="#000"/><rect x="4" y="5" width="1" height="1" fill="#000"/><rect x="5" y="5" width="1" height="1" fill="#000"/><rect x="6" y="5" width="1" height="1" fill="#000"/><rect x="7" y="5" width="1" height="1" fill="#000"/><rect x="8" y="5" width="1" height="1" fill="#000"/><rect x="9" y="5" width="1" height="1" fill="#000"/><rect x="10" y="5" width="1" height="1" fill="#000"/><rect x="11" y="5" width="1" height="1" fill="#8f8262"/><rect x="12" y="5" width="1" height="1" fill="#000"/><rect x="0" y="6" width="1" height="1" fill="#000"/><rect x="1" y="6" width="1" height="1" fill="#8f8262"/><rect x="2" y="6" width="1" height="1" fill="#8f8262"/><rect x="3" y="6" width="1" height="1" fill="#8f8262"/><rect x="4" y="6" width="1" height="1" fill="#8f8262"/><rect x="5" y="6" width="1" height="1" fill="#8f8262"/><rect x="6" y="6" width="1" height="1" fill="#8f8262"/><rect x="7" y="6" width="1" height="1" fill="#8f8262"/><rect x="8" y="6" width="1" height="1" fill="#8f8262"/><rect x="9" y="6" width="1" height="1" fill="#8f8262"/><rect x="10" y="6" width="1" height="1" fill="#8f8262"/><rect x="11" y="6" width="1" height="1" fill="#8f8262"/><rect x="12" y="6" width="1" height="1" fill="#000"/><rect x="0" y="7" width="1" height="1" fill="#000"/><rect x="1" y="7" width="1" height="1" fill="#8f8262"/><rect x="2" y="7" width="1" height="1" fill="#000"/><rect x="3" y="7" width="1" height="1" fill="#000"/><rect x="4" y="7" width="1" height="1" fill="#000"/><rect x="5" y="7" width="1" height="1" fill="#000"/><rect x="6" y="7" width="1" height="1" fill="#000"/><rect x="7" y="7" width="1" height="1" fill="#000"/><rect x="8" y="7" width="1" height="1" fill="#000"/><rect x="9" y="7" width="1" height="1" fill="#000"/><rect x="10" y="7" width="1" height="1" fill="#000"/><rect x="11" y="7" width="1" height="1" fill="#8f8262"/><rect x="12" y="7" width="1" height="1" fill="#000"/><rect x="0" y="8" width="1" height="1" fill="#000"/><rect x="1" y="8" width="1" height="1" fill="#8f8262"/><rect x="2" y="8" width="1" height="1" fill="#000"/><rect x="3" y="8" width="1" height="1" fill="#000"/><rect x="4" y="8" width="1" height="1" fill="#000"/><rect x="5" y="8" width="1" height="1" fill="#8f8262"/><rect x="6" y="8" width="1" height="1" fill="#000"/><rect x="7" y="8" width="1" height="1" fill="#000"/><rect x="8" y="8" width="1" height="1" fill="#d0ccc8"/><rect x="9" y="8" width="1" height="1" fill="#d0ccc8"/><rect x="10" y="8" width="1" height="1" fill="#000"/><rect x="11" y="8" width="1" height="1" fill="#8f8262"/><rect x="12" y="8" width="1" height="1" fill="#000"/><rect x="0" y="9" width="1" height="1" fill="#000"/><rect x="1" y="9" width="1" height="1" fill="#8f8262"/><rect x="2" y="9" width="1" height="1" fill="#000"/><rect x="3" y="9" width="1" height="1" fill="#000"/><rect x="4" y="9" width="1" height="1" fill="#8f8262"/><rect x="5" y="9" width="1" height="1" fill="#000"/><rect x="6" y="9" width="1" height="1" fill="#8f8262"/><rect x="7" y="9" width="1" height="1" fill="#000"/><rect x="8" y="9" width="1" height="1" fill="#d0ccc8"/><rect x="9" y="9" width="1" height="1" fill="#d0ccc8"/><rect x="10" y="9" width="1" height="1" fill="#000"/><rect x="11" y="9" width="1" height="1" fill="#8f8262"/><rect x="12" y="9" width="1" height="1" fill="#000"/><rect x="0" y="10" width="1" height="1" fill="#000"/><rect x="1" y="10" width="1" height="1" fill="#8f8262"/><rect x="2" y="10" width="1" height="1" fill="#000"/><rect x="3" y="10" width="1" height="1" fill="#000"/><rect x="4" y="10" width="1" height="1" fill="#000"/><rect x="5" y="10" width="1" height="1" fill="#8f8262"/><rect x="6" y="10" width="1" height="1" fill="#000"/><rect x="7" y="10" width="1" height="1" fill="#000"/><rect x="8" y="10" width="1" height="1" fill="#d0ccc8"/><rect x="9" y="10" width="1" height="1" fill="#d0ccc8"/><rect x="10" y="10" width="1" height="1" fill="#000"/><rect x="11" y="10" width="1" height="1" fill="#8f8262"/><rect x="12" y="10" width="1" height="1" fill="#000"/><rect x="0" y="11" width="1" height="1" fill="#000"/><rect x="1" y="11" width="1" height="1" fill="#8f8262"/><rect x="2" y="11" width="1" height="1" fill="#000"/><rect x="3" y="11" width="1" height="1" fill="#000"/><rect x="4" y="11" width="1" height="1" fill="#000"/><rect x="5" y="11" width="1" height="1" fill="#000"/><rect x="6" y="11" width="1" height="1" fill="#000"/><rect x="7" y="11" width="1" height="1" fill="#000"/><rect x="8" y="11" width="1" height="1" fill="#000"/><rect x="9" y="11" width="1" height="1" fill="#000"/><rect x="10" y="11" width="1" height="1" fill="#000"/><rect x="11" y="11" width="1" height="1" fill="#8f8262"/><rect x="12" y="11" width="1" height="1" fill="#000"/><rect x="0" y="12" width="1" height="1" fill="#000"/><rect x="1" y="12" width="1" height="1" fill="#000"/><rect x="2" y="12" width="1" height="1" fill="#000"/><rect x="3" y="12" width="1" height="1" fill="#000"/><rect x="4" y="12" width="1" height="1" fill="#000"/><rect x="5" y="12" width="1" height="1" fill="#000"/><rect x="6" y="12" width="1" height="1" fill="#000"/><rect x="7" y="12" width="1" height="1" fill="#000"/><rect x="8" y="12" width="1" height="1" fill="#000"/><rect x="9" y="12" width="1" height="1" fill="#000"/><rect x="10" y="12" width="1" height="1" fill="#000"/><rect x="11" y="12" width="1" height="1" fill="#000"/><rect x="12" y="12" width="1" height="1" fill="#000"/></svg>
<svg class="a" style="left:269px;top:187px" width="11" height="11" shape-rendering="crispEdges"><rect x="0" y="0" width="1" height="1" fill="#000"/><rect x="1" y="0" width="1" height="1" fill="#000"/><rect x="2" y="0" width="1" height="1" fill="#000"/><rect x="3" y="0" width="1" height="1" fill="#000"/><rect x="4" y="0" width="1" height="1" fill="#000"/><rect x="5" y="0" width="1" height="1" fill="#000"/><rect x="6" y="0" width="1" height="1" fill="#000"/><rect x="7" y="0" width="1" height="1" fill="#000"/><rect x="8" y="0" width="1" height="1" fill="#000"/><rect x="9" y="0" width="1" height="1" fill="#000"/><rect x="10" y="0" width="1" height="1" fill="#000"/><rect x="0" y="1" width="1" height="1" fill="#000"/><rect x="1" y="1" width="1" height="1" fill="#8f8262"/><rect x="2" y="1" width="1" height="1" fill="#000"/><rect x="3" y="1" width="1" height="1" fill="#fff"/><rect x="4" y="1" width="1" height="1" fill="#d8d4d0"/><rect x="5" y="1" width="1" height="1" fill="#fff"/><rect x="6" y="1" width="1" height="1" fill="#d8d4d0"/><rect x="7" y="1" width="1" height="1" fill="#fff"/><rect x="8" y="1" width="1" height="1" fill="#000"/><rect x="9" y="1" width="1" height="1" fill="#fff"/><rect x="10" y="1" width="1" height="1" fill="#000"/><rect x="0" y="2" width="1" height="1" fill="#000"/><rect x="1" y="2" width="1" height="1" fill="#8f8262"/><rect x="2" y="2" width="1" height="1" fill="#000"/><rect x="3" y="2" width="1" height="1" fill="#d8d4d0"/><rect x="4" y="2" width="1" height="1" fill="#fff"/><rect x="5" y="2" width="1" height="1" fill="#d8d4d0"/><rect x="6" y="2" width="1" height="1" fill="#fff"/><rect x="7" y="2" width="1" height="1" fill="#d8d4d0"/><rect x="8" y="2" width="1" height="1" fill="#000"/><rect x="9" y="2" width="1" height="1" fill="#8f8262"/><rect x="10" y="2" width="1" height="1" fill="#000"/><rect x="0" y="3" width="1" height="1" fill="#000"/><rect x="1" y="3" width="1" height="1" fill="#8f8262"/><rect x="2" y="3" width="1" height="1" fill="#000"/><rect x="3" y="3" width="1" height="1" fill="#fff"/><rect x="4" y="3" width="1" height="1" fill="#d8d4d0"/><rect x="5" y="3" width="1" height="1" fill="#fff"/><rect x="6" y="3" width="1" height="1" fill="#d8d4d0"/><rect x="7" y="3" width="1" height="1" fill="#fff"/><rect x="8" y="3" width="1" height="1" fill="#000"/><rect x="9" y="3" width="1" height="1" fill="#8f8262"/><rect x="10" y="3" width="1" height="1" fill="#000"/><rect x="0" y="4" width="1" height="1" fill="#000"/><rect x="1" y="4" width="1" height="1" fill="#8f8262"/><rect x="2" y="4" width="1" height="1" fill="#000"/><rect x="3" y="4" width="1" height="1" fill="#000"/><rect x="4" y="4" width="1" height="1" fill="#000"/><rect x="5" y="4" width="1" height="1" fill="#000"/><rect x="6" y="4" width="1" height="1" fill="#000"/><rect x="7" y="4" width="1" height="1" fill="#000"/><rect x="8" y="4" width="1" height="1" fill="#000"/><rect x="9" y="4" width="1" height="1" fill="#8f8262"/><rect x="10" y="4" width="1" height="1" fill="#000"/><rect x="0" y="5" width="1" height="1" fill="#000"/><rect x="1" y="5" width="1" height="1" fill="#8f8262"/><rect x="2" y="5" width="1" height="1" fill="#8f8262"/><rect x="3" y="5" width="1" height="1" fill="#8f8262"/><rect x="4" y="5" width="1" height="1" fill="#8f8262"/><rect x="5" y="5" width="1" height="1" fill="#8f8262"/><rect x="6" y="5" width="1" height="1" fill="#8f8262"/><rect x="7" y="5" width="1" height="1" fill="#8f8262"/><rect x="8" y="5" width="1" height="1" fill="#8f8262"/><rect x="9" y="5" width="1" height="1" fill="#8f8262"/><rect x="10" y="5" width="1" height="1" fill="#000"/><rect x="0" y="6" width="1" height="1" fill="#000"/><rect x="1" y="6" width="1" height="1" fill="#8f8262"/><rect x="2" y="6" width="1" height="1" fill="#000"/><rect x="3" y="6" width="1" height="1" fill="#000"/><rect x="4" y="6" width="1" height="1" fill="#000"/><rect x="5" y="6" width="1" height="1" fill="#000"/><rect x="6" y="6" width="1" height="1" fill="#000"/><rect x="7" y="6" width="1" height="1" fill="#000"/><rect x="8" y="6" width="1" height="1" fill="#000"/><rect x="9" y="6" width="1" height="1" fill="#8f8262"/><rect x="10" y="6" width="1" height="1" fill="#000"/><rect x="0" y="7" width="1" height="1" fill="#000"/><rect x="1" y="7" width="1" height="1" fill="#8f8262"/><rect x="2" y="7" width="1" height="1" fill="#000"/><rect x="3" y="7" width="1" height="1" fill="#8f8262"/><rect x="4" y="7" width="1" height="1" fill="#8f8262"/><rect x="5" y="7" width="1" height="1" fill="#000"/><rect x="6" y="7" width="1" height="1" fill="#000"/><rect x="7" y="7" width="1" height="1" fill="#d0ccc8"/><rect x="8" y="7" width="1" height="1" fill="#000"/><rect x="9" y="7" width="1" height="1" fill="#8f8262"/><rect x="10" y="7" width="1" height="1" fill="#000"/><rect x="0" y="8" width="1" height="1" fill="#000"/><rect x="1" y="8" width="1" height="1" fill="#8f8262"/><rect x="2" y="8" width="1" height="1" fill="#000"/><rect x="3" y="8" width="1" height="1" fill="#8f8262"/><rect x="4" y="8" width="1" height="1" fill="#8f8262"/><rect x="5" y="8" width="1" height="1" fill="#000"/><rect x="6" y="8" width="1" height="1" fill="#000"/><rect x="7" y="8" width="1" height="1" fill="#d0ccc8"/><rect x="8" y="8" width="1" height="1" fill="#000"/><rect x="9" y="8" width="1" height="1" fill="#8f8262"/><rect x="10" y="8" width="1" height="1" fill="#000"/><rect x="0" y="9" width="1" height="1" fill="#000"/><rect x="1" y="9" width="1" height="1" fill="#8f8262"/><rect x="2" y="9" width="1" height="1" fill="#000"/><rect x="3" y="9" width="1" height="1" fill="#000"/><rect x="4" y="9" width="1" height="1" fill="#000"/><rect x="5" y="9" width="1" height="1" fill="#000"/><rect x="6" y="9" width="1" height="1" fill="#000"/><rect x="7" y="9" width="1" height="1" fill="#000"/><rect x="8" y="9" width="1" height="1" fill="#000"/><rect x="9" y="9" width="1" height="1" fill="#8f8262"/><rect x="10" y="9" width="1" height="1" fill="#000"/><rect x="0" y="10" width="1" height="1" fill="#000"/><rect x="1" y="10" width="1" height="1" fill="#000"/><rect x="2" y="10" width="1" height="1" fill="#000"/><rect x="3" y="10" width="1" height="1" fill="#000"/><rect x="4" y="10" width="1" height="1" fill="#000"/><rect x="5" y="10" width="1" height="1" fill="#000"/><rect x="6" y="10" width="1" height="1" fill="#000"/><rect x="7" y="10" width="1" height="1" fill="#000"/><rect x="8" y="10" width="1" height="1" fill="#000"/><rect x="9" y="10" width="1" height="1" fill="#000"/><rect x="10" y="10" width="1" height="1" fill="#000"/></svg>
<svg class="a" style="left:274px;top:189px" width="11" height="11" shape-rendering="crispEdges"><rect x="0" y="0" width="1" height="1" fill="#000"/><rect x="1" y="0" width="1" height="1" fill="#000"/><rect x="2" y="0" width="1" height="1" fill="#000"/><rect x="3" y="0" width="1" height="1" fill="#000"/><rect x="4" y="0" width="1" height="1" fill="#000"/><rect x="5" y="0" width="1" height="1" fill="#000"/><rect x="6" y="0" width="1" height="1" fill="#000"/><rect x="7" y="0" width="1" height="1" fill="#000"/><rect x="8" y="0" width="1" height="1" fill="#000"/><rect x="9" y="0" width="1" height="1" fill="#000"/><rect x="10" y="0" width="1" height="1" fill="#000"/><rect x="0" y="1" width="1" height="1" fill="#000"/><rect x="1" y="1" width="1" height="1" fill="#8f8262"/><rect x="2" y="1" width="1" height="1" fill="#000"/><rect x="3" y="1" width="1" height="1" fill="#fff"/><rect x="4" y="1" width="1" height="1" fill="#d8d4d0"/><rect x="5" y="1" width="1" height="1" fill="#fff"/><rect x="6" y="1" width="1" height="1" fill="#d8d4d0"/><rect x="7" y="1" width="1" height="1" fill="#fff"/><rect x="8" y="1" width="1" height="1" fill="#000"/><rect x="9" y="1" width="1" height="1" fill="#fff"/><rect x="10" y="1" width="1" height="1" fill="#000"/><rect x="0" y="2" width="1" height="1" fill="#000"/><rect x="1" y="2" width="1" height="1" fill="#8f8262"/><rect x="2" y="2" width="1" height="1" fill="#000"/><rect x="3" y="2" width="1" height="1" fill="#d8d4d0"/><rect x="4" y="2" width="1" height="1" fill="#fff"/><rect x="5" y="2" width="1" height="1" fill="#d8d4d0"/><rect x="6" y="2" width="1" height="1" fill="#fff"/><rect x="7" y="2" width="1" height="1" fill="#d8d4d0"/><rect x="8" y="2" width="1" height="1" fill="#000"/><rect x="9" y="2" width="1" height="1" fill="#8f8262"/><rect x="10" y="2" width="1" height="1" fill="#000"/><rect x="0" y="3" width="1" height="1" fill="#000"/><rect x="1" y="3" width="1" height="1" fill="#8f8262"/><rect x="2" y="3" width="1" height="1" fill="#000"/><rect x="3" y="3" width="1" height="1" fill="#fff"/><rect x="4" y="3" width="1" height="1" fill="#d8d4d0"/><rect x="5" y="3" width="1" height="1" fill="#fff"/><rect x="6" y="3" width="1" height="1" fill="#d8d4d0"/><rect x="7" y="3" width="1" height="1" fill="#fff"/><rect x="8" y="3" width="1" height="1" fill="#000"/><rect x="9" y="3" width="1" height="1" fill="#8f8262"/><rect x="10" y="3" width="1" height="1" fill="#000"/><rect x="0" y="4" width="1" height="1" fill="#000"/><rect x="1" y="4" width="1" height="1" fill="#8f8262"/><rect x="2" y="4" width="1" height="1" fill="#000"/><rect x="3" y="4" width="1" height="1" fill="#000"/><rect x="4" y="4" width="1" height="1" fill="#000"/><rect x="5" y="4" width="1" height="1" fill="#000"/><rect x="6" y="4" width="1" height="1" fill="#000"/><rect x="7" y="4" width="1" height="1" fill="#000"/><rect x="8" y="4" width="1" height="1" fill="#000"/><rect x="9" y="4" width="1" height="1" fill="#8f8262"/><rect x="10" y="4" width="1" height="1" fill="#000"/><rect x="0" y="5" width="1" height="1" fill="#000"/><rect x="1" y="5" width="1" height="1" fill="#8f8262"/><rect x="2" y="5" width="1" height="1" fill="#8f8262"/><rect x="3" y="5" width="1" height="1" fill="#8f8262"/><rect x="4" y="5" width="1" height="1" fill="#8f8262"/><rect x="5" y="5" width="1" height="1" fill="#8f8262"/><rect x="6" y="5" width="1" height="1" fill="#8f8262"/><rect x="7" y="5" width="1" height="1" fill="#8f8262"/><rect x="8" y="5" width="1" height="1" fill="#8f8262"/><rect x="9" y="5" width="1" height="1" fill="#8f8262"/><rect x="10" y="5" width="1" height="1" fill="#000"/><rect x="0" y="6" width="1" height="1" fill="#000"/><rect x="1" y="6" width="1" height="1" fill="#8f8262"/><rect x="2" y="6" width="1" height="1" fill="#000"/><rect x="3" y="6" width="1" height="1" fill="#000"/><rect x="4" y="6" width="1" height="1" fill="#000"/><rect x="5" y="6" width="1" height="1" fill="#000"/><rect x="6" y="6" width="1" height="1" fill="#000"/><rect x="7" y="6" width="1" height="1" fill="#000"/><rect x="8" y="6" width="1" height="1" fill="#000"/><rect x="9" y="6" width="1" height="1" fill="#8f8262"/><rect x="10" y="6" width="1" height="1" fill="#000"/><rect x="0" y="7" width="1" height="1" fill="#000"/><rect x="1" y="7" width="1" height="1" fill="#8f8262"/><rect x="2" y="7" width="1" height="1" fill="#000"/><rect x="3" y="7" width="1" height="1" fill="#8f8262"/><rect x="4" y="7" width="1" height="1" fill="#8f8262"/><rect x="5" y="7" width="1" height="1" fill="#000"/><rect x="6" y="7" width="1" height="1" fill="#000"/><rect x="7" y="7" width="1" height="1" fill="#d0ccc8"/><rect x="8" y="7" width="1" height="1" fill="#000"/><rect x="9" y="7" width="1" height="1" fill="#8f8262"/><rect x="10" y="7" width="1" height="1" fill="#000"/><rect x="0" y="8" width="1" height="1" fill="#000"/><rect x="1" y="8" width="1" height="1" fill="#8f8262"/><rect x="2" y="8" width="1" height="1" fill="#000"/><rect x="3" y="8" width="1" height="1" fill="#8f8262"/><rect x="4" y="8" width="1" height="1" fill="#8f8262"/><rect x="5" y="8" width="1" height="1" fill="#000"/><rect x="6" y="8" width="1" height="1" fill="#000"/><rect x="7" y="8" width="1" height="1" fill="#d0ccc8"/><rect x="8" y="8" width="1" height="1" fill="#000"/><rect x="9" y="8" width="1" height="1" fill="#8f8262"/><rect x="10" y="8" width="1" height="1" fill="#000"/><rect x="0" y="9" width="1" height="1" fill="#000"/><rect x="1" y="9" width="1" height="1" fill="#8f8262"/><rect x="2" y="9" width="1" height="1" fill="#000"/><rect x="3" y="9" width="1" height="1" fill="#000"/><rect x="4" y="9" width="1" height="1" fill="#000"/><rect x="5" y="9" width="1" height="1" fill="#000"/><rect x="6" y="9" width="1" height="1" fill="#000"/><rect x="7" y="9" width="1" height="1" fill="#000"/><rect x="8" y="9" width="1" height="1" fill="#000"/><rect x="9" y="9" width="1" height="1" fill="#8f8262"/><rect x="10" y="9" width="1" height="1" fill="#000"/><rect x="0" y="10" width="1" height="1" fill="#000"/><rect x="1" y="10" width="1" height="1" fill="#000"/><rect x="2" y="10" width="1" height="1" fill="#000"/><rect x="3" y="10" width="1" height="1" fill="#000"/><rect x="4" y="10" width="1" height="1" fill="#000"/><rect x="5" y="10" width="1" height="1" fill="#000"/><rect x="6" y="10" width="1" height="1" fill="#000"/><rect x="7" y="10" width="1" height="1" fill="#000"/><rect x="8" y="10" width="1" height="1" fill="#000"/><rect x="9" y="10" width="1" height="1" fill="#000"/><rect x="10" y="10" width="1" height="1" fill="#000"/></svg>
<div class="a" style="left:291px;top:182px;width:1px;height:23px;background:#bdb7b0"></div>
<div class="a" style="left:292px;top:182px;width:1px;height:23px;background:#fbf9f6"></div>
<svg class="a" style="left:303px;top:186px" width="10" height="15" shape-rendering="crispEdges"><rect x="2" y="0" width="1" height="1" fill="#a39e99"/><rect x="6" y="0" width="1" height="1" fill="#a39e99"/><rect x="2" y="1" width="1" height="1" fill="#a39e99"/><rect x="6" y="1" width="1" height="1" fill="#a39e99"/><rect x="2" y="2" width="1" height="1" fill="#a39e99"/><rect x="3" y="2" width="1" height="1" fill="#a39e99"/><rect x="5" y="2" width="1" height="1" fill="#a39e99"/><rect x="6" y="2" width="1" height="1" fill="#a39e99"/><rect x="3" y="3" width="1" height="1" fill="#a39e99"/><rect x="5" y="3" width="1" height="1" fill="#a39e99"/><rect x="3" y="4" width="1" height="1" fill="#a39e99"/><rect x="4" y="4" width="1" height="1" fill="#a39e99"/><rect x="5" y="4" width="1" height="1" fill="#a39e99"/><rect x="4" y="5" width="1" height="1" fill="#a39e99"/><rect x="3" y="6" width="1" height="1" fill="#a39e99"/><rect x="4" y="6" width="1" height="1" fill="#a39e99"/><rect x="5" y="6" width="1" height="1" fill="#a39e99"/><rect x="3" y="7" width="1" height="1" fill="#a39e99"/><rect x="5" y="7" width="1" height="1" fill="#a39e99"/><rect x="2" y="8" width="1" height="1" fill="#a39e99"/><rect x="3" y="8" width="1" height="1" fill="#a39e99"/><rect x="5" y="8" width="1" height="1" fill="#a39e99"/><rect x="6" y="8" width="1" height="1" fill="#a39e99"/><rect x="1" y="9" width="1" height="1" fill="#a39e99"/><rect x="2" y="9" width="1" height="1" fill="#a39e99"/><rect x="3" y="9" width="1" height="1" fill="#a39e99"/><rect x="5" y="9" width="1" height="1" fill="#a39e99"/><rect x="6" y="9" width="1" height="1" fill="#a39e99"/><rect x="7" y="9" width="1" height="1" fill="#a39e99"/><rect x="0" y="10" width="1" height="1" fill="#a39e99"/><rect x="1" y="10" width="1" height="1" fill="#a39e99"/><rect x="3" y="10" width="1" height="1" fill="#a39e99"/><rect x="5" y="10" width="1" height="1" fill="#a39e99"/><rect x="7" y="10" width="1" height="1" fill="#a39e99"/><rect x="8" y="10" width="1" height="1" fill="#a39e99"/><rect x="0" y="11" width="1" height="1" fill="#a39e99"/><rect x="3" y="11" width="1" height="1" fill="#a39e99"/><rect x="5" y="11" width="1" height="1" fill="#a39e99"/><rect x="8" y="11" width="1" height="1" fill="#a39e99"/><rect x="0" y="12" width="1" height="1" fill="#a39e99"/><rect x="3" y="12" width="1" height="1" fill="#a39e99"/><rect x="5" y="12" width="1" height="1" fill="#a39e99"/><rect x="8" y="12" width="1" height="1" fill="#a39e99"/><rect x="0" y="13" width="1" height="1" fill="#a39e99"/><rect x="1" y="13" width="1" height="1" fill="#a39e99"/><rect x="3" y="13" width="1" height="1" fill="#a39e99"/><rect x="5" y="13" width="1" height="1" fill="#a39e99"/><rect x="7" y="13" width="1" height="1" fill="#a39e99"/><rect x="8" y="13" width="1" height="1" fill="#a39e99"/><rect x="1" y="14" width="1" height="1" fill="#a39e99"/><rect x="2" y="14" width="1" height="1" fill="#a39e99"/><rect x="6" y="14" width="1" height="1" fill="#a39e99"/><rect x="7" y="14" width="1" height="1" fill="#a39e99"/></svg>
<svg class="a" style="left:323px;top:186px" width="17" height="15"><path d="M0.5 0.5 H7 L9 2.5 V11 H0.5Z" fill="#f4f0eb" stroke="#a39e99" stroke-width="1.2"/><path d="M2 3 H5 M2 5 H5 M2 7 H5" stroke="#a39e99"/><path d="M6.5 4.5 H13 L15.5 7 V14.5 H6.5Z" fill="#f4f0eb" stroke="#a39e99" stroke-width="1.2"/><path d="M8 8 H14 M8 10 H14 M8 12 H14" stroke="#a39e99"/></svg>
<svg class="a" style="left:347px;top:187px" width="15" height="12" shape-rendering="crispEdges"><rect x="4" y="0" width="1" height="1" fill="#000"/><rect x="5" y="0" width="1" height="1" fill="#000"/><rect x="6" y="0" width="1" height="1" fill="#000"/><rect x="7" y="0" width="1" height="1" fill="#000"/><rect x="8" y="0" width="1" height="1" fill="#000"/><rect x="4" y="1" width="1" height="1" fill="#000"/><rect x="5" y="1" width="1" height="1" fill="#f0e000"/><rect x="6" y="1" width="1" height="1" fill="#f0e000"/><rect x="7" y="1" width="1" height="1" fill="#f0e000"/><rect x="8" y="1" width="1" height="1" fill="#000"/><rect x="0" y="2" width="1" height="1" fill="#000"/><rect x="1" y="2" width="1" height="1" fill="#000"/><rect x="2" y="2" width="1" height="1" fill="#000"/><rect x="3" y="2" width="1" height="1" fill="#000"/><rect x="4" y="2" width="1" height="1" fill="#f0e000"/><rect x="5" y="2" width="1" height="1" fill="#f0e000"/><rect x="6" y="2" width="1" height="1" fill="#f0e000"/><rect x="7" y="2" width="1" height="1" fill="#f0e000"/><rect x="8" y="2" width="1" height="1" fill="#f0e000"/><rect x="9" y="2" width="1" height="1" fill="#000"/><rect x="10" y="2" width="1" height="1" fill="#000"/><rect x="11" y="2" width="1" height="1" fill="#000"/><rect x="12" y="2" width="1" height="1" fill="#000"/><rect x="0" y="3" width="1" height="1" fill="#000"/><rect x="1" y="3" width="1" height="1" fill="#8c8880"/><rect x="2" y="3" width="1" height="1" fill="#c8c4bc"/><rect x="3" y="3" width="1" height="1" fill="#000"/><rect x="4" y="3" width="1" height="1" fill="#000"/><rect x="5" y="3" width="1" height="1" fill="#000"/><rect x="6" y="3" width="1" height="1" fill="#000"/><rect x="7" y="3" width="1" height="1" fill="#000"/><rect x="8" y="3" width="1" height="1" fill="#000"/><rect x="9" y="3" width="1" height="1" fill="#000"/><rect x="10" y="3" width="1" height="1" fill="#c8c4bc"/><rect x="11" y="3" width="1" height="1" fill="#8c8880"/><rect x="12" y="3" width="1" height="1" fill="#000"/><rect x="0" y="4" width="1" height="1" fill="#000"/><rect x="1" y="4" width="1" height="1" fill="#c8c4bc"/><rect x="2" y="4" width="1" height="1" fill="#8c8880"/><rect x="3" y="4" width="1" height="1" fill="#c8c4bc"/><rect x="4" y="4" width="1" height="1" fill="#8c8880"/><rect x="5" y="4" width="1" height="1" fill="#c8c4bc"/><rect x="6" y="4" width="1" height="1" fill="#8c8880"/><rect x="7" y="4" width="1" height="1" fill="#c8c4bc"/><rect x="8" y="4" width="1" height="1" fill="#8c8880"/><rect x="9" y="4" width="1" height="1" fill="#c8c4bc"/><rect x="10" y="4" width="1" height="1" fill="#8c8880"/><rect x="11" y="4" width="1" height="1" fill="#c8c4bc"/><rect x="12" y="4" width="1" height="1" fill="#000"/><rect x="0" y="5" width="1" height="1" fill="#000"/><rect x="1" y="5" width="1" height="1" fill="#8c8880"/><rect x="2" y="5" width="1" height="1" fill="#c8c4bc"/><rect x="3" y="5" width="1" height="1" fill="#8c8880"/><rect x="4" y="5" width="1" height="1" fill="#c8c4bc"/><rect x="5" y="5" width="1" height="1" fill="#8c8880"/><rect x="6" y="5" width="1" height="1" fill="#000090"/><rect x="7" y="5" width="1" height="1" fill="#000090"/><rect x="8" y="5" width="1" height="1" fill="#000090"/><rect x="9" y="5" width="1" height="1" fill="#000090"/><rect x="10" y="5" width="1" height="1" fill="#000090"/><rect x="11" y="5" width="1" height="1" fill="#000090"/><rect x="12" y="5" width="1" height="1" fill="#000090"/><rect x="13" y="5" width="1" height="1" fill="#000090"/><rect x="14" y="5" width="1" height="1" fill="#000090"/><rect x="0" y="6" width="1" height="1" fill="#000"/><rect x="1" y="6" width="1" height="1" fill="#c8c4bc"/><rect x="2" y="6" width="1" height="1" fill="#8c8880"/><rect x="3" y="6" width="1" height="1" fill="#c8c4bc"/><rect x="4" y="6" width="1" height="1" fill="#8c8880"/><rect x="5" y="6" width="1" height="1" fill="#c8c4bc"/><rect x="6" y="6" width="1" height="1" fill="#000090"/><rect x="7" y="6" width="1" height="1" fill="#fff"/><rect x="8" y="6" width="1" height="1" fill="#fff"/><rect x="9" y="6" width="1" height="1" fill="#fff"/><rect x="10" y="6" width="1" height="1" fill="#fff"/><rect x="11" y="6" width="1" height="1" fill="#fff"/><rect x="12" y="6" width="1" height="1" fill="#fff"/><rect x="13" y="6" width="1" height="1" fill="#fff"/><rect x="14" y="6" width="1" height="1" fill="#000090"/><rect x="0" y="7" width="1" height="1" fill="#000"/><rect x="1" y="7" width="1" height="1" fill="#8c8880"/><rect x="2" y="7" width="1" height="1" fill="#c8c4bc"/><rect x="3" y="7" width="1" height="1" fill="#8c8880"/><rect x="4" y="7" width="1" height="1" fill="#c8c4bc"/><rect x="5" y="7" width="1" height="1" fill="#8c8880"/><rect x="6" y="7" width="1" height="1" fill="#000090"/><rect x="7" y="7" width="1" height="1" fill="#fff"/><rect x="8" y="7" width="1" height="1" fill="#000"/><rect x="9" y="7" width="1" height="1" fill="#000"/><rect x="10" y="7" width="1" height="1" fill="#fff"/><rect x="11" y="7" width="1" height="1" fill="#fff"/><rect x="12" y="7" width="1" height="1" fill="#fff"/><rect x="13" y="7" width="1" height="1" fill="#fff"/><rect x="14" y="7" width="1" height="1" fill="#000090"/><rect x="0" y="8" width="1" height="1" fill="#000"/><rect x="1" y="8" width="1" height="1" fill="#c8c4bc"/><rect x="2" y="8" width="1" height="1" fill="#8c8880"/><rect x="3" y="8" width="1" height="1" fill="#c8c4bc"/><rect x="4" y="8" width="1" height="1" fill="#8c8880"/><rect x="5" y="8" width="1" height="1" fill="#c8c4bc"/><rect x="6" y="8" width="1" height="1" fill="#000090"/><rect x="7" y="8" width="1" height="1" fill="#fff"/><rect x="8" y="8" width="1" height="1" fill="#fff"/><rect x="9" y="8" width="1" height="1" fill="#fff"/><rect x="10" y="8" width="1" height="1" fill="#fff"/><rect x="11" y="8" width="1" height="1" fill="#fff"/><rect x="12" y="8" width="1" height="1" fill="#fff"/><rect x="13" y="8" width="1" height="1" fill="#fff"/><rect x="14" y="8" width="1" height="1" fill="#000090"/><rect x="0" y="9" width="1" height="1" fill="#000"/><rect x="1" y="9" width="1" height="1" fill="#8c8880"/><rect x="2" y="9" width="1" height="1" fill="#c8c4bc"/><rect x="3" y="9" width="1" height="1" fill="#8c8880"/><rect x="4" y="9" width="1" height="1" fill="#c8c4bc"/><rect x="5" y="9" width="1" height="1" fill="#8c8880"/><rect x="6" y="9" width="1" height="1" fill="#000090"/><rect x="7" y="9" width="1" height="1" fill="#fff"/><rect x="8" y="9" width="1" height="1" fill="#000"/><rect x="9" y="9" width="1" height="1" fill="#000"/><rect x="10" y="9" width="1" height="1" fill="#000"/><rect x="11" y="9" width="1" height="1" fill="#000"/><rect x="12" y="9" width="1" height="1" fill="#000"/><rect x="13" y="9" width="1" height="1" fill="#fff"/><rect x="14" y="9" width="1" height="1" fill="#000090"/><rect x="0" y="10" width="1" height="1" fill="#000"/><rect x="1" y="10" width="1" height="1" fill="#c8c4bc"/><rect x="2" y="10" width="1" height="1" fill="#8c8880"/><rect x="3" y="10" width="1" height="1" fill="#c8c4bc"/><rect x="4" y="10" width="1" height="1" fill="#8c8880"/><rect x="5" y="10" width="1" height="1" fill="#c8c4bc"/><rect x="6" y="10" width="1" height="1" fill="#000090"/><rect x="7" y="10" width="1" height="1" fill="#fff"/><rect x="8" y="10" width="1" height="1" fill="#fff"/><rect x="9" y="10" width="1" height="1" fill="#fff"/><rect x="10" y="10" width="1" height="1" fill="#fff"/><rect x="11" y="10" width="1" height="1" fill="#fff"/><rect x="12" y="10" width="1" height="1" fill="#fff"/><rect x="13" y="10" width="1" height="1" fill="#fff"/><rect x="14" y="10" width="1" height="1" fill="#000090"/><rect x="0" y="11" width="1" height="1" fill="#000"/><rect x="1" y="11" width="1" height="1" fill="#000"/><rect x="2" y="11" width="1" height="1" fill="#000"/><rect x="3" y="11" width="1" height="1" fill="#000"/><rect x="4" y="11" width="1" height="1" fill="#000"/><rect x="5" y="11" width="1" height="1" fill="#000"/><rect x="6" y="11" width="1" height="1" fill="#000090"/><rect x="7" y="11" width="1" height="1" fill="#000090"/><rect x="8" y="11" width="1" height="1" fill="#000090"/><rect x="9" y="11" width="1" height="1" fill="#000090"/><rect x="10" y="11" width="1" height="1" fill="#000090"/><rect x="11" y="11" width="1" height="1" fill="#000090"/><rect x="12" y="11" width="1" height="1" fill="#000090"/><rect x="13" y="11" width="1" height="1" fill="#000090"/><rect x="14" y="11" width="1" height="1" fill="#000090"/></svg>
<div class="a" style="left:368px;top:182px;width:1px;height:23px;background:#bdb7b0"></div>
<div class="a" style="left:369px;top:182px;width:1px;height:23px;background:#fbf9f6"></div>
<svg class="a" style="left:378px;top:189px" width="15" height="9" shape-rendering="crispEdges"><rect x="0" y="0" width="1" height="1" fill="#000090"/><rect x="1" y="0" width="1" height="1" fill="#000090"/><rect x="2" y="0" width="1" height="1" fill="#000090"/><rect x="3" y="0" width="1" height="1" fill="#000090"/><rect x="4" y="0" width="1" height="1" fill="#000090"/><rect x="5" y="0" width="1" height="1" fill="#000090"/><rect x="6" y="0" width="1" height="1" fill="#000090"/><rect x="7" y="0" width="1" height="1" fill="#000090"/><rect x="8" y="0" width="1" height="1" fill="#000090"/><rect x="9" y="0" width="1" height="1" fill="#000090"/><rect x="10" y="0" width="1" height="1" fill="#000090"/><rect x="11" y="0" width="1" height="1" fill="#000090"/><rect x="12" y="0" width="1" height="1" fill="#000090"/><rect x="0" y="1" width="1" height="1" fill="#000090"/><rect x="1" y="1" width="1" height="1" fill="#000090"/><rect x="2" y="1" width="1" height="1" fill="#000090"/><rect x="3" y="1" width="1" height="1" fill="#000090"/><rect x="4" y="1" width="1" height="1" fill="#000090"/><rect x="5" y="1" width="1" height="1" fill="#000090"/><rect x="6" y="1" width="1" height="1" fill="#000090"/><rect x="7" y="1" width="1" height="1" fill="#000090"/><rect x="8" y="1" width="1" height="1" fill="#000090"/><rect x="9" y="1" width="1" height="1" fill="#000090"/><rect x="10" y="1" width="1" height="1" fill="#000090"/><rect x="11" y="1" width="1" height="1" fill="#000090"/><rect x="12" y="1" width="1" height="1" fill="#000090"/><rect x="13" y="1" width="1" height="1" fill="#000090"/><rect x="11" y="2" width="1" height="1" fill="#000090"/><rect x="12" y="2" width="1" height="1" fill="#000090"/><rect x="13" y="2" width="1" height="1" fill="#000090"/><rect x="14" y="2" width="1" height="1" fill="#000090"/><rect x="2" y="3" width="1" height="1" fill="#000090"/><rect x="11" y="3" width="1" height="1" fill="#000090"/><rect x="12" y="3" width="1" height="1" fill="#000090"/><rect x="13" y="3" width="1" height="1" fill="#000090"/><rect x="14" y="3" width="1" height="1" fill="#000090"/><rect x="1" y="4" width="1" height="1" fill="#000090"/><rect x="2" y="4" width="1" height="1" fill="#000090"/><rect x="11" y="4" width="1" height="1" fill="#000090"/><rect x="12" y="4" width="1" height="1" fill="#000090"/><rect x="13" y="4" width="1" height="1" fill="#000090"/><rect x="0" y="5" width="1" height="1" fill="#000090"/><rect x="1" y="5" width="1" height="1" fill="#000090"/><rect x="2" y="5" width="1" height="1" fill="#000090"/><rect x="3" y="5" width="1" height="1" fill="#000090"/><rect x="4" y="5" width="1" height="1" fill="#000090"/><rect x="5" y="5" width="1" height="1" fill="#000090"/><rect x="6" y="5" width="1" height="1" fill="#000090"/><rect x="7" y="5" width="1" height="1" fill="#000090"/><rect x="8" y="5" width="1" height="1" fill="#000090"/><rect x="9" y="5" width="1" height="1" fill="#000090"/><rect x="10" y="5" width="1" height="1" fill="#000090"/><rect x="11" y="5" width="1" height="1" fill="#000090"/><rect x="12" y="5" width="1" height="1" fill="#000090"/><rect x="13" y="5" width="1" height="1" fill="#000090"/><rect x="1" y="6" width="1" height="1" fill="#000090"/><rect x="2" y="6" width="1" height="1" fill="#000090"/><rect x="3" y="6" width="1" height="1" fill="#000090"/><rect x="4" y="6" width="1" height="1" fill="#000090"/><rect x="5" y="6" width="1" height="1" fill="#000090"/><rect x="6" y="6" width="1" height="1" fill="#000090"/><rect x="7" y="6" width="1" height="1" fill="#000090"/><rect x="8" y="6" width="1" height="1" fill="#000090"/><rect x="9" y="6" width="1" height="1" fill="#000090"/><rect x="10" y="6" width="1" height="1" fill="#000090"/><rect x="11" y="6" width="1" height="1" fill="#000090"/><rect x="12" y="6" width="1" height="1" fill="#000090"/><rect x="2" y="7" width="1" height="1" fill="#000090"/><rect x="3" y="7" width="1" height="1" fill="#000090"/><rect x="3" y="8" width="1" height="1" fill="#000090"/></svg>
<svg class="a" style="left:401px;top:189px" width="15" height="9" shape-rendering="crispEdges"><rect x="0" y="0" width="1" height="1" fill="#a39e99"/><rect x="1" y="0" width="1" height="1" fill="#a39e99"/><rect x="2" y="0" width="1" height="1" fill="#a39e99"/><rect x="3" y="0" width="1" height="1" fill="#a39e99"/><rect x="4" y="0" width="1" height="1" fill="#a39e99"/><rect x="5" y="0" width="1" height="1" fill="#a39e99"/><rect x="6" y="0" width="1" height="1" fill="#a39e99"/><rect x="7" y="0" width="1" height="1" fill="#a39e99"/><rect x="8" y="0" width="1" height="1" fill="#a39e99"/><rect x="9" y="0" width="1" height="1" fill="#a39e99"/><rect x="10" y="0" width="1" height="1" fill="#a39e99"/><rect x="11" y="0" width="1" height="1" fill="#a39e99"/><rect x="12" y="0" width="1" height="1" fill="#a39e99"/><rect x="0" y="1" width="1" height="1" fill="#a39e99"/><rect x="1" y="1" width="1" height="1" fill="#a39e99"/><rect x="2" y="1" width="1" height="1" fill="#a39e99"/><rect x="3" y="1" width="1" height="1" fill="#a39e99"/><rect x="4" y="1" width="1" height="1" fill="#a39e99"/><rect x="5" y="1" width="1" height="1" fill="#a39e99"/><rect x="6" y="1" width="1" height="1" fill="#a39e99"/><rect x="7" y="1" width="1" height="1" fill="#a39e99"/><rect x="8" y="1" width="1" height="1" fill="#a39e99"/><rect x="9" y="1" width="1" height="1" fill="#a39e99"/><rect x="10" y="1" width="1" height="1" fill="#a39e99"/><rect x="11" y="1" width="1" height="1" fill="#a39e99"/><rect x="12" y="1" width="1" height="1" fill="#a39e99"/><rect x="13" y="1" width="1" height="1" fill="#a39e99"/><rect x="11" y="2" width="1" height="1" fill="#a39e99"/><rect x="12" y="2" width="1" height="1" fill="#a39e99"/><rect x="13" y="2" width="1" height="1" fill="#a39e99"/><rect x="14" y="2" width="1" height="1" fill="#a39e99"/><rect x="4" y="3" width="1" height="1" fill="#a39e99"/><rect x="11" y="3" width="1" height="1" fill="#a39e99"/><rect x="12" y="3" width="1" height="1" fill="#a39e99"/><rect x="13" y="3" width="1" height="1" fill="#a39e99"/><rect x="14" y="3" width="1" height="1" fill="#a39e99"/><rect x="4" y="4" width="1" height="1" fill="#a39e99"/><rect x="5" y="4" width="1" height="1" fill="#a39e99"/><rect x="11" y="4" width="1" height="1" fill="#a39e99"/><rect x="12" y="4" width="1" height="1" fill="#a39e99"/><rect x="13" y="4" width="1" height="1" fill="#a39e99"/><rect x="0" y="5" width="1" height="1" fill="#a39e99"/><rect x="1" y="5" width="1" height="1" fill="#a39e99"/><rect x="2" y="5" width="1" height="1" fill="#a39e99"/><rect x="3" y="5" width="1" height="1" fill="#a39e99"/><rect x="4" y="5" width="1" height="1" fill="#a39e99"/><rect x="5" y="5" width="1" height="1" fill="#a39e99"/><rect x="6" y="5" width="1" height="1" fill="#a39e99"/><rect x="8" y="5" width="1" height="1" fill="#a39e99"/><rect x="9" y="5" width="1" height="1" fill="#a39e99"/><rect x="10" y="5" width="1" height="1" fill="#a39e99"/><rect x="11" y="5" width="1" height="1" fill="#a39e99"/><rect x="12" y="5" width="1" height="1" fill="#a39e99"/><rect x="13" y="5" width="1" height="1" fill="#a39e99"/><rect x="4" y="6" width="1" height="1" fill="#a39e99"/><rect x="5" y="6" width="1" height="1" fill="#a39e99"/><rect x="8" y="6" width="1" height="1" fill="#a39e99"/><rect x="9" y="6" width="1" height="1" fill="#a39e99"/><rect x="10" y="6" width="1" height="1" fill="#a39e99"/><rect x="11" y="6" width="1" height="1" fill="#a39e99"/><rect x="12" y="6" width="1" height="1" fill="#a39e99"/><rect x="4" y="7" width="1" height="1" fill="#a39e99"/></svg>

</body></html>
